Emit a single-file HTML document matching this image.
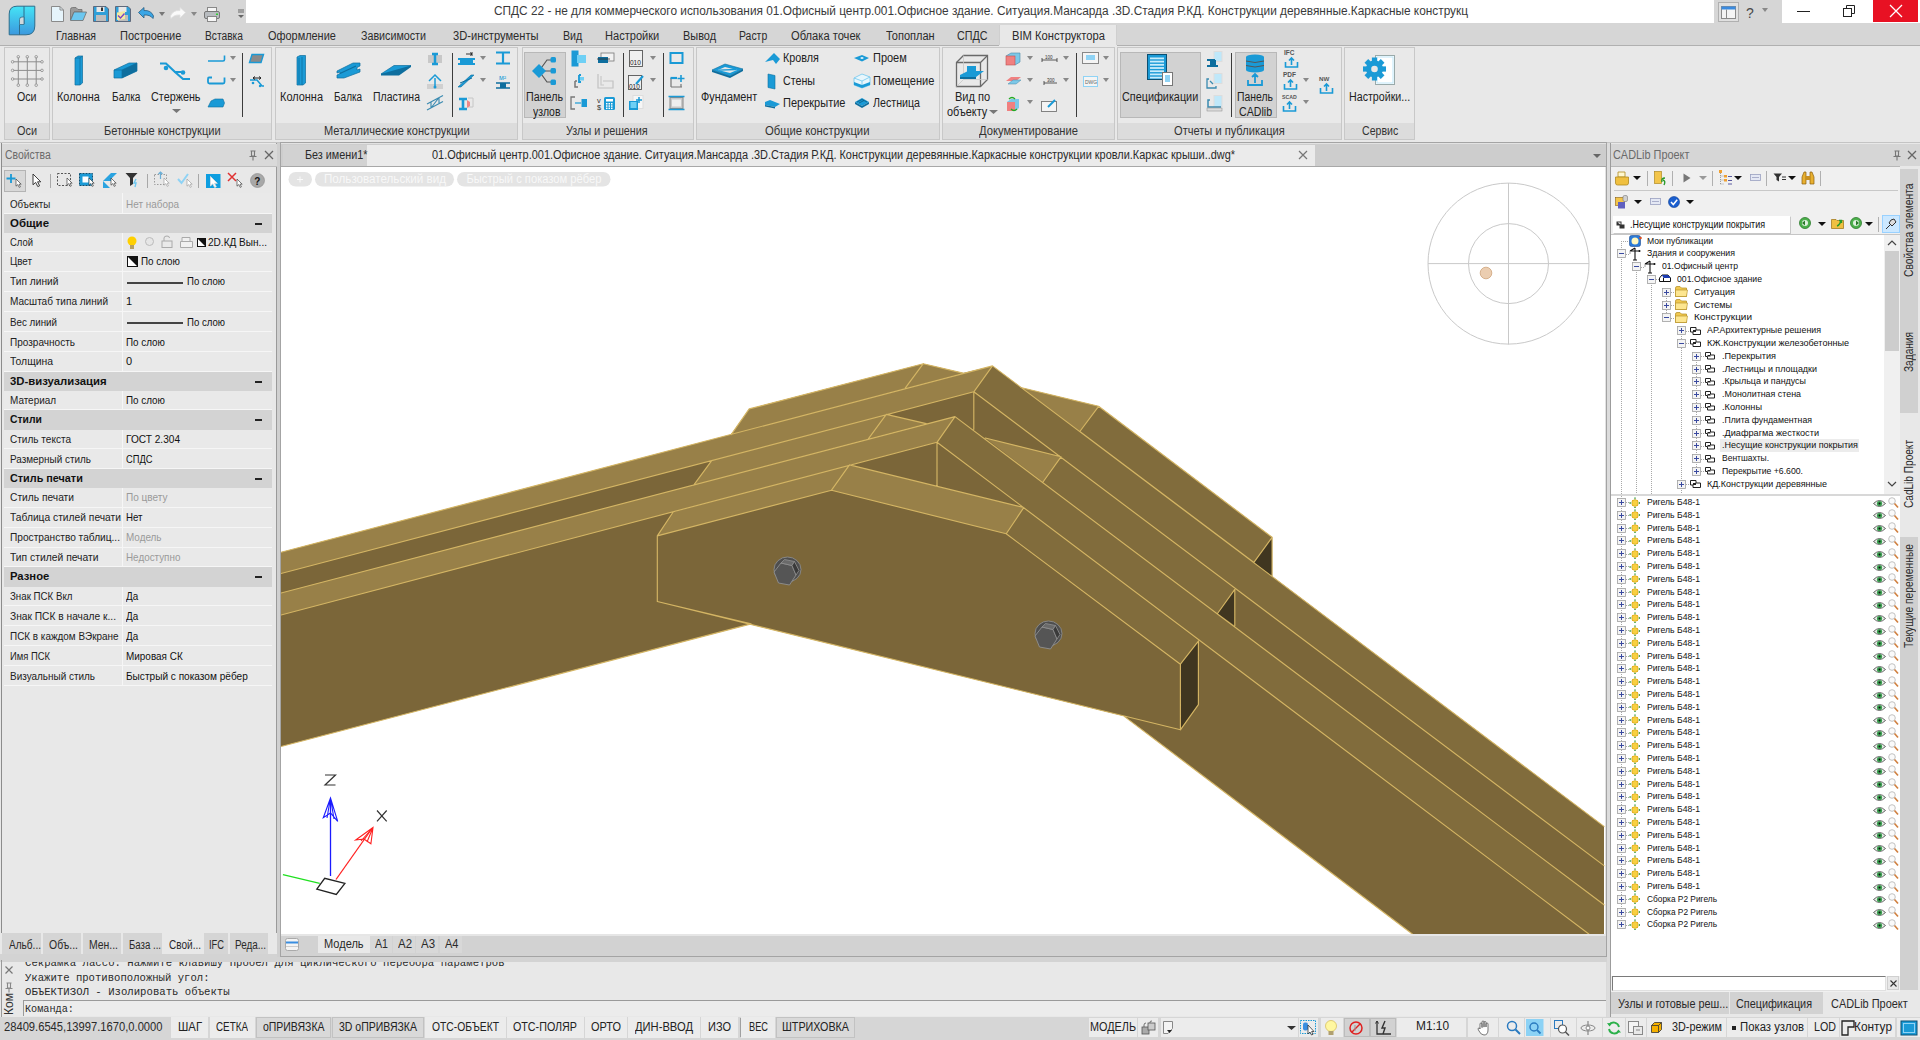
<!DOCTYPE html>
<html><head><meta charset="utf-8">
<style>
*{margin:0;padding:0;box-sizing:border-box}
html,body{width:1920px;height:1040px;overflow:hidden}
body{position:relative;background:#d9d9d9;font-family:"Liberation Sans",sans-serif;font-size:11px;color:#1e1e1e}
.a{position:absolute}
.t{position:absolute;white-space:nowrap;line-height:1;transform-origin:0 0}
svg{position:absolute;overflow:visible}
</style></head><body>
<div class="a" style="left:0px;top:0px;width:1920px;height:23px;background:#ffffff;"></div>
<div class="a" style="left:246px;top:22.5px;width:1468px;height:1.2px;background:#8c8c8c;"></div>
<div class="a" style="left:1782px;top:22.5px;width:138px;height:1.2px;background:#8c8c8c;"></div>
<div class="a" style="left:0px;top:0px;width:246px;height:23px;background:#d6d6d6;"></div>
<div class="a" style="left:1714px;top:0px;width:68px;height:23px;background:#d6d6d6;"></div>
<svg style="left:51px;top:6px;" width="13" height="16" viewBox="0 0 13 16"><path d="M0.5 0.5H9L12.5 4V15.5H0.5z" fill="#e6f4fb" stroke="#8a8a8a"/><path d="M9 0.5V4H12.5" fill="none" stroke="#8a8a8a"/></svg>
<svg style="left:70px;top:7px;" width="17" height="14" viewBox="0 0 17 14"><path d="M0.5 2.5Q0.5 0.5 2.5 0.5H6L8 2.5H12V5H4L0.5 13z" fill="#9a9a9a" stroke="#6e6e6e" stroke-width="0.8"/><path d="M4 5H16.5L13 13.5H0.5z" fill="#6cc7f0" stroke="#6e6e6e" stroke-width="0.8"/></svg>
<svg style="left:93px;top:6px;" width="16" height="16" viewBox="0 0 16 16"><path d="M0.5 0.5H13L15.5 3V15.5H0.5z" fill="#2e9fd8" stroke="#556" stroke-width="0.8"/><rect x="3.5" y="1" width="8" height="5" fill="#e8e8e8"/><rect x="8" y="1.5" width="2" height="3.5" fill="#333"/><rect x="3" y="9" width="10" height="6" fill="#bdbdbd"/></svg>
<svg style="left:115px;top:6px;" width="16" height="16" viewBox="0 0 16 16"><path d="M0.5 0.5H13L15.5 3V15.5H0.5z" fill="#2e9fd8" stroke="#556" stroke-width="0.8"/><rect x="3.5" y="1" width="8" height="5" fill="#e8e8e8"/><rect x="3" y="9" width="10" height="6" fill="#bdbdbd"/><path d="M2 6.5L10 5V13L2 14z" fill="#f3eaa0"/><path d="M3 9.5L5.5 12L9.5 7.5" fill="none" stroke="#7b3fc4" stroke-width="1.3"/></svg>
<svg style="left:138px;top:7px;" width="16" height="12" viewBox="0 0 16 12"><path d="M0.5 5.5L6 0.5V3.5Q13 3 15.5 9L15 11.5Q12 7.5 6 8V11z" fill="#3aa6e6" stroke="#2a5d80" stroke-width="0.8"/></svg>
<svg style="left:159.0px;top:12px;" width="6" height="5" viewBox="0 0 6 5"><path d="M0 0H6L3.0 4z" fill="#777"/></svg>
<svg style="left:170px;top:7px;" width="16" height="12" viewBox="0 0 16 12"><path d="M15.5 5.5L10 0.5V3.5Q3 3 0.5 9L1 11.5Q4 7.5 10 8V11z" fill="#fafafa" stroke="#e0e0e0" stroke-width="0.8"/></svg>
<svg style="left:191.0px;top:12px;" width="6" height="5" viewBox="0 0 6 5"><path d="M0 0H6L3.0 4z" fill="#888"/></svg>
<svg style="left:204px;top:7px;" width="16" height="15" viewBox="0 0 16 15"><rect x="3.5" y="0.5" width="9" height="5" fill="#f6f6f6" stroke="#888"/><rect x="0.5" y="4.5" width="15" height="7" rx="1.5" fill="#b8bcc0" stroke="#777"/><rect x="3.5" y="9.5" width="9" height="5" fill="#f6f6f6" stroke="#888"/><rect x="12" y="6.5" width="2" height="1.5" fill="#3c3"/></svg>
<svg style="left:238px;top:10px;" width="6" height="9" viewBox="0 0 6 9"><path d="M0 0H6M0 2H6" stroke="#666" stroke-width="1"/><path d="M0 5H6L3 8z" fill="#666"/></svg>
<div class="t" style="left:494.00px;top:5.32px;font-size:12.5px;color:#3a3a3a;transform:scaleX(0.9481);">СПДС 22 - не для коммерческого использования 01.Офисный центр.001.Офисное здание. Ситуация.Мансарда .3D.Стадия Р.КД. Конструкции деревянные.Каркасные конструкц</div>
<svg style="left:1718px;top:2px;" width="21" height="20" viewBox="0 0 21 20"><rect x="0.5" y="0.5" width="20" height="19" fill="#e0e0e0" stroke="#b0b0b0"/><rect x="3.5" y="4.5" width="14" height="12" fill="#f4f4f4" stroke="#8a8a8a"/><rect x="3.5" y="4.5" width="14" height="3" fill="#3b8be0"/><path d="M8.5 7.5V16.5" stroke="#8a8a8a"/></svg>
<div class="t" style="left:1746.00px;top:5.65px;font-size:14px;color:#4a4a4a;">?</div>
<svg style="left:1762.0px;top:8px;" width="6" height="5" viewBox="0 0 6 5"><path d="M0 0H6L3.0 4z" fill="#888"/></svg>
<div class="a" style="left:1797px;top:11px;width:13px;height:1.3px;background:#222;"></div>
<svg style="left:1843px;top:5px;" width="12" height="12" viewBox="0 0 12 12"><rect x="0.5" y="3.5" width="8" height="8" fill="none" stroke="#222"/><path d="M3.5 3.5V0.5H11.5V8.5H8.5" fill="none" stroke="#222"/></svg>
<div class="a" style="left:1873px;top:0px;width:45px;height:22px;background:#e81123;"></div>
<svg style="left:1889px;top:4px;" width="14" height="14" viewBox="0 0 14 14"><path d="M1 1L13 13M13 1L1 13" stroke="#fff" stroke-width="1.3"/></svg>
<div class="a" style="left:0px;top:23px;width:1920px;height:22px;background:#d6d6d6;"></div>
<div class="a" style="left:0px;top:45px;width:1920px;height:1px;background:#b0b0b0;"></div>
<div class="a" style="left:999px;top:25px;width:118px;height:21px;background:#e8e8e8;"></div>
<div class="a" style="left:999px;top:25px;width:1px;height:20px;background:#cfcfcf;"></div>
<div class="a" style="left:1116px;top:25px;width:1px;height:20px;background:#cfcfcf;"></div>
<div class="t" style="left:56.30px;top:29.84px;font-size:12px;color:#2b2b2b;transform:scaleX(0.8755);">Главная</div>
<div class="t" style="left:120.00px;top:29.84px;font-size:12px;color:#2b2b2b;transform:scaleX(0.9173);">Построение</div>
<div class="t" style="left:205.00px;top:29.84px;font-size:12px;color:#2b2b2b;transform:scaleX(0.8518);">Вставка</div>
<div class="t" style="left:268.00px;top:29.84px;font-size:12px;color:#2b2b2b;transform:scaleX(0.9103);">Оформление</div>
<div class="t" style="left:361.30px;top:29.84px;font-size:12px;color:#2b2b2b;transform:scaleX(0.8925);">Зависимости</div>
<div class="t" style="left:452.50px;top:29.84px;font-size:12px;color:#2b2b2b;transform:scaleX(0.9268);">3D-инструменты</div>
<div class="t" style="left:562.50px;top:29.84px;font-size:12px;color:#2b2b2b;transform:scaleX(0.8886);">Вид</div>
<div class="t" style="left:605.00px;top:29.84px;font-size:12px;color:#2b2b2b;transform:scaleX(0.9228);">Настройки</div>
<div class="t" style="left:683.30px;top:29.84px;font-size:12px;color:#2b2b2b;transform:scaleX(0.9096);">Вывод</div>
<div class="t" style="left:739.30px;top:29.84px;font-size:12px;color:#2b2b2b;transform:scaleX(0.8689);">Растр</div>
<div class="t" style="left:791.30px;top:29.84px;font-size:12px;color:#2b2b2b;transform:scaleX(0.9290);">Облака точек</div>
<div class="t" style="left:885.80px;top:29.84px;font-size:12px;color:#2b2b2b;transform:scaleX(0.9181);">Топоплан</div>
<div class="t" style="left:957.30px;top:29.84px;font-size:12px;color:#2b2b2b;transform:scaleX(0.8946);">СПДС</div>
<div class="t" style="left:1012.00px;top:29.84px;font-size:12px;color:#2b2b2b;transform:scaleX(0.9322);">BIM Конструктора</div>
<svg style="left:8px;top:5px;" width="29" height="31" viewBox="0 0 29 31"><defs><linearGradient id="lg" x1="0" y1="0" x2="0" y2="1"><stop offset="0" stop-color="#45e4f6"/><stop offset="1" stop-color="#3b98de"/></linearGradient></defs><path d="M9 1.2H26.8V21Q26.8 29.8 18 29.8H1.2V9Q1.2 1.2 9 1.2z" fill="url(#lg)" stroke="#2d6d8c" stroke-width="1"/><path d="M11.5 29.8V19.5M16 19V1.2" fill="none" stroke="#2d6d8c" stroke-width="1"/><path d="M11.5 19.5V14.5Q11.5 12 14 12H16V19.5z" fill="#cfd8dc" stroke="#2d6d8c" stroke-width="0.8"/></svg>
<div class="a" style="left:0px;top:46px;width:1920px;height:96px;background:#e8e8e8;"></div>
<div class="a" style="left:0px;top:142px;width:1920px;height:1px;background:#c4c4c4;"></div>
<div class="a" style="left:4px;top:47px;width:46px;height:93px;border:1px solid #c8c8c8;background:#e9e9e9"></div>
<div class="a" style="left:5px;top:123px;width:44px;height:16px;background:#dcdcdc;"></div>
<div class="t" style="left:17.00px;top:124.64px;font-size:12px;color:#333;transform:scaleX(0.9072);">Оси</div>
<div class="a" style="left:52px;top:47px;width:220px;height:93px;border:1px solid #c8c8c8;background:#e9e9e9"></div>
<div class="a" style="left:53px;top:123px;width:218px;height:16px;background:#dcdcdc;"></div>
<div class="t" style="left:103.80px;top:124.64px;font-size:12px;color:#333;transform:scaleX(0.9238);">Бетонные конструкции</div>
<div class="a" style="left:275px;top:47px;width:243px;height:93px;border:1px solid #c8c8c8;background:#e9e9e9"></div>
<div class="a" style="left:276px;top:123px;width:241px;height:16px;background:#dcdcdc;"></div>
<div class="t" style="left:323.80px;top:124.64px;font-size:12px;color:#333;transform:scaleX(0.9204);">Металлические конструкции</div>
<div class="a" style="left:522px;top:47px;width:172px;height:93px;border:1px solid #c8c8c8;background:#e9e9e9"></div>
<div class="a" style="left:523px;top:123px;width:170px;height:16px;background:#dcdcdc;"></div>
<div class="t" style="left:566.30px;top:124.64px;font-size:12px;color:#333;transform:scaleX(0.8998);">Узлы и решения</div>
<div class="a" style="left:696px;top:47px;width:244px;height:93px;border:1px solid #c8c8c8;background:#e9e9e9"></div>
<div class="a" style="left:697px;top:123px;width:242px;height:16px;background:#dcdcdc;"></div>
<div class="t" style="left:765.00px;top:124.64px;font-size:12px;color:#333;transform:scaleX(0.9410);">Общие конструкции</div>
<div class="a" style="left:942px;top:47px;width:173px;height:93px;border:1px solid #c8c8c8;background:#e9e9e9"></div>
<div class="a" style="left:943px;top:123px;width:171px;height:16px;background:#dcdcdc;"></div>
<div class="t" style="left:978.70px;top:124.64px;font-size:12px;color:#333;transform:scaleX(0.9322);">Документирование</div>
<div class="a" style="left:1117px;top:47px;width:225px;height:93px;border:1px solid #c8c8c8;background:#e9e9e9"></div>
<div class="a" style="left:1118px;top:123px;width:223px;height:16px;background:#dcdcdc;"></div>
<div class="t" style="left:1174.00px;top:124.64px;font-size:12px;color:#333;transform:scaleX(0.9241);">Отчеты и публикация</div>
<div class="a" style="left:1344px;top:47px;width:71px;height:93px;border:1px solid #c8c8c8;background:#e9e9e9"></div>
<div class="a" style="left:1345px;top:123px;width:69px;height:16px;background:#dcdcdc;"></div>
<div class="t" style="left:1361.80px;top:124.64px;font-size:12px;color:#333;transform:scaleX(0.8809);">Сервис</div>
<svg style="left:11px;top:55px;" width="33" height="32" viewBox="0 0 33 32"><path d="M7.3 2.5V29" stroke="#8c8c8c" stroke-width="1"/><circle cx="7.3" cy="1.8" r="1.3" fill="none" stroke="#8c8c8c" stroke-width="0.8"/><circle cx="7.3" cy="30.2" r="1.3" fill="none" stroke="#8c8c8c" stroke-width="0.8"/><path d="M16.3 2.5V29" stroke="#8c8c8c" stroke-width="1"/><circle cx="16.3" cy="1.8" r="1.3" fill="none" stroke="#8c8c8c" stroke-width="0.8"/><circle cx="16.3" cy="30.2" r="1.3" fill="none" stroke="#8c8c8c" stroke-width="0.8"/><path d="M25.2 2.5V29" stroke="#8c8c8c" stroke-width="1"/><circle cx="25.2" cy="1.8" r="1.3" fill="none" stroke="#8c8c8c" stroke-width="0.8"/><circle cx="25.2" cy="30.2" r="1.3" fill="none" stroke="#8c8c8c" stroke-width="0.8"/><path d="M2.5 6.8H30" stroke="#8c8c8c" stroke-width="1"/><circle cx="1.6" cy="6.8" r="1.3" fill="none" stroke="#8c8c8c" stroke-width="0.8"/><circle cx="31" cy="6.8" r="1.3" fill="none" stroke="#8c8c8c" stroke-width="0.8"/><path d="M2.5 15.4H30" stroke="#8c8c8c" stroke-width="1"/><circle cx="1.6" cy="15.4" r="1.3" fill="none" stroke="#8c8c8c" stroke-width="0.8"/><circle cx="31" cy="15.4" r="1.3" fill="none" stroke="#8c8c8c" stroke-width="0.8"/><path d="M2.5 24H30" stroke="#8c8c8c" stroke-width="1"/><circle cx="1.6" cy="24" r="1.3" fill="none" stroke="#8c8c8c" stroke-width="0.8"/><circle cx="31" cy="24" r="1.3" fill="none" stroke="#8c8c8c" stroke-width="0.8"/></svg>
<div class="t" style="left:17.00px;top:90.64px;font-size:12px;color:#222;transform:scaleX(0.8845);">Оси</div>
<svg style="left:73px;top:55px;" width="11" height="31" viewBox="0 0 11 31"><path d="M2 3L5 1H9.5V28L7 30H2z" fill="#1a9ad6" stroke="#0e6e9e" stroke-width="0.7"/><path d="M7 3V30M2 3H7L9.5 1" fill="none" stroke="#0e6e9e" stroke-width="0.7"/></svg>
<div class="t" style="left:57.30px;top:90.64px;font-size:12px;color:#222;transform:scaleX(0.9058);">Колонна</div>
<svg style="left:113px;top:61px;" width="25" height="18" viewBox="0 0 25 18"><path d="M1 9L16 2H24V10L9 17H1z" fill="#1a9ad6" stroke="#0e6e9e" stroke-width="0.7"/><path d="M9 17V9H1M9 9L24 2" fill="none" stroke="#0e6e9e" stroke-width="0.7"/><path d="M9 9L24 2V10L9 17z" fill="#0e6e9e"/></svg>
<div class="t" style="left:111.50px;top:90.64px;font-size:12px;color:#222;transform:scaleX(0.8444);">Балка</div>
<svg style="left:159px;top:61px;" width="33" height="19" viewBox="0 0 33 19"><path d="M1 2.5H7L16 11H22" fill="none" stroke="#1a9ad6" stroke-width="2.2"/><path d="M16 11L24 18H31" fill="none" stroke="#1a9ad6" stroke-width="2.2"/><circle cx="7" cy="7" r="2.3" fill="#1a9ad6"/><circle cx="24" cy="11.5" r="2.3" fill="#1a9ad6"/></svg>
<div class="t" style="left:150.50px;top:90.64px;font-size:12px;color:#222;transform:scaleX(0.9005);">Стержень</div>
<svg style="left:172.0px;top:109px;" width="9" height="5" viewBox="0 0 9 5"><path d="M0 0H9L4.5 4z" fill="#777"/></svg>
<svg style="left:207px;top:54px;" width="19" height="9" viewBox="0 0 19 9"><path d="M1 7H16Q17.5 7 17.5 5.5V1.5" fill="none" stroke="#1a9ad6" stroke-width="1.6"/></svg>
<svg style="left:230.0px;top:56px;" width="6" height="5" viewBox="0 0 6 5"><path d="M0 0H6L3.0 4z" fill="#888"/></svg>
<svg style="left:207px;top:76px;" width="19" height="9" viewBox="0 0 19 9"><path d="M5 1.5H2Q1 1.5 1 3V6Q1 7.5 2.5 7.5H16Q17.5 7.5 17.5 6V1.5" fill="none" stroke="#1a9ad6" stroke-width="1.8"/></svg>
<svg style="left:230.0px;top:78px;" width="6" height="5" viewBox="0 0 6 5"><path d="M0 0H6L3.0 4z" fill="#888"/></svg>
<svg style="left:207px;top:98px;" width="19" height="11" viewBox="0 0 19 11"><path d="M1 9L4 3L8 1H16L17.5 5L16 9z" fill="#1a9ad6" stroke="#0e6e9e" stroke-width="0.6"/></svg>
<div class="a" style="left:241.5px;top:53px;width:1.3px;height:64px;background:#3c3c3c;"></div>
<svg style="left:249px;top:54px;" width="15" height="9" viewBox="0 0 15 9"><path d="M3 0.5H14.5L12 8.5H0.5z" fill="#8a8a8a" stroke="#1a9ad6" stroke-width="1.4"/></svg>
<svg style="left:249px;top:75px;" width="16" height="14" viewBox="0 0 16 14"><path d="M1 5H8L13 11H15" fill="none" stroke="#1a9ad6" stroke-width="1.6"/><path d="M4 3H12M4 3L6 1.5M4 3L6 4.5M12 3L10 1.5M12 3L10 4.5" fill="none" stroke="#222" stroke-width="1"/><circle cx="4" cy="8" r="1.3" fill="#1a9ad6"/><circle cx="11" cy="11" r="1.2" fill="#1a9ad6"/></svg>
<svg style="left:296px;top:55px;" width="11" height="31" viewBox="0 0 11 31"><path d="M1 2L4 0.5H9.5V28L7 30H1z" fill="#1a9ad6" stroke="#0e6e9e" stroke-width="0.7"/><path d="M3 3V29M6 2V30" stroke="#0e6e9e" stroke-width="0.8"/></svg>
<div class="t" style="left:279.50px;top:90.64px;font-size:12px;color:#222;transform:scaleX(0.9122);">Колонна</div>
<svg style="left:336px;top:61px;" width="25" height="18" viewBox="0 0 25 18"><path d="M1 10L17 2H24V5L21 6.5V9L24 8V11L8 17H1V14L4 12.5V11L1 12z" fill="#1a9ad6" stroke="#0e6e9e" stroke-width="0.7"/><path d="M4 12.5L20 5" stroke="#0e6e9e" stroke-width="1.2"/></svg>
<div class="t" style="left:333.80px;top:90.64px;font-size:12px;color:#222;transform:scaleX(0.8356);">Балка</div>
<svg style="left:380px;top:64px;" width="32" height="12" viewBox="0 0 32 12"><path d="M1 10L14 1.5H31L19 10z" fill="#1a9ad6" stroke="#0e6e9e" stroke-width="0.7"/><path d="M1 10V11.5H19L31 3V1.5" fill="#0e6e9e"/></svg>
<div class="t" style="left:373.00px;top:90.64px;font-size:12px;color:#222;transform:scaleX(0.8734);">Пластина</div>
<svg style="left:427px;top:53px;" width="16" height="12" viewBox="0 0 16 12"><rect x="1" y="2" width="14" height="8" fill="#c8c8c8"/><path d="M5 1H11M5 11H11M8 1V11" stroke="#1a9ad6" stroke-width="2.5"/></svg>
<svg style="left:426px;top:73px;" width="18" height="17" viewBox="0 0 18 17"><rect x="1" y="11" width="16" height="5" fill="#d0d0d0"/><path d="M3 8L9 2L15 8" fill="none" stroke="#1a9ad6" stroke-width="1.5"/><path d="M9 5V15" stroke="#1a9ad6" stroke-width="1.5"/><circle cx="9" cy="14" r="1.5" fill="#1a9ad6"/></svg>
<svg style="left:426px;top:94px;" width="19" height="17" viewBox="0 0 19 17"><path d="M1 10L17 1.5M1 16L17 7.5M5 8V14M13 3.5V10M5 14L13 3.5" fill="none" stroke="#3a8ab0" stroke-width="1.1"/></svg>
<div class="a" style="left:452px;top:53px;width:1.3px;height:64px;background:#3c3c3c;"></div>
<svg style="left:457px;top:52px;" width="20" height="13" viewBox="0 0 20 13"><path d="M1 7H18M1 12H18" stroke="#1a9ad6" stroke-width="1.8"/><rect x="3" y="7" width="13" height="5" fill="#1a9ad6"/><path d="M9 2H15M13 0.5L15 2L13 3.5M15 0V4" stroke="#222" stroke-width="0.9" fill="none"/></svg>
<svg style="left:480.0px;top:56px;" width="6" height="5" viewBox="0 0 6 5"><path d="M0 0H6L3.0 4z" fill="#888"/></svg>
<svg style="left:457px;top:74px;" width="18" height="14" viewBox="0 0 18 14"><path d="M1 13L14 1H17L4 13z" fill="#1a9ad6" stroke="#0e6e9e" stroke-width="0.6"/><path d="M3 9L15 4" stroke="#0e6e9e" stroke-width="1"/></svg>
<svg style="left:480.0px;top:78px;" width="6" height="5" viewBox="0 0 6 5"><path d="M0 0H6L3.0 4z" fill="#888"/></svg>
<svg style="left:457px;top:96px;" width="18" height="15" viewBox="0 0 18 15"><path d="M2 3H10M2 13H10M6 3V13" stroke="#1a9ad6" stroke-width="2.6"/><path d="M11 2H16V11H11" fill="none" stroke="#c6c6c6" stroke-width="1"/><path d="M10 4L13 6V10L10 12" fill="#e88" stroke="none"/></svg>
<svg style="left:495px;top:51px;" width="16" height="14" viewBox="0 0 16 14"><path d="M1 1.5H15M1 12.5H15M8 1.5V12.5" stroke="#1a9ad6" stroke-width="2.2"/></svg>
<svg style="left:495px;top:73px;" width="16" height="16" viewBox="0 0 16 16"><path d="M1 10H15M1 15H15" stroke="#0e6e9e" stroke-width="1.6"/><rect x="5" y="10" width="6" height="5" fill="#0e6e9e"/><text x="4" y="7" font-size="7" fill="#1a9ad6" font-family="Liberation Sans">м²</text></svg>
<div class="a" style="left:524px;top:52px;width:42px;height:66px;background:#d2d2d2;border:1px solid #b8b8b8"></div>
<svg style="left:532px;top:55px;" width="25" height="32" viewBox="0 0 25 32"><path d="M7 16L15 5H19M7 16L19 16M7 16L15 27H19" fill="none" stroke="#555" stroke-width="1.2"/><path d="M7 9L14 16L7 23L0 16z" fill="#1a9ad6"/><rect x="18.5" y="2" width="5.5" height="5.5" rx="1.5" fill="#1a9ad6"/><rect x="18.5" y="13" width="5.5" height="5.5" rx="1.5" fill="#1a9ad6"/><rect x="18.5" y="24.5" width="5.5" height="5.5" rx="1.5" fill="#1a9ad6"/></svg>
<div class="t" style="left:525.50px;top:90.64px;font-size:12px;color:#222;transform:scaleX(0.8922);">Панель</div>
<div class="t" style="left:532.50px;top:105.84px;font-size:12px;color:#222;transform:scaleX(0.8713);">узлов</div>
<svg style="left:571px;top:50px;" width="16" height="18" viewBox="0 0 16 18"><rect x="0.5" y="0.5" width="7" height="16" fill="#1a9ad6"/><rect x="6" y="5" width="9" height="8" fill="#6fd0f5"/></svg>
<svg style="left:572px;top:73px;" width="12" height="16" viewBox="0 0 12 16"><path d="M3 8V14H6M3 8H5" fill="none" stroke="#777" stroke-width="1.5"/><path d="M7 2V9H9M7 2H9" fill="none" stroke="#1a9ad6" stroke-width="1.8"/><rect x="8" y="4" width="4" height="3.5" fill="#6fd0f5"/></svg>
<svg style="left:570px;top:96px;" width="18" height="14" viewBox="0 0 18 14"><path d="M5 1H1V13H5" fill="none" stroke="#777" stroke-width="1.3"/><path d="M5 7H11" stroke="#1a9ad6" stroke-width="1.2"/><rect x="11.5" y="3" width="5.5" height="8" fill="#1a9ad6"/></svg>
<svg style="left:597px;top:52px;" width="18" height="13" viewBox="0 0 18 13"><rect x="4" y="1" width="13" height="8" fill="#f2f2f2" stroke="#777" stroke-width="0.8"/><rect x="1" y="5" width="10" height="6" fill="#0e6e9e"/><path d="M0 7H13" stroke="#333" stroke-width="0.8"/></svg>
<svg style="left:597px;top:73px;" width="18" height="17" viewBox="0 0 18 17"><path d="M1 1V15H16V8H6" fill="none" stroke="#c2c2c2" stroke-width="1.2"/><path d="M4 3V12H7" fill="none" stroke="#c8c8c8" stroke-width="1.2"/></svg>
<svg style="left:597px;top:96px;" width="19" height="14" viewBox="0 0 19 14"><text x="0" y="7" font-size="7.5" fill="#333" font-family="Liberation Sans">v</text><text x="0" y="13.5" font-size="7.5" fill="#333" font-family="Liberation Sans">$</text><rect x="7" y="1" width="11" height="13" rx="1.5" fill="#1a9ad6"/><rect x="9" y="3" width="7" height="2.5" fill="#fff"/><rect x="9.0" y="7.0" width="1.5" height="1.5" fill="#fff"/><rect x="9.0" y="9.3" width="1.5" height="1.5" fill="#fff"/><rect x="9.0" y="11.6" width="1.5" height="1.5" fill="#fff"/><rect x="11.5" y="7.0" width="1.5" height="1.5" fill="#fff"/><rect x="11.5" y="9.3" width="1.5" height="1.5" fill="#fff"/><rect x="11.5" y="11.6" width="1.5" height="1.5" fill="#fff"/><rect x="14.0" y="7.0" width="1.5" height="1.5" fill="#fff"/><rect x="14.0" y="9.3" width="1.5" height="1.5" fill="#fff"/><rect x="14.0" y="11.6" width="1.5" height="1.5" fill="#fff"/></svg>
<div class="a" style="left:623px;top:53px;width:1.3px;height:64px;background:#3c3c3c;"></div>
<svg style="left:629px;top:50px;" width="14" height="17" viewBox="0 0 14 17"><rect x="0.5" y="0.5" width="13" height="16" fill="#f0f0f0" stroke="#555" stroke-width="0.9"/><text x="1" y="15" font-size="6.5" fill="#222" font-family="Liberation Sans">010</text></svg>
<svg style="left:650.0px;top:56px;" width="6" height="5" viewBox="0 0 6 5"><path d="M0 0H6L3.0 4z" fill="#888"/></svg>
<svg style="left:628px;top:73px;" width="17" height="17" viewBox="0 0 17 17"><rect x="0.5" y="2.5" width="13" height="14" fill="#f0f0f0" stroke="#555" stroke-width="0.9"/><text x="1" y="15.5" font-size="6.5" fill="#222" font-family="Liberation Sans">010</text><path d="M8 11L15 3" stroke="#1a9ad6" stroke-width="2"/></svg>
<svg style="left:650.0px;top:78px;" width="6" height="5" viewBox="0 0 6 5"><path d="M0 0H6L3.0 4z" fill="#888"/></svg>
<svg style="left:628px;top:95px;" width="16" height="16" viewBox="0 0 16 16"><rect x="5" y="0.5" width="10" height="13" fill="#f6f6f6" stroke="#ddd"/><rect x="1" y="6" width="9" height="9" fill="#1a9ad6"/><rect x="2.5" y="7" width="6" height="6" fill="#6fd0f5"/><path d="M11 2V8M8 5H14" stroke="#1a9ad6" stroke-width="1.5"/></svg>
<div class="a" style="left:663px;top:53px;width:1.3px;height:64px;background:#3c3c3c;"></div>
<svg style="left:669px;top:51px;" width="16" height="14" viewBox="0 0 16 14"><rect x="1.5" y="2" width="12" height="10" fill="none" stroke="#1a9ad6" stroke-width="2"/><path d="M1 2H14M1 12H14" stroke="#1a9ad6" stroke-width="2"/></svg>
<svg style="left:669px;top:74px;" width="18" height="16" viewBox="0 0 18 16"><path d="M2 4V13M2 13H13" fill="none" stroke="#777" stroke-width="1.2"/><path d="M1.5 4H8" stroke="#1a9ad6" stroke-width="2.2"/><path d="M12 1V8M8.5 4.5H15.5" stroke="#1a9ad6" stroke-width="1.6"/><path d="M12 10V13" stroke="#777" stroke-width="1.2"/></svg>
<svg style="left:668px;top:95px;" width="17" height="16" viewBox="0 0 17 16"><rect x="2" y="2.5" width="13" height="11" fill="#c8c8c8" stroke="#8a8a8a"/><rect x="4" y="4.5" width="9" height="7" fill="#eee"/><path d="M0.5 1.5H16.5M0.5 14.5H16.5" stroke="#1a9ad6" stroke-width="1.5"/></svg>
<svg style="left:711px;top:63px;" width="33" height="15" viewBox="0 0 33 15"><path d="M1 7L14 1L32 6L19 13z" fill="#1a9ad6" stroke="#0e6e9e" stroke-width="0.6"/><path d="M1 7V9L19 15L32 8V6L19 13z" fill="#0e6e9e"/><path d="M7 7L14 4L26 7L19 10z" fill="#e8e8e8"/><path d="M8 7.2L25 6.5" stroke="#1a9ad6" stroke-width="1.3"/></svg>
<div class="t" style="left:700.50px;top:90.64px;font-size:12px;color:#222;transform:scaleX(0.9010);">Фундамент</div>
<svg style="left:764px;top:52px;" width="17" height="12" viewBox="0 0 17 12"><path d="M1 10L8 3L10 1L16 7L12 12L9 8z" fill="#1a9ad6"/></svg>
<div class="t" style="left:782.50px;top:52.34px;font-size:12px;color:#222;transform:scaleX(0.8964);">Кровля</div>
<svg style="left:767px;top:73px;" width="10" height="17" viewBox="0 0 10 17"><path d="M1 1L8 2.5V16L1 14.5z" fill="#1a9ad6" stroke="#0e6e9e" stroke-width="0.6"/></svg>
<div class="t" style="left:782.50px;top:74.84px;font-size:12px;color:#222;transform:scaleX(0.8900);">Стены</div>
<svg style="left:764px;top:99px;" width="17" height="10" viewBox="0 0 17 10"><path d="M1 3L6 1L16 5L11 8L1 6z" fill="#1a9ad6"/><path d="M1 6L11 8V9.5L1 7.5z" fill="#0e6e9e"/></svg>
<div class="t" style="left:782.50px;top:97.34px;font-size:12px;color:#222;transform:scaleX(0.9181);">Перекрытие</div>
<svg style="left:853px;top:54px;" width="17" height="9" viewBox="0 0 17 9"><path d="M1 4L9 1L16 4L9 7.5z" fill="#1a9ad6"/><path d="M7 4L9 3L11 4L9 5z" fill="#fff"/></svg>
<div class="t" style="left:872.50px;top:52.34px;font-size:12px;color:#222;transform:scaleX(0.9158);">Проем</div>
<svg style="left:853px;top:73px;" width="18" height="16" viewBox="0 0 18 16"><path d="M1 5L9 1L17 4V12L9 15L1 12z" fill="#e8f6fc" stroke="#6fc6ee" stroke-width="0.8"/><path d="M1 5L9 8L17 4M9 8V15" fill="none" stroke="#6fc6ee" stroke-width="0.8"/><path d="M1 9L9 12L17 9V12L9 15L1 12z" fill="#1a9ad6"/></svg>
<div class="t" style="left:872.50px;top:74.84px;font-size:12px;color:#222;transform:scaleX(0.9199);">Помещение</div>
<svg style="left:854px;top:97px;" width="16" height="11" viewBox="0 0 16 11"><path d="M1 5L8 1L15 5L8 9z" fill="#1a9ad6"/><path d="M3 5L8 2.5L13 5M5 6L10 3.5" stroke="#0a5a80" stroke-width="0.8" fill="none"/><path d="M1 5V7L8 11L15 7V5L8 9z" fill="#0e6e9e"/></svg>
<div class="t" style="left:872.50px;top:97.34px;font-size:12px;color:#222;transform:scaleX(0.8881);">Лестница</div>
<svg style="left:955px;top:54px;" width="34" height="33" viewBox="0 0 34 33"><path d="M1.5 8.5L8.5 1.5H32.5V25.5L25.5 32.5H1.5z" fill="none" stroke="#6a6a6a" stroke-width="1.3"/><path d="M1.5 8.5H25.5V32.5M25.5 8.5L32.5 1.5" fill="none" stroke="#6a6a6a" stroke-width="1.3"/><path d="M8.5 1.5V25.5H32.5M8.5 25.5L1.5 32.5" fill="none" stroke="#c8c8c8" stroke-width="0.8"/><path d="M5 21L13 17H29L21 23H5z" fill="#1a9ad6"/><path d="M12 17V12H21V18H12" fill="#1a9ad6"/><path d="M5 23H21V25H5z" fill="#0e6e9e"/></svg>
<div class="t" style="left:954.70px;top:90.64px;font-size:12px;color:#222;transform:scaleX(0.9210);">Вид по</div>
<div class="t" style="left:947.00px;top:105.84px;font-size:12px;color:#222;transform:scaleX(0.9088);">объекту</div>
<svg style="left:988.5px;top:110px;" width="9" height="5" viewBox="0 0 9 5"><path d="M0 0H9L4.5 4z" fill="#777"/></svg>
<svg style="left:1005px;top:52px;" width="16" height="14" viewBox="0 0 16 14"><path d="M1 4L6 1H15V10L10 13z" fill="#7cc8e8" stroke="#4a8aa8" stroke-width="0.6"/><rect x="1" y="4" width="9" height="9" fill="#f08080" stroke="#c05050" stroke-width="0.6"/></svg>
<svg style="left:1027.0px;top:56px;" width="6" height="5" viewBox="0 0 6 5"><path d="M0 0H6L3.0 4z" fill="#888"/></svg>
<svg style="left:1005px;top:76px;" width="17" height="9" viewBox="0 0 17 9"><path d="M1 5L6 1H16L11 5z" fill="#f08080"/><path d="M3 8L8 4H16L11 8z" fill="#7cc8e8" stroke="#4a8aa8" stroke-width="0.5"/></svg>
<svg style="left:1027.0px;top:78px;" width="6" height="5" viewBox="0 0 6 5"><path d="M0 0H6L3.0 4z" fill="#888"/></svg>
<svg style="left:1006px;top:97px;" width="14" height="15" viewBox="0 0 14 15"><path d="M1 5L5 2H13V11L9 14z" fill="#7cc8e8"/><rect x="1" y="5" width="8" height="9" fill="#f08080"/><path d="M3 2Q6 -1 9 2M11 12Q8 15 5 12" stroke="#2a2" stroke-width="1.3" fill="none"/></svg>
<svg style="left:1027.0px;top:100px;" width="6" height="5" viewBox="0 0 6 5"><path d="M0 0H6L3.0 4z" fill="#888"/></svg>
<svg style="left:1041px;top:55px;" width="17" height="8" viewBox="0 0 17 8"><path d="M1 5H16M1 3V7M16 3V7" stroke="#333" stroke-width="0.8"/><text x="4" y="4" font-size="4.5" fill="#333" font-family="Liberation Sans">100</text></svg>
<svg style="left:1063.0px;top:56px;" width="6" height="5" viewBox="0 0 6 5"><path d="M0 0H6L3.0 4z" fill="#888"/></svg>
<svg style="left:1042px;top:77px;" width="16" height="8" viewBox="0 0 16 8"><path d="M2 6H15M2 4V8" stroke="#333" stroke-width="0.8"/><text x="5" y="4.5" font-size="4.5" fill="#333" font-family="Liberation Sans">300</text></svg>
<svg style="left:1063.0px;top:78px;" width="6" height="5" viewBox="0 0 6 5"><path d="M0 0H6L3.0 4z" fill="#888"/></svg>
<svg style="left:1041px;top:98px;" width="17" height="14" viewBox="0 0 17 14"><rect x="0.5" y="3.5" width="15" height="10" fill="#f4f4f4" stroke="#777" stroke-width="0.9"/><path d="M7 9L14 2" stroke="#1a9ad6" stroke-width="2"/></svg>
<div class="a" style="left:1076px;top:53px;width:1.3px;height:64px;background:#3c3c3c;"></div>
<svg style="left:1082px;top:52px;" width="17" height="12" viewBox="0 0 17 12"><rect x="0.5" y="0.5" width="16" height="11" fill="#f4f4f4" stroke="#888"/><rect x="4" y="3" width="9" height="5" fill="#8fd3f5"/></svg>
<svg style="left:1103.0px;top:56px;" width="6" height="5" viewBox="0 0 6 5"><path d="M0 0H6L3.0 4z" fill="#888"/></svg>
<svg style="left:1083px;top:76px;" width="15" height="11" viewBox="0 0 15 11"><rect x="0.5" y="0.5" width="14" height="10" fill="#f4f4f4" stroke="#8fd3f5"/><text x="2" y="7.5" font-size="5" fill="#666" font-family="Liberation Sans">DWG</text></svg>
<svg style="left:1103.0px;top:78px;" width="6" height="5" viewBox="0 0 6 5"><path d="M0 0H6L3.0 4z" fill="#888"/></svg>
<div class="a" style="left:1120px;top:52px;width:81px;height:66px;background:#d2d2d2;border:1px solid #b8b8b8"></div>
<svg style="left:1147px;top:54px;" width="27" height="33" viewBox="0 0 27 33"><rect x="0.5" y="0.5" width="19" height="25" fill="#1a9ad6" stroke="#0b4f72" stroke-width="1"/><rect x="3" y="3.5" width="14" height="1.8" fill="#c8ecfb"/><rect x="3" y="6.7" width="14" height="1.8" fill="#c8ecfb"/><rect x="3" y="9.9" width="14" height="1.8" fill="#c8ecfb"/><rect x="3" y="13.100000000000001" width="14" height="1.8" fill="#c8ecfb"/><rect x="3" y="16.3" width="14" height="1.8" fill="#c8ecfb"/><rect x="3" y="19.5" width="14" height="1.8" fill="#c8ecfb"/><rect x="3" y="22.700000000000003" width="14" height="1.8" fill="#c8ecfb"/><rect x="15.5" y="18.5" width="10" height="13" fill="#fff" stroke="#777"/><rect x="18" y="21" width="5" height="7" fill="#8fd3f5"/></svg>
<div class="t" style="left:1122.00px;top:90.64px;font-size:12px;color:#222;transform:scaleX(0.9021);">Спецификации</div>
<svg style="left:1206px;top:51px;" width="17" height="17" viewBox="0 0 17 17"><rect x="8" y="0.5" width="8" height="10" fill="#bfe8fa" stroke="#ddd"/><path d="M1 9H9M1 15H12" stroke="#0e6e9e" stroke-width="1.8"/><rect x="4" y="9" width="6" height="6" fill="#0e6e9e"/></svg>
<svg style="left:1206px;top:73px;" width="17" height="17" viewBox="0 0 17 17"><rect x="8" y="0.5" width="8" height="10" fill="#bfe8fa" stroke="#ddd"/><path d="M3 6H1V15H10V13" fill="none" stroke="#3a8ab0" stroke-width="1.3"/><path d="M4 8L7 11" stroke="#3a8ab0" stroke-width="1.2"/></svg>
<svg style="left:1206px;top:95px;" width="17" height="17" viewBox="0 0 17 17"><rect x="8" y="0.5" width="8" height="11" fill="#bfe8fa" stroke="#ddd"/><path d="M4 5H2V12H15" fill="none" stroke="#3a8ab0" stroke-width="1.5"/><rect x="1" y="13" width="15" height="3" fill="#ddd" stroke="#888" stroke-width="0.5"/></svg>
<div class="a" style="left:1230.5px;top:53px;width:1.3px;height:64px;background:#3c3c3c;"></div>
<div class="a" style="left:1235px;top:52px;width:42px;height:66px;background:#d2d2d2;border:1px solid #b8b8b8"></div>
<svg style="left:1245px;top:54px;" width="20" height="33" viewBox="0 0 20 33"><ellipse cx="10" cy="3" rx="9" ry="2.5" fill="#1a9ad6"/><rect x="1" y="3" width="18" height="13" fill="#1a9ad6"/><ellipse cx="10" cy="16" rx="9" ry="2.5" fill="#1a9ad6"/><path d="M1 7Q10 10 19 7M1 11.5Q10 14.5 19 11.5" stroke="#555" stroke-width="1" fill="none"/><path d="M3 26V31H17V26" fill="none" stroke="#1a9ad6" stroke-width="1.8"/><path d="M10 29V20M7 23L10 20L13 23" fill="none" stroke="#1a9ad6" stroke-width="1.8"/><path d="M7.5 23L10 19.5L12.5 23z" fill="#1a9ad6"/></svg>
<div class="t" style="left:1237.30px;top:90.64px;font-size:12px;color:#222;transform:scaleX(0.8657);">Панель</div>
<div class="t" style="left:1238.60px;top:105.84px;font-size:12px;color:#222;transform:scaleX(0.8864);">CADlib</div>
<svg style="left:1283px;top:48px;" width="18" height="21" viewBox="0 0 18 21"><text x="1" y="7" font-size="6.5" font-weight="bold" fill="#555" font-family="Liberation Sans">IFC</text><path d="M2.5 14V19H14.5V14" fill="none" stroke="#1a9ad6" stroke-width="1.6"/><path d="M8.5 17V10M6 12.5L8.5 10L11 12.5" fill="none" stroke="#1a9ad6" stroke-width="1.6"/></svg>
<svg style="left:1282px;top:70px;" width="18" height="21" viewBox="0 0 18 21"><text x="1" y="7" font-size="6.5" font-weight="bold" fill="#555" font-family="Liberation Sans">PDF</text><path d="M2.5 14V19H14.5V14" fill="none" stroke="#1a9ad6" stroke-width="1.6"/><path d="M8.5 17V10M6 12.5L8.5 10L11 12.5" fill="none" stroke="#1a9ad6" stroke-width="1.6"/></svg>
<svg style="left:1281px;top:92px;" width="18" height="21" viewBox="0 0 18 21"><text x="1" y="7" font-size="5.2" font-weight="bold" fill="#555" font-family="Liberation Sans">SCAD</text><path d="M2.5 14V19H14.5V14" fill="none" stroke="#1a9ad6" stroke-width="1.6"/><path d="M8.5 17V10M6 12.5L8.5 10L11 12.5" fill="none" stroke="#1a9ad6" stroke-width="1.6"/></svg>
<svg style="left:1318px;top:74px;" width="18" height="21" viewBox="0 0 18 21"><text x="1" y="7" font-size="6.2" font-weight="bold" fill="#555" font-family="Liberation Sans">NW</text><path d="M2.5 14V19H14.5V14" fill="none" stroke="#1a9ad6" stroke-width="1.6"/><path d="M8.5 17V10M6 12.5L8.5 10L11 12.5" fill="none" stroke="#1a9ad6" stroke-width="1.6"/></svg>
<svg style="left:1303.0px;top:78px;" width="6" height="5" viewBox="0 0 6 5"><path d="M0 0H6L3.0 4z" fill="#888"/></svg>
<svg style="left:1303.0px;top:100px;" width="6" height="5" viewBox="0 0 6 5"><path d="M0 0H6L3.0 4z" fill="#888"/></svg>
<svg style="left:1363px;top:54px;" width="34" height="33" viewBox="0 0 34 33"><rect x="12.5" y="1.5" width="19" height="29" fill="#fff" stroke="#9aa" stroke-width="1"/><rect x="14" y="3" width="16" height="26" fill="none" stroke="#bfe8fa" stroke-width="1"/><g transform="translate(11.5 15)"><rect x="-2.6" y="-11.5" width="5.2" height="6" fill="#1a9ad6" transform="rotate(0)"/><rect x="-2.6" y="-11.5" width="5.2" height="6" fill="#1a9ad6" transform="rotate(45)"/><rect x="-2.6" y="-11.5" width="5.2" height="6" fill="#1a9ad6" transform="rotate(90)"/><rect x="-2.6" y="-11.5" width="5.2" height="6" fill="#1a9ad6" transform="rotate(135)"/><rect x="-2.6" y="-11.5" width="5.2" height="6" fill="#1a9ad6" transform="rotate(180)"/><rect x="-2.6" y="-11.5" width="5.2" height="6" fill="#1a9ad6" transform="rotate(225)"/><rect x="-2.6" y="-11.5" width="5.2" height="6" fill="#1a9ad6" transform="rotate(270)"/><rect x="-2.6" y="-11.5" width="5.2" height="6" fill="#1a9ad6" transform="rotate(315)"/><circle r="8.5" fill="#1a9ad6"/><circle r="3.3" fill="#e8e8e8"/></g></svg>
<div class="t" style="left:1349.30px;top:90.64px;font-size:12px;color:#222;transform:scaleX(0.8890);">Настройки...</div>
<div class="a" style="left:0px;top:143px;width:277px;height:814px;background:#e8e8e8;"></div>
<div class="a" style="left:1px;top:143px;width:1px;height:790px;background:#8c8c8c;"></div>
<div class="a" style="left:276px;top:143px;width:1px;height:790px;background:#9a9a9a;"></div>
<div class="a" style="left:2px;top:144px;width:275px;height:22px;background:#d9d9d9;"></div>
<div class="a" style="left:2px;top:166px;width:275px;height:1px;background:#bdbdbd;"></div>
<div class="t" style="left:4.60px;top:148.74px;font-size:12px;color:#6a6a6a;transform:scaleX(0.8671);">Свойства</div>
<svg style="left:249px;top:150px;" width="8" height="11" viewBox="0 0 8 11"><path d="M1.5 1H6.5M2.5 1V6H5.5V1M0.5 6.5H7.5M4 6.5V10.5" fill="none" stroke="#777" stroke-width="1.1"/></svg>
<svg style="left:264px;top:150px;" width="10" height="10" viewBox="0 0 10 10"><path d="M1 1L9 9M9 1L1 9" stroke="#666" stroke-width="1.3"/></svg>
<div class="a" style="left:3.5px;top:170px;width:22px;height:21.5px;background:#d8d8d8;border:1px solid #b4b4b4"></div>
<svg style="left:6px;top:173px;" width="20" height="18" viewBox="0 0 20 18"><path d="M5 1V10M0.5 5.5H9.5" stroke="#1a9ad6" stroke-width="1.8"/><path transform="translate(10 6) scale(0.8)" d="M0 0V9L2.2 7L4 10.5L5.5 9.8L3.8 6.5H6.5z" fill="#fff" stroke="#333" stroke-width="0.8"/></svg>
<svg style="left:32px;top:173px;" width="10" height="14" viewBox="0 0 10 14"><path transform="translate(1 1) scale(1.2)" d="M0 0V9L2.2 7L4 10.5L5.5 9.8L3.8 6.5H6.5z" fill="#fff" stroke="#333" stroke-width="0.8"/></svg>
<div class="a" style="left:50px;top:174px;width:1px;height:14px;background:#a8a8a8;"></div>
<svg style="left:57px;top:172px;" width="18" height="17" viewBox="0 0 18 17"><rect x="0.5" y="1.5" width="13" height="12" fill="none" stroke="#555" stroke-dasharray="2 1.5"/><path transform="translate(10 6) scale(0.8)" d="M0 0V9L2.2 7L4 10.5L5.5 9.8L3.8 6.5H6.5z" fill="#fff" stroke="#333" stroke-width="0.8"/></svg>
<svg style="left:79px;top:172px;" width="18" height="17" viewBox="0 0 18 17"><rect x="0.5" y="1.5" width="13" height="12" fill="#1a9ad6" stroke="#0b4f72" stroke-dasharray="2 1"/><rect x="3.5" y="4.5" width="6" height="6" fill="#fff"/><path transform="translate(10 6) scale(0.8)" d="M0 0V9L2.2 7L4 10.5L5.5 9.8L3.8 6.5H6.5z" fill="#fff" stroke="#333" stroke-width="0.8"/></svg>
<svg style="left:102px;top:172px;" width="18" height="17" viewBox="0 0 18 17"><path d="M1 9L9 1V9z" fill="#2aa3e0"/><path d="M9 1H15L9 7z" fill="#2aa3e0"/><path d="M1 9V16H8z" fill="#2aa3e0"/><path transform="translate(9 6) scale(0.8)" d="M0 0V9L2.2 7L4 10.5L5.5 9.8L3.8 6.5H6.5z" fill="#fff" stroke="#333" stroke-width="0.8"/></svg>
<svg style="left:125px;top:172px;" width="15" height="17" viewBox="0 0 15 17"><path d="M0.5 1H12.5L8 6V12L5 14V6z" fill="#333"/><path d="M11 7L9 11H11L10 15" fill="none" stroke="#6cc7f0" stroke-width="1.4"/></svg>
<div class="a" style="left:147px;top:174px;width:1px;height:14px;background:#a8a8a8;"></div>
<svg style="left:154px;top:171px;" width="17" height="18" viewBox="0 0 17 18"><rect x="0.5" y="3.5" width="12" height="10" fill="none" stroke="#9a9a9a" stroke-dasharray="1.5 1.5"/><path d="M6.5 8V1M4.5 3L6.5 1L8.5 3" fill="none" stroke="#6aaed6" stroke-width="1.2"/><path transform="translate(10 7) scale(0.8)" d="M0 0V9L2.2 7L4 10.5L5.5 9.8L3.8 6.5H6.5z" fill="#fff" stroke="#999" stroke-width="0.8"/></svg>
<svg style="left:177px;top:173px;" width="17" height="16" viewBox="0 0 17 16"><path d="M1 6L4.5 10L11 1" fill="none" stroke="#8fd3f5" stroke-width="2"/><path transform="translate(10 6) scale(0.8)" d="M0 0V9L2.2 7L4 10.5L5.5 9.8L3.8 6.5H6.5z" fill="#fff" stroke="#999" stroke-width="0.8"/></svg>
<div class="a" style="left:198px;top:174px;width:1px;height:14px;background:#a8a8a8;"></div>
<svg style="left:206px;top:174px;" width="15" height="14" viewBox="0 0 15 14"><rect x="0" y="0" width="14.5" height="14" fill="#0e9ee0"/><path transform="translate(4.5 2.5) scale(1.05)" d="M0 0V9L2.2 7L4 10.5L5.5 9.8L3.8 6.5H6.5z" fill="#fff" stroke="#ddd" stroke-width="0.8"/></svg>
<svg style="left:227px;top:172px;" width="17" height="17" viewBox="0 0 17 17"><path d="M1 1L9 9M9 1L1 9" stroke="#e03030" stroke-width="1.5"/><path transform="translate(10 7) scale(0.8)" d="M0 0V9L2.2 7L4 10.5L5.5 9.8L3.8 6.5H6.5z" fill="#fff" stroke="#333" stroke-width="0.8"/></svg>
<svg style="left:250px;top:173px;" width="15" height="15" viewBox="0 0 15 15"><circle cx="7.5" cy="7.5" r="7" fill="#a8a8a8" stroke="#8a8a8a" stroke-width="0.6"/><text x="4.3" y="11.5" font-size="10" font-weight="bold" fill="#111" font-family="Liberation Sans">?</text></svg>
<div class="a" style="left:4px;top:193px;width:268px;height:21px;background:#e9e9e9;"></div>
<div class="a" style="left:4px;top:213px;width:268px;height:1px;background:#f6f6f6;"></div>
<div class="a" style="left:122px;top:193px;width:1px;height:21px;background:#f6f6f6;"></div>
<div class="t" style="left:10.00px;top:198.89px;font-size:11px;color:#222;transform:scaleX(0.8882);">Объекты</div>
<div class="t" style="left:126.00px;top:198.89px;font-size:11px;color:#9a9a9a;transform:scaleX(0.9038);">Нет набора</div>
<div class="a" style="left:4px;top:214px;width:268px;height:19px;background:#d3d3d3;"></div>
<div class="t" style="left:9.50px;top:217.79px;font-size:11px;color:#111;font-weight:bold;transform:scaleX(1.0396);">Общие</div>
<div class="a" style="left:255px;top:223px;width:7px;height:1.6px;background:#222;"></div>
<div class="a" style="left:4px;top:233px;width:268px;height:19px;background:#e9e9e9;"></div>
<div class="a" style="left:4px;top:251px;width:268px;height:1px;background:#f6f6f6;"></div>
<div class="a" style="left:122px;top:233px;width:1px;height:19px;background:#f6f6f6;"></div>
<div class="t" style="left:10.00px;top:237.09px;font-size:11px;color:#222;transform:scaleX(0.8598);">Слой</div>
<svg style="left:127px;top:236px;" width="10" height="14" viewBox="0 0 10 14"><circle cx="5" cy="5" r="4.5" fill="#ffd000"/><rect x="3" y="9" width="4" height="4" fill="#b8a060"/></svg>
<svg style="left:145px;top:237px;" width="9" height="9" viewBox="0 0 9 9"><circle cx="4.5" cy="4.5" r="4" fill="#e6e6e6" stroke="#bbb"/></svg>
<svg style="left:161px;top:235px;" width="12" height="13" viewBox="0 0 12 13"><rect x="1" y="6" width="10" height="6.5" fill="none" stroke="#aaa"/><path d="M3 6V3Q3 1 6 1Q8.5 1 8.5 3" fill="none" stroke="#aaa"/></svg>
<svg style="left:180px;top:236px;" width="13" height="12" viewBox="0 0 13 12"><path d="M2 5V1.5H10V5M0.5 5.5H12.5V11.5H0.5z" fill="#f0f0f0" stroke="#aaa"/></svg>
<svg style="left:197px;top:238px;" width="9" height="9" viewBox="0 0 9 9"><rect x="0.5" y="0.5" width="8" height="8" fill="#fff" stroke="#111"/><path d="M0.5 0.5H8.5V8.5z" fill="#111"/></svg>
<div class="t" style="left:208.00px;top:237.09px;font-size:11px;color:#111;transform:scaleX(0.9143);">2D.КД Вын...</div>
<div class="a" style="left:4px;top:252px;width:268px;height:20px;background:#e9e9e9;"></div>
<div class="a" style="left:4px;top:271px;width:268px;height:1px;background:#f6f6f6;"></div>
<div class="a" style="left:122px;top:252px;width:1px;height:20px;background:#f6f6f6;"></div>
<div class="t" style="left:10.00px;top:255.99px;font-size:11px;color:#222;transform:scaleX(0.8923);">Цвет</div>
<svg style="left:127px;top:256px;" width="11" height="11" viewBox="0 0 11 11"><rect x="0.5" y="0.5" width="10" height="10" fill="#fff" stroke="#111"/><path d="M0.5 0.5H10.5V10.5z" fill="#111"/></svg>
<div class="t" style="left:141.00px;top:255.99px;font-size:11px;color:#111;transform:scaleX(0.8966);">По слою</div>
<div class="a" style="left:4px;top:272px;width:268px;height:20px;background:#e9e9e9;"></div>
<div class="a" style="left:4px;top:291px;width:268px;height:1px;background:#f6f6f6;"></div>
<div class="a" style="left:122px;top:272px;width:1px;height:20px;background:#f6f6f6;"></div>
<div class="t" style="left:10.00px;top:276.19px;font-size:11px;color:#222;transform:scaleX(0.9268);">Тип линий</div>
<div class="a" style="left:127px;top:282px;width:56px;height:1.6px;background:#444;"></div>
<div class="t" style="left:187.00px;top:276.19px;font-size:11px;color:#111;transform:scaleX(0.8736);">По слою</div>
<div class="a" style="left:4px;top:292px;width:268px;height:20px;background:#e9e9e9;"></div>
<div class="a" style="left:4px;top:311px;width:268px;height:1px;background:#f6f6f6;"></div>
<div class="a" style="left:122px;top:292px;width:1px;height:20px;background:#f6f6f6;"></div>
<div class="t" style="left:10.00px;top:296.39px;font-size:11px;color:#222;transform:scaleX(0.9128);">Масштаб типа линий</div>
<div class="t" style="left:126.00px;top:296.39px;font-size:11px;color:#111;">1</div>
<div class="a" style="left:4px;top:312px;width:268px;height:20px;background:#e9e9e9;"></div>
<div class="a" style="left:4px;top:331px;width:268px;height:1px;background:#f6f6f6;"></div>
<div class="a" style="left:122px;top:312px;width:1px;height:20px;background:#f6f6f6;"></div>
<div class="t" style="left:10.00px;top:316.59px;font-size:11px;color:#222;transform:scaleX(0.8878);">Вес линий</div>
<div class="a" style="left:127px;top:322px;width:56px;height:1.6px;background:#444;"></div>
<div class="t" style="left:187.00px;top:316.59px;font-size:11px;color:#111;transform:scaleX(0.8736);">По слою</div>
<div class="a" style="left:4px;top:332px;width:268px;height:20px;background:#e9e9e9;"></div>
<div class="a" style="left:4px;top:351px;width:268px;height:1px;background:#f6f6f6;"></div>
<div class="a" style="left:122px;top:332px;width:1px;height:20px;background:#f6f6f6;"></div>
<div class="t" style="left:10.00px;top:336.79px;font-size:11px;color:#222;transform:scaleX(0.9123);">Прозрачность</div>
<div class="t" style="left:126.00px;top:336.79px;font-size:11px;color:#111;transform:scaleX(0.8966);">По слою</div>
<div class="a" style="left:4px;top:352px;width:268px;height:20px;background:#e9e9e9;"></div>
<div class="a" style="left:4px;top:371px;width:268px;height:1px;background:#f6f6f6;"></div>
<div class="a" style="left:122px;top:352px;width:1px;height:20px;background:#f6f6f6;"></div>
<div class="t" style="left:10.00px;top:356.39px;font-size:11px;color:#222;transform:scaleX(0.9441);">Толщина</div>
<div class="t" style="left:126.00px;top:356.39px;font-size:11px;color:#111;">0</div>
<div class="a" style="left:4px;top:372px;width:268px;height:19px;background:#d3d3d3;"></div>
<div class="t" style="left:9.50px;top:376.09px;font-size:11px;color:#111;font-weight:bold;transform:scaleX(1.0302);">3D-визуализация</div>
<div class="a" style="left:255px;top:381px;width:7px;height:1.6px;background:#222;"></div>
<div class="a" style="left:4px;top:391px;width:268px;height:19px;background:#e9e9e9;"></div>
<div class="a" style="left:4px;top:409px;width:268px;height:1px;background:#f6f6f6;"></div>
<div class="a" style="left:122px;top:391px;width:1px;height:19px;background:#f6f6f6;"></div>
<div class="t" style="left:10.00px;top:395.49px;font-size:11px;color:#222;transform:scaleX(0.9020);">Материал</div>
<div class="t" style="left:126.00px;top:395.49px;font-size:11px;color:#111;transform:scaleX(0.8966);">По слою</div>
<div class="a" style="left:4px;top:410px;width:268px;height:20px;background:#d3d3d3;"></div>
<div class="t" style="left:9.50px;top:414.09px;font-size:11px;color:#111;font-weight:bold;transform:scaleX(0.9396);">Стили</div>
<div class="a" style="left:255px;top:419px;width:7px;height:1.6px;background:#222;"></div>
<div class="a" style="left:4px;top:430px;width:268px;height:19px;background:#e9e9e9;"></div>
<div class="a" style="left:4px;top:448px;width:268px;height:1px;background:#f6f6f6;"></div>
<div class="a" style="left:122px;top:430px;width:1px;height:19px;background:#f6f6f6;"></div>
<div class="t" style="left:10.00px;top:433.59px;font-size:11px;color:#222;transform:scaleX(0.9126);">Стиль текста</div>
<div class="t" style="left:126.00px;top:433.59px;font-size:11px;color:#111;transform:scaleX(0.9187);">ГОСТ 2.304</div>
<div class="a" style="left:4px;top:449px;width:268px;height:20px;background:#e9e9e9;"></div>
<div class="a" style="left:4px;top:468px;width:268px;height:1px;background:#f6f6f6;"></div>
<div class="a" style="left:122px;top:449px;width:1px;height:20px;background:#f6f6f6;"></div>
<div class="t" style="left:10.00px;top:453.59px;font-size:11px;color:#222;transform:scaleX(0.9017);">Размерный стиль</div>
<div class="t" style="left:126.00px;top:453.59px;font-size:11px;color:#111;transform:scaleX(0.8480);">СПДС</div>
<div class="a" style="left:4px;top:469px;width:268px;height:19px;background:#d3d3d3;"></div>
<div class="t" style="left:9.50px;top:472.59px;font-size:11px;color:#111;font-weight:bold;transform:scaleX(0.9832);">Стиль печати</div>
<div class="a" style="left:255px;top:478px;width:7px;height:1.6px;background:#222;"></div>
<div class="a" style="left:4px;top:488px;width:268px;height:20px;background:#e9e9e9;"></div>
<div class="a" style="left:4px;top:507px;width:268px;height:1px;background:#f6f6f6;"></div>
<div class="a" style="left:122px;top:488px;width:1px;height:20px;background:#f6f6f6;"></div>
<div class="t" style="left:10.00px;top:492.19px;font-size:11px;color:#222;transform:scaleX(0.9296);">Стиль печати</div>
<div class="t" style="left:126.00px;top:492.19px;font-size:11px;color:#9a9a9a;transform:scaleX(0.9118);">По цвету</div>
<div class="a" style="left:4px;top:508px;width:268px;height:20px;background:#e9e9e9;"></div>
<div class="a" style="left:4px;top:527px;width:268px;height:1px;background:#f6f6f6;"></div>
<div class="a" style="left:122px;top:508px;width:1px;height:20px;background:#f6f6f6;"></div>
<div class="t" style="left:10.00px;top:512.29px;font-size:11px;color:#222;transform:scaleX(0.9319);">Таблица стилей печати</div>
<div class="t" style="left:126.00px;top:512.29px;font-size:11px;color:#111;transform:scaleX(0.8807);">Нет</div>
<div class="a" style="left:4px;top:528px;width:268px;height:20px;background:#e9e9e9;"></div>
<div class="a" style="left:4px;top:547px;width:268px;height:1px;background:#f6f6f6;"></div>
<div class="a" style="left:122px;top:528px;width:1px;height:20px;background:#f6f6f6;"></div>
<div class="t" style="left:10.00px;top:532.09px;font-size:11px;color:#222;transform:scaleX(0.9221);">Пространство таблиц...</div>
<div class="t" style="left:126.00px;top:532.09px;font-size:11px;color:#9a9a9a;transform:scaleX(0.8991);">Модель</div>
<div class="a" style="left:4px;top:548px;width:268px;height:19px;background:#e9e9e9;"></div>
<div class="a" style="left:4px;top:566px;width:268px;height:1px;background:#f6f6f6;"></div>
<div class="a" style="left:122px;top:548px;width:1px;height:19px;background:#f6f6f6;"></div>
<div class="t" style="left:10.00px;top:552.19px;font-size:11px;color:#222;transform:scaleX(0.9384);">Тип стилей печати</div>
<div class="t" style="left:126.00px;top:552.19px;font-size:11px;color:#9a9a9a;transform:scaleX(0.8966);">Недоступно</div>
<div class="a" style="left:4px;top:567px;width:268px;height:20px;background:#d3d3d3;"></div>
<div class="t" style="left:9.50px;top:571.09px;font-size:11px;color:#111;font-weight:bold;transform:scaleX(1.0233);">Разное</div>
<div class="a" style="left:255px;top:576px;width:7px;height:1.6px;background:#222;"></div>
<div class="a" style="left:4px;top:587px;width:268px;height:19px;background:#e9e9e9;"></div>
<div class="a" style="left:4px;top:605px;width:268px;height:1px;background:#f6f6f6;"></div>
<div class="a" style="left:122px;top:587px;width:1px;height:19px;background:#f6f6f6;"></div>
<div class="t" style="left:10.00px;top:590.59px;font-size:11px;color:#222;transform:scaleX(0.8838);">Знак ПСК Вкл</div>
<div class="t" style="left:126.00px;top:590.59px;font-size:11px;color:#111;transform:scaleX(0.8985);">Да</div>
<div class="a" style="left:4px;top:606px;width:268px;height:20px;background:#e9e9e9;"></div>
<div class="a" style="left:4px;top:625px;width:268px;height:1px;background:#f6f6f6;"></div>
<div class="a" style="left:122px;top:606px;width:1px;height:20px;background:#f6f6f6;"></div>
<div class="t" style="left:10.00px;top:610.59px;font-size:11px;color:#222;transform:scaleX(0.9274);">Знак ПСК в начале к...</div>
<div class="t" style="left:126.00px;top:610.59px;font-size:11px;color:#111;transform:scaleX(0.8985);">Да</div>
<div class="a" style="left:4px;top:626px;width:268px;height:20px;background:#e9e9e9;"></div>
<div class="a" style="left:4px;top:645px;width:268px;height:1px;background:#f6f6f6;"></div>
<div class="a" style="left:122px;top:626px;width:1px;height:20px;background:#f6f6f6;"></div>
<div class="t" style="left:10.00px;top:630.79px;font-size:11px;color:#222;transform:scaleX(0.9012);">ПСК в каждом ВЭкране</div>
<div class="t" style="left:126.00px;top:630.79px;font-size:11px;color:#111;transform:scaleX(0.8985);">Да</div>
<div class="a" style="left:4px;top:646px;width:268px;height:20px;background:#e9e9e9;"></div>
<div class="a" style="left:4px;top:665px;width:268px;height:1px;background:#f6f6f6;"></div>
<div class="a" style="left:122px;top:646px;width:1px;height:20px;background:#f6f6f6;"></div>
<div class="t" style="left:10.00px;top:650.59px;font-size:11px;color:#222;transform:scaleX(0.8556);">Имя ПСК</div>
<div class="t" style="left:126.00px;top:650.59px;font-size:11px;color:#111;transform:scaleX(0.9036);">Мировая СК</div>
<div class="a" style="left:4px;top:666px;width:268px;height:20px;background:#e9e9e9;"></div>
<div class="a" style="left:4px;top:685px;width:268px;height:1px;background:#f6f6f6;"></div>
<div class="a" style="left:122px;top:666px;width:1px;height:20px;background:#f6f6f6;"></div>
<div class="t" style="left:10.00px;top:670.69px;font-size:11px;color:#222;transform:scaleX(0.9037);">Визуальный стиль</div>
<div class="t" style="left:126.00px;top:670.69px;font-size:11px;color:#111;transform:scaleX(0.9167);">Быстрый с показом рёбер</div>
<div class="a" style="left:2px;top:933px;width:39px;height:21px;background:#d5d5d5;"></div>
<div class="t" style="left:9.00px;top:938.64px;font-size:12px;color:#2a2a2a;transform:scaleX(0.8390);">Альб...</div>
<div class="a" style="left:43px;top:933px;width:38px;height:21px;background:#d5d5d5;"></div>
<div class="t" style="left:49.00px;top:938.64px;font-size:12px;color:#2a2a2a;transform:scaleX(0.8705);">Объ...</div>
<div class="a" style="left:83px;top:933px;width:38px;height:21px;background:#d5d5d5;"></div>
<div class="t" style="left:89.00px;top:938.64px;font-size:12px;color:#2a2a2a;transform:scaleX(0.8673);">Мен...</div>
<div class="a" style="left:123px;top:933px;width:38.5px;height:21px;background:#d5d5d5;"></div>
<div class="t" style="left:129.00px;top:938.64px;font-size:12px;color:#2a2a2a;transform:scaleX(0.8013);">База ...</div>
<div class="t" style="left:169.00px;top:938.64px;font-size:12px;color:#2a2a2a;transform:scaleX(0.8356);">Свой...</div>
<div class="a" style="left:203.5px;top:933px;width:24.0px;height:21px;background:#d5d5d5;"></div>
<div class="t" style="left:209.00px;top:938.64px;font-size:12px;color:#2a2a2a;transform:scaleX(0.7754);">IFC</div>
<div class="a" style="left:229.5px;top:933px;width:38.5px;height:21px;background:#d5d5d5;"></div>
<div class="t" style="left:235.00px;top:938.64px;font-size:12px;color:#2a2a2a;transform:scaleX(0.8249);">Реда...</div>
<div class="a" style="left:0px;top:954px;width:1610px;height:7.5px;background:#d3d3d3;"></div>
<div class="a" style="left:277px;top:143px;width:3px;height:814px;background:#d0d0d0;"></div>
<div class="a" style="left:280px;top:142px;width:1327px;height:815px;border:1px solid #a4a4a4;background:#e2e2e2"></div>
<div class="a" style="left:281px;top:144px;width:1325px;height:23px;background:#cdcdcd;"></div>
<div class="a" style="left:283px;top:145px;width:84px;height:21px;background:#d2d2d2;"></div>
<div class="a" style="left:367px;top:145px;width:948px;height:21px;background:#ebebeb;"></div>
<div class="a" style="left:281px;top:166px;width:1325px;height:1px;background:#a8a8a8;"></div>
<div class="t" style="left:304.50px;top:149.34px;font-size:12px;color:#2a2a2a;transform:scaleX(0.9003);">Без имени1*</div>
<div class="t" style="left:432.00px;top:149.34px;font-size:12px;color:#2a2a2a;transform:scaleX(0.9113);">01.Офисный центр.001.Офисное здание. Ситуация.Мансарда .3D.Стадия Р.КД. Конструкции деревянные.Каркасные конструкции кровли.Каркас крыши..dwg*</div>
<svg style="left:1298px;top:150px;" width="10" height="10" viewBox="0 0 10 10"><path d="M1 1L9 9M9 1L1 9" stroke="#777" stroke-width="1.2"/></svg>
<svg style="left:1593.0px;top:154px;" width="8" height="5" viewBox="0 0 8 5"><path d="M0 0H8L4.0 4z" fill="#666"/></svg>
<div class="a" style="left:281px;top:934px;width:1325px;height:1.5px;background:#e6e6e6;"></div>
<div class="a" style="left:281px;top:935.5px;width:1325px;height:20px;background:#d2d2d2;"></div>
<div class="a" style="left:317.5px;top:935.5px;width:52.5px;height:17px;background:#e8e8e8;"></div>
<div class="a" style="left:370px;top:935.5px;width:21.5px;height:17px;background:#d8d8d8;"></div>
<div class="a" style="left:393px;top:935.5px;width:21.5px;height:17px;background:#d8d8d8;"></div>
<div class="a" style="left:416px;top:935.5px;width:21.5px;height:17px;background:#d8d8d8;"></div>
<div class="a" style="left:439.5px;top:935.5px;width:22.0px;height:17px;background:#d8d8d8;"></div>
<svg style="left:285px;top:938px;" width="14" height="13" viewBox="0 0 14 13"><rect x="0.5" y="0.5" width="13" height="12" rx="2" fill="#f4f4f4" stroke="#aaa"/><rect x="1" y="3.5" width="12" height="2" fill="#3a8ee0"/><path d="M1 8.5H13" stroke="#ccc"/></svg>
<div class="t" style="left:324.40px;top:937.74px;font-size:12px;color:#2a2a2a;transform:scaleX(0.9193);">Модель</div>
<div class="t" style="left:375.00px;top:937.74px;font-size:12px;color:#2a2a2a;transform:scaleX(0.8851);">A1</div>
<div class="t" style="left:398.00px;top:937.74px;font-size:12px;color:#2a2a2a;transform:scaleX(0.9532);">A2</div>
<div class="t" style="left:421.00px;top:937.74px;font-size:12px;color:#2a2a2a;transform:scaleX(0.9532);">A3</div>
<div class="t" style="left:444.50px;top:937.74px;font-size:12px;color:#2a2a2a;transform:scaleX(0.9191);">A4</div>
<div class="a" style="left:0px;top:961.5px;width:1606px;height:55px;background:#e8e8e8;"></div>
<div class="a" style="left:1px;top:960px;width:1px;height:57px;background:#9a9a9a;"></div>
<svg style="left:5px;top:966px;" width="8" height="8" viewBox="0 0 8 8"><path d="M0.5 0.5L7.5 7.5M7.5 0.5L0.5 7.5" stroke="#777" stroke-width="1.2"/></svg>
<svg style="left:5px;top:982px;" width="8" height="11" viewBox="0 0 8 11"><path d="M1.5 1H6.5M2.5 1V6H5.5V1M0.5 6.5H7.5M4 6.5V10.5" fill="none" stroke="#888" stroke-width="1.1"/></svg>
<div class="t" style="left:3px;top:1015px;font-size:12px;color:#333;transform:rotate(-90deg);transform-origin:0 0">Ком</div>
<div class="a" style="left:23px;top:961.7px;width:1583px;height:38px;overflow:hidden">
<div class="t" style="left:2.00px;top:-4.08px;font-size:10.67px;color:#2a2a2a;font-family:'Liberation Mono';">Секрамка лассо. Нажмите клавишу Пробел для циклического перебора параметров</div>
<div class="t" style="left:2.00px;top:10.92px;font-size:10.67px;color:#2a2a2a;font-family:'Liberation Mono';transform:scaleX(0.9949);">Укажите противоположный угол:</div>
<div class="t" style="left:2.00px;top:25.12px;font-size:10.67px;color:#2a2a2a;font-family:'Liberation Mono';">ОБЪЕКТИЗОЛ - Изолировать объекты</div>
</div>
<div class="a" style="left:23px;top:999.5px;width:1583px;height:1.2px;background:#9a9a9a;"></div>
<div class="a" style="left:23px;top:1000px;width:1px;height:16px;background:#9a9a9a;"></div>
<div class="a" style="left:24px;top:1001px;width:1582px;height:15px;background:#ececec;"></div>
<div class="t" style="left:24.50px;top:1003.52px;font-size:10.67px;color:#2a2a2a;font-family:'Liberation Mono';transform:scaleX(0.9576);">Команда:</div>
<div class="a" style="left:0px;top:1017px;width:1920px;height:23px;background:#d6d6d6;"></div>
<div class="t" style="left:3.50px;top:1021.14px;font-size:12px;color:#2a2a2a;transform:scaleX(0.9314);">28409.6545,13997.1670,0.0000</div>
<div class="a" style="left:170.8px;top:1017px;width:37.19999999999999px;height:21px;background:#ececec;"></div>
<div class="t" style="left:178.00px;top:1021.04px;font-size:12px;color:#222;transform:scaleX(0.9412);">ШАГ</div>
<div class="a" style="left:209.5px;top:1017px;width:45.5px;height:21px;background:#ececec;"></div>
<div class="t" style="left:216.00px;top:1021.04px;font-size:12px;color:#222;transform:scaleX(0.8205);">СЕТКА</div>
<div class="a" style="left:255.6px;top:1017px;width:75.4px;height:21px;background:#d9d9d9;border:1px solid #c2c2c2"></div>
<div class="t" style="left:262.50px;top:1021.04px;font-size:12px;color:#222;transform:scaleX(0.8729);">оПРИВЯЗКА</div>
<div class="a" style="left:332px;top:1017px;width:92px;height:21px;background:#d9d9d9;border:1px solid #c2c2c2"></div>
<div class="t" style="left:339.00px;top:1021.04px;font-size:12px;color:#222;transform:scaleX(0.8752);">3D оПРИВЯЗКА</div>
<div class="a" style="left:425px;top:1017px;width:81px;height:21px;background:#ececec;"></div>
<div class="t" style="left:432.00px;top:1021.04px;font-size:12px;color:#222;transform:scaleX(0.8593);">ОТС-ОБЪЕКТ</div>
<div class="a" style="left:507px;top:1017px;width:77px;height:21px;background:#ececec;"></div>
<div class="t" style="left:513.00px;top:1021.04px;font-size:12px;color:#222;transform:scaleX(0.8926);">ОТС-ПОЛЯР</div>
<div class="a" style="left:585px;top:1017px;width:42px;height:21px;background:#ececec;"></div>
<div class="t" style="left:591.00px;top:1021.04px;font-size:12px;color:#222;transform:scaleX(0.9108);">ОРТО</div>
<div class="a" style="left:628px;top:1017px;width:72px;height:21px;background:#ececec;"></div>
<div class="t" style="left:635.00px;top:1021.04px;font-size:12px;color:#222;transform:scaleX(0.9320);">ДИН-ВВОД</div>
<div class="a" style="left:701px;top:1017px;width:37px;height:21px;background:#ececec;"></div>
<div class="t" style="left:708.00px;top:1021.04px;font-size:12px;color:#222;transform:scaleX(0.9171);">ИЗО</div>
<div class="a" style="left:741px;top:1017px;width:34px;height:21px;background:#ececec;"></div>
<div class="t" style="left:749.00px;top:1021.04px;font-size:12px;color:#222;transform:scaleX(0.7696);">ВЕС</div>
<div class="a" style="left:776px;top:1017px;width:79px;height:21px;background:#d9d9d9;border:1px solid #c2c2c2"></div>
<div class="t" style="left:782.00px;top:1021.04px;font-size:12px;color:#222;transform:scaleX(0.8945);">ШТРИХОВКА</div>
<div class="a" style="left:739.5px;top:1018px;width:1px;height:19px;background:#a0a0a0;"></div>
<div class="a" style="left:1088.8px;top:1018px;width:48.5px;height:19px;background:#ececec;"></div>
<div class="t" style="left:1090.00px;top:1021.34px;font-size:12px;color:#222;transform:scaleX(0.9028);">МОДЕЛЬ</div>
<div class="a" style="left:1138px;top:1018px;width:20px;height:19px;background:#ececec;"></div>
<svg style="left:1141px;top:1021px;" width="16" height="14" viewBox="0 0 16 14"><rect x="1" y="6" width="7" height="7" fill="#aaa" stroke="#555" stroke-width="0.8"/><rect x="7" y="2" width="7" height="7" fill="#ccc" stroke="#555" stroke-width="0.8"/><path d="M3 6V4Q3 2 5 2M9 2V1Q9 0 11 0" fill="none" stroke="#555" stroke-width="0.8"/></svg>
<div class="a" style="left:1161px;top:1018px;width:137px;height:19px;background:#ececec;"></div>
<svg style="left:1163px;top:1021px;" width="10" height="13" viewBox="0 0 10 13"><path d="M0.5 0.5H9.5V7.5L5 12.5H0.5z" fill="#f4f4f4" stroke="#888"/><path d="M4 9H9L6.5 12z" fill="#222"/></svg>
<svg style="left:1286.5px;top:1026px;" width="9" height="5" viewBox="0 0 9 5"><path d="M0 0H9L4.5 4z" fill="#333"/></svg>
<div class="a" style="left:1299px;top:1018px;width:19px;height:19px;background:#ececec;"></div>
<svg style="left:1300px;top:1020px;" width="17" height="15" viewBox="0 0 17 15"><rect x="0.5" y="0.5" width="15" height="13" fill="none" stroke="#1a9ad6" stroke-dasharray="1.5 1"/><rect x="3" y="2.5" width="5" height="8" rx="2" fill="#3a8ee0"/><path d="M8 5V14L10 12L11.5 15L13 14.3L11.6 11.5H14z" fill="#fff" stroke="#333" stroke-width="0.8"/></svg>
<div class="a" style="left:1321px;top:1018px;width:22px;height:19px;background:#ececec;"></div>
<svg style="left:1325px;top:1020px;" width="12" height="16" viewBox="0 0 12 16"><circle cx="6" cy="6" r="5.5" fill="#fff7a0" stroke="#d8c060" stroke-width="0.8"/><rect x="3.5" y="11" width="5" height="4" fill="#b0a070"/></svg>
<div class="a" style="left:1344px;top:1018px;width:26px;height:19px;background:#d2d2d2;border:1px solid #bcbcbc"></div>
<svg style="left:1349px;top:1021px;" width="14" height="14" viewBox="0 0 14 14"><circle cx="7" cy="7" r="6" fill="none" stroke="#e02020" stroke-width="1.5"/><path d="M3 11L11 3" stroke="#e02020" stroke-width="1.5"/><path d="M6 4V10" stroke="#999" stroke-width="1"/></svg>
<div class="a" style="left:1370px;top:1018px;width:26px;height:19px;background:#d2d2d2;border:1px solid #bcbcbc"></div>
<svg style="left:1375px;top:1020px;" width="17" height="16" viewBox="0 0 17 16"><path d="M2 1V14H16" fill="none" stroke="#333" stroke-width="1.3"/><path d="M2 1L0.5 3.5M2 1L3.5 3.5" stroke="#333"/><path d="M10 1L7 8H10L8 14" fill="none" stroke="#333" stroke-width="1.4"/></svg>
<div class="a" style="left:1397px;top:1018px;width:69px;height:19px;background:#ececec;"></div>
<div class="t" style="left:1416.00px;top:1019.54px;font-size:12px;color:#222;transform:scaleX(0.9892);">M1:10</div>
<div class="a" style="left:1468px;top:1018px;width:30px;height:19px;background:#ececec;"></div>
<svg style="left:1477px;top:1020px;" width="16" height="16" viewBox="0 0 16 16"><path d="M3 9V4Q3 3 4 3Q5 3 5 4V8M5 7V2Q5 1 6 1Q7 1 7 2V7M7 7V2.5Q7 1.5 8 1.5Q9 1.5 9 2.5V7M9 7V4Q9 3 10 3Q11 3 11 4V10Q11 15 7 15Q4 15 2 11L1 9Q1 8 2 8Q3 8 3 9" fill="#fff" stroke="#555" stroke-width="0.8"/></svg>
<div class="a" style="left:1499px;top:1018px;width:25px;height:19px;background:#ececec;"></div>
<svg style="left:1506px;top:1020px;" width="16" height="16" viewBox="0 0 16 16"><circle cx="6" cy="6" r="4.5" fill="none" stroke="#2a7ac0" stroke-width="1.5"/><path d="M9.5 9.5L14 14" stroke="#2a7ac0" stroke-width="2"/></svg>
<div class="a" style="left:1525px;top:1018px;width:25px;height:19px;background:#ececec;"></div>
<svg style="left:1526px;top:1019px;" width="18" height="17" viewBox="0 0 18 17"><rect x="0" y="0" width="17.5" height="17" fill="#8cd2f5"/><circle cx="8" cy="8" r="4" fill="none" stroke="#2a7ac0" stroke-width="1.4"/><path d="M11 11L14.5 14.5" stroke="#2a7ac0" stroke-width="1.8"/></svg>
<div class="a" style="left:1551px;top:1018px;width:25px;height:19px;background:#ececec;"></div>
<svg style="left:1554px;top:1020px;" width="16" height="16" viewBox="0 0 16 16"><rect x="0.5" y="0.5" width="8" height="8" fill="none" stroke="#2a7ac0"/><circle cx="8.5" cy="9" r="4" fill="#fff" stroke="#555" stroke-width="1.2"/><path d="M11.5 12L15 15.5" stroke="#555" stroke-width="1.6"/></svg>
<div class="a" style="left:1577px;top:1018px;width:25px;height:19px;background:#ececec;"></div>
<svg style="left:1580px;top:1020px;" width="16" height="16" viewBox="0 0 16 16"><ellipse cx="8" cy="8" rx="7" ry="3" fill="none" stroke="#888" stroke-width="1"/><path d="M8 1V15" stroke="#888" stroke-width="1.2"/><circle cx="8" cy="8" r="2" fill="#fff" stroke="#888"/></svg>
<div class="a" style="left:1603px;top:1018px;width:22px;height:19px;background:#ececec;"></div>
<svg style="left:1606px;top:1020px;" width="16" height="16" viewBox="0 0 16 16"><path d="M13 7A5.5 5.5 0 0 0 3 5M3 9A5.5 5.5 0 0 0 13 11" fill="none" stroke="#2bb04a" stroke-width="1.8"/><path d="M1 3L3.5 6.5L6 3.5z M15 12.5L12.5 9.5L10 12.5z" fill="#2bb04a"/></svg>
<div class="a" style="left:1626px;top:1018px;width:20px;height:19px;background:#ececec;"></div>
<svg style="left:1628px;top:1020px;" width="16" height="16" viewBox="0 0 16 16"><rect x="0.5" y="1.5" width="10" height="11" fill="#f4f4f4" stroke="#888"/><rect x="5.5" y="6.5" width="9" height="8" fill="#e8e8e8" stroke="#888"/><path d="M8 10H12" stroke="#888"/></svg>
<div class="a" style="left:1647px;top:1018px;width:79px;height:19px;background:#ececec;"></div>
<svg style="left:1651px;top:1022px;" width="11" height="11" viewBox="0 0 11 11"><path d="M0.5 3.5L3.5 0.5H10.5V7.5L7.5 10.5H0.5z" fill="#f5b000" stroke="#333" stroke-width="0.8"/><path d="M0.5 3.5H7.5V10.5M7.5 3.5L10.5 0.5" fill="none" stroke="#333" stroke-width="0.8"/></svg>
<div class="t" style="left:1672.00px;top:1021.34px;font-size:12px;color:#222;transform:scaleX(0.9004);">3D-режим</div>
<div class="a" style="left:1727px;top:1018px;width:80px;height:19px;background:#ececec;"></div>
<div class="a" style="left:1732px;top:1026px;width:4px;height:4px;background:#222;"></div>
<div class="t" style="left:1740.00px;top:1021.34px;font-size:12px;color:#222;transform:scaleX(0.9446);">Показ узлов</div>
<div class="a" style="left:1808px;top:1018px;width:31px;height:19px;background:#ececec;"></div>
<div class="t" style="left:1814.00px;top:1021.34px;font-size:12px;color:#222;transform:scaleX(0.8911);">LOD</div>
<div class="a" style="left:1840px;top:1018px;width:55px;height:19px;background:#ececec;"></div>
<svg style="left:1841px;top:1020px;" width="14" height="16" viewBox="0 0 14 16"><path d="M1 15V1H13V7H7V15z" fill="none" stroke="#222" stroke-width="1.3"/></svg>
<div class="t" style="left:1854.00px;top:1021.34px;font-size:12px;color:#222;transform:scaleX(0.9878);">Контур</div>
<div class="a" style="left:1897px;top:1018px;width:23px;height:19px;background:#ececec;"></div>
<svg style="left:1900px;top:1020px;" width="18" height="16" viewBox="0 0 18 16"><rect x="1" y="1" width="16" height="14" fill="#1a9ad6" stroke="#0b4f72"/><rect x="3.5" y="3.5" width="11" height="9" fill="#1a9ad6" stroke="#8fd3f5"/></svg>
<div class="a" style="left:281px;top:167px;width:1324px;height:767px;overflow:hidden;background:#fff"><svg width="1920" height="1040" style="left:-281px;top:-167px" viewBox="0 0 1920 1040"><g><polygon fill="#7b6639" points="281.0,552.3 731.2,434.6 749.2,408.9 923.3,363.7 963.0,373.1 992.5,365.9 1020.7,387.5 1098.6,406.3 1272.1,537.3 1272.1,576.3 1604.0,826.4 1604.0,934.0 1412.3,934.0 1123.9,716.1 751.1,623.9 281.0,746.5"/><polygon fill="#816c3c" points="992.5,365.9 1604.0,826.4 1604.0,865.6 973.8,391.8"/><polygon fill="#816c3c" points="955.0,416.6 1604.0,904.8 1604.0,934.0 1588.8,934.0 937.0,442.3"/><polygon fill="#816c3c" points="1061.0,456.8 1234.8,589.3 1217.5,613.5 1043.0,482.0"/><polygon fill="#988048" points="985.3,438.0 1061.0,456.8 1043.0,482.0"/><polygon fill="#403620" points="1217.5,613.5 1234.8,589.3 1234.8,625.6"/><polygon fill="#988048" points="749.2,408.9 923.3,363.7 963.0,373.1 731.2,434.6"/><polygon fill="#988048" points="1020.7,387.5 1098.6,406.3 1079.8,431.5"/><polygon fill="#816c3c" points="1098.6,406.3 1272.1,537.3 1253.9,562.4 1079.8,431.5"/><polygon fill="#403620" points="1253.9,562.4 1272.1,537.3 1272.1,576.3"/><polygon fill="#988048" points="281.0,552.3 992.5,365.9 973.8,391.8 281.0,573.5"/><polygon fill="#988048" points="711.7,460.6 886.3,414.4 926.2,423.6 693.7,485.1"/><polygon fill="#988048" points="281.0,593.0 955.0,416.6 937.0,442.3 281.0,615.0"/><polygon fill="#7b6639" points="657.3,535.9 831.5,490.2 1006.2,533.8 1180.4,664.2 1180.4,729.8 657.3,601.5"/><polygon fill="#988048" points="657.3,535.9 673.0,512.2 849.5,464.9 1023.8,507.5 1006.2,533.8 831.5,490.2"/><polygon fill="#816c3c" points="1006.2,533.8 1023.8,507.5 1198.4,641.1 1180.4,664.2"/><polygon fill="#7b6639" points="849.5,464.9 937.0,442.3 937.0,486.3"/><polygon fill="#7b6639" points="937.0,442.3 1023.8,507.5 937.0,486.3"/><polygon fill="#403620" points="1180.4,664.2 1198.4,641.1 1198.4,704.6 1180.4,729.8"/></g><path d="M281.0 552.3L992.5 365.9 M281.0 573.5L973.8 391.8 M281.0 593.0L955.0 416.6 M281.0 615.0L937.0 442.3 M281.0 746.5L751.1 623.9 M751.1 623.9L657.3 601.5 M731.2 434.6L749.2 408.9 M749.2 408.9L923.3 363.7 M923.3 363.7L905.2 388.2 M923.3 363.7L963.0 373.1 M1020.7 387.5L1098.6 406.3 M1098.6 406.3L1079.8 431.5 M1098.6 406.3L1272.1 537.3 M1079.8 431.5L1253.9 562.4 M1253.9 562.4L1272.1 537.3 M1272.1 537.3L1272.1 576.3 M992.5 365.9L973.8 391.8 M973.8 391.8L973.8 429.3 M992.5 365.9L1604.0 826.4 M973.8 391.8L1604.0 865.6 M955.0 416.6L1604.0 904.8 M937.0 442.3L1588.8 934.0 M955.0 416.6L937.0 442.3 M937.0 442.3L937.0 486.3 M711.7 460.6L693.7 485.1 M886.3 414.4L868.3 438.9 M886.3 414.4L926.2 423.6 M985.3 438.0L1061.0 456.8 M1061.0 456.8L1043.0 482.0 M1217.5 613.5L1234.8 589.3 M1234.8 589.3L1234.8 625.6 M657.3 535.9L673.0 512.2 M657.3 535.9L831.5 490.2 M831.5 490.2L849.5 464.9 M831.5 490.2L1006.2 533.8 M1006.2 533.8L1023.8 507.5 M849.5 464.9L1023.8 507.5 M1006.2 533.8L1180.4 664.2 M1180.4 664.2L1198.4 641.1 M1180.4 664.2L1180.4 729.8 M1180.4 729.8L1198.4 704.6 M1198.4 641.1L1198.4 704.6 M1180.4 729.8L657.3 601.5 M657.3 535.9L657.3 601.5 M1412.3 934.0L1123.9 716.1" stroke="#d4b564" stroke-width="1.15" fill="none" stroke-linecap="round"/><ellipse cx="787.5" cy="569.5" rx="13.5" ry="12.5" fill="#4e4e4e" stroke="#8c8c8c" stroke-width="0.9"/><polygon fill="#555" stroke="#909090" stroke-width="0.9" points="774.0,572.0 781.0,563.0 792.0,565.5 796.0,575.0 789.5,585.0 778.5,583.0"/><polygon fill="#6a6a6a" stroke="#909090" stroke-width="0.8" points="781.0,563.0 784.5,559.5 794.5,561.5 792.0,565.5"/><polygon fill="#3a3a3a" stroke="#909090" stroke-width="0.8" points="792.0,565.5 794.5,561.5 799.0,570.5 796.0,575.0"/><ellipse cx="1048.5" cy="633.5" rx="13.5" ry="12.5" fill="#4e4e4e" stroke="#8c8c8c" stroke-width="0.9"/><polygon fill="#555" stroke="#909090" stroke-width="0.9" points="1035.0,636.0 1042.0,627.0 1053.0,629.5 1057.0,639.0 1050.5,649.0 1039.5,647.0"/><polygon fill="#6a6a6a" stroke="#909090" stroke-width="0.8" points="1042.0,627.0 1045.5,623.5 1055.5,625.5 1053.0,629.5"/><polygon fill="#3a3a3a" stroke="#909090" stroke-width="0.8" points="1053.0,629.5 1055.5,625.5 1060.0,634.5 1057.0,639.0"/><g fill="none" stroke="#c9c9c9" stroke-width="1"><circle cx="1508.5" cy="263.6" r="80.5"/><circle cx="1508.5" cy="263.6" r="40"/><path d="M1508.5 183V344.5M1428 263.6H1589"/></g><circle cx="1486" cy="273" r="5.8" fill="#ebcdb0" stroke="#d6b08c" stroke-width="1"/><path d="M330.5 876V800" stroke="#1a1aff" stroke-width="1.3"/><path d="M330.5 798L323.3 817.7L330.5 813L337.7 821.3z M330.5 798L327 818M330.5 798L334 819" fill="none" stroke="#1a1aff" stroke-width="1.1"/><path d="M336 879.5L372 828.5" stroke="#ff2020" stroke-width="1.3"/><path d="M373 827.5L355.7 840L364 839L370.9 843.7z M373 827.5L361 841M373 827.5L367 842" fill="none" stroke="#ff2020" stroke-width="1.1"/><path d="M282.9 874.7L319.7 883.3" stroke="#20e020" stroke-width="1.3"/><path d="M316.8 889.1L324.7 878.3L344.9 883.3L336.3 894.4z" fill="none" stroke="#222" stroke-width="1.3"/><path d="M325 775H335.5L325 785H335.5" fill="none" stroke="#333" stroke-width="1.2"/><path d="M377 810.5L386.7 821.3M386.7 810.5L377 821.3" fill="none" stroke="#333" stroke-width="1.2"/><rect x="288.5" y="172" width="23.5" height="14.5" rx="7.25" fill="#e4e4e4"/><rect x="315" y="172" width="139" height="14.5" rx="7.25" fill="#e4e4e4"/><rect x="457" y="172" width="153.5" height="14.5" rx="7.25" fill="#e4e4e4"/><path d="M297 179.5H303M300 176.5V182.5" stroke="#fafafa" stroke-width="1"/><text x="324" y="183.2" font-size="12" fill="#f8f8f8" font-family="Liberation Sans" textLength="122" lengthAdjust="spacingAndGlyphs">Пользовательский вид</text><text x="466.5" y="183.2" font-size="12" fill="#f8f8f8" font-family="Liberation Sans" textLength="135" lengthAdjust="spacingAndGlyphs">Быстрый с показом рёбер</text></svg><!--VPEXTRA--></div>
<div class="a" style="left:1607px;top:143px;width:3px;height:874px;background:#dcdcdc;"></div>
<div class="a" style="left:1610px;top:143px;width:310px;height:874px;background:#e8e8e8;"></div>
<div class="a" style="left:1610px;top:143px;width:1px;height:874px;background:#9c9c9c;"></div>
<div class="a" style="left:1611px;top:144px;width:309px;height:22px;background:#d6d6d6;"></div>
<div class="t" style="left:1613.00px;top:148.64px;font-size:12px;color:#6a6a6a;transform:scaleX(0.9083);">CADLib Проект</div>
<svg style="left:1893px;top:150px;" width="8" height="11" viewBox="0 0 8 11"><path d="M1.5 1H6.5M2.5 1V6H5.5V1M0.5 6.5H7.5M4 6.5V10.5" fill="none" stroke="#777" stroke-width="1.1"/></svg>
<svg style="left:1907px;top:150px;" width="10" height="10" viewBox="0 0 10 10"><path d="M1 1L9 9M9 1L1 9" stroke="#666" stroke-width="1.3"/></svg>
<div class="a" style="left:1611px;top:166px;width:289px;height:826px;background:#f0f0f0;"></div>
<div class="a" style="left:1611px;top:166px;width:289px;height:1px;background:#b8b8b8;"></div>
<div class="a" style="left:1900px;top:166px;width:20px;height:851px;background:#e8e8e8;"></div>
<div class="a" style="left:1900px;top:169px;width:18px;height:244px;background:#d0d0d0;"></div>
<div class="a" style="left:1900px;top:537px;width:18px;height:453px;background:#d0d0d0;"></div>
<div class="a" style="left:1902px;top:276.5px;width:93.5px;height:14px;transform:rotate(-90deg);transform-origin:0 0;overflow:visible">
<div class="t" style="left:0.00px;top:1.34px;font-size:12px;color:#2a2a2a;transform:scaleX(0.8566);">Свойства элемента</div>
</div>
<div class="a" style="left:1902px;top:372px;width:40px;height:14px;transform:rotate(-90deg);transform-origin:0 0;overflow:visible">
<div class="t" style="left:0.00px;top:1.34px;font-size:12px;color:#2a2a2a;transform:scaleX(0.8432);">Задания</div>
</div>
<div class="a" style="left:1902px;top:508px;width:68px;height:14px;transform:rotate(-90deg);transform-origin:0 0;overflow:visible">
<div class="t" style="left:0.00px;top:1.34px;font-size:12px;color:#2a2a2a;transform:scaleX(0.8406);">CadLib Проект</div>
</div>
<div class="a" style="left:1902px;top:648px;width:104px;height:14px;transform:rotate(-90deg);transform-origin:0 0;overflow:visible">
<div class="t" style="left:0.00px;top:1.34px;font-size:12px;color:#2a2a2a;transform:scaleX(0.8574);">Текущие переменные</div>
</div>
<svg style="left:1615px;top:171px;" width="14" height="15" viewBox="0 0 14 15"><path d="M3 1H10V6H3z" fill="#fff8d0" stroke="#b08a20" stroke-width="0.8"/><path d="M0.5 6H13.5V12Q13.5 14 11.5 14H2.5Q0.5 14 0.5 12z" fill="#f0c040" stroke="#b08a20" stroke-width="0.8"/></svg>
<svg style="left:1633.0px;top:176px;" width="8" height="5" viewBox="0 0 8 5"><path d="M0 0H8L4.0 4z" fill="#111"/></svg>
<div class="a" style="left:1647px;top:171px;width:1px;height:15px;background:#b0b0b0;"></div>
<svg style="left:1654px;top:171px;" width="13" height="16" viewBox="0 0 13 16"><rect x="0.5" y="0.5" width="7" height="12" fill="#f3c54a" stroke="#b08a20" stroke-width="0.7"/><path d="M9 9Q12 10 10 14M11 7Q7 7 8 11" fill="none" stroke="#2a9a2a" stroke-width="1.4"/></svg>
<div class="a" style="left:1672px;top:171px;width:1px;height:15px;background:#b0b0b0;"></div>
<svg style="left:1683px;top:173px;" width="8" height="10" viewBox="0 0 8 10"><path d="M0.5 0.5L7.5 5L0.5 9.5z" fill="#777"/></svg>
<svg style="left:1699.0px;top:176px;" width="8" height="5" viewBox="0 0 8 5"><path d="M0 0H8L4.0 4z" fill="#999"/></svg>
<div class="a" style="left:1712px;top:171px;width:1px;height:15px;background:#b0b0b0;"></div>
<svg style="left:1719px;top:170px;" width="14" height="16" viewBox="0 0 14 16"><rect x="0" y="0" width="3" height="3" fill="#f0a030"/><path d="M1.5 3V14M1.5 6H5M1.5 10H5M1.5 14H5" stroke="#888" stroke-width="0.8" stroke-dasharray="1 1"/><rect x="5" y="5" width="3" height="2.5" fill="#f0a030"/><rect x="5" y="9" width="3" height="2.5" fill="#f0a030"/><path d="M9 6.5H13M9 10.5H13M9 14H13" stroke="#5a5aa0" stroke-width="1"/></svg>
<svg style="left:1734.0px;top:176px;" width="8" height="5" viewBox="0 0 8 5"><path d="M0 0H8L4.0 4z" fill="#111"/></svg>
<svg style="left:1750px;top:174px;" width="11" height="8" viewBox="0 0 11 8"><rect x="0.5" y="0.5" width="10" height="6" fill="#e4e8f4" stroke="#9aa0c0" stroke-width="0.8"/><path d="M2 3.5H9" stroke="#9aa0c0" stroke-width="0.8"/></svg>
<div class="a" style="left:1766px;top:171px;width:1px;height:15px;background:#b0b0b0;"></div>
<svg style="left:1773px;top:173px;" width="14" height="9" viewBox="0 0 14 9"><path d="M0.5 0.5H9L6 4V8.5L3.5 7V4z" fill="#333"/><path d="M9 4H13M9 6.5H13" stroke="#333" stroke-width="1.2"/></svg>
<svg style="left:1788.0px;top:176px;" width="8" height="5" viewBox="0 0 8 5"><path d="M0 0H8L4.0 4z" fill="#111"/></svg>
<svg style="left:1801px;top:171px;" width="14" height="14" viewBox="0 0 14 14"><path d="M1 6L3 1H5V13H1z M9 1H11L13 6V13H9z" fill="#e8b030" stroke="#8a6010" stroke-width="0.7"/><rect x="5" y="5" width="4" height="4" fill="#c89020"/></svg>
<div class="a" style="left:1820px;top:171px;width:1px;height:15px;background:#b0b0b0;"></div>
<div class="a" style="left:1614px;top:189.5px;width:284px;height:1px;background:#c8c8c8;"></div>
<svg style="left:1615px;top:195px;" width="13" height="14" viewBox="0 0 13 14"><rect x="0.5" y="2.5" width="9" height="8" fill="#f3c54a" stroke="#8a6010" stroke-width="0.6"/><rect x="3" y="7" width="7" height="6.5" fill="#6060c0"/><rect x="8" y="0.5" width="4.5" height="6" rx="1.5" fill="#d0d0d0" stroke="#777" stroke-width="0.6"/></svg>
<svg style="left:1634.0px;top:200px;" width="8" height="5" viewBox="0 0 8 5"><path d="M0 0H8L4.0 4z" fill="#111"/></svg>
<svg style="left:1650px;top:198px;" width="11" height="8" viewBox="0 0 11 8"><rect x="0.5" y="0.5" width="10" height="6" fill="#e4e8f4" stroke="#9aa0c0" stroke-width="0.8"/><path d="M2 3.5H9" stroke="#9aa0c0" stroke-width="0.8"/></svg>
<svg style="left:1668px;top:196px;" width="12" height="12" viewBox="0 0 12 12"><circle cx="6" cy="6" r="5.5" fill="#1a5fd0" stroke="#0a3a90" stroke-width="0.6"/><path d="M3 6L5.3 8.5L9.2 3.8" fill="none" stroke="#fff" stroke-width="1.5"/></svg>
<svg style="left:1686.0px;top:200px;" width="8" height="5" viewBox="0 0 8 5"><path d="M0 0H8L4.0 4z" fill="#111"/></svg>
<div class="a" style="left:1613px;top:215.8px;width:178px;height:18px;background:#fff;border:1px solid #c8c8c8;border-top-color:#fff;border-left-color:#fff"></div>
<svg style="left:1616px;top:221px;" width="9" height="8" viewBox="0 0 9 8"><path d="M0.5 0.5H5.5V3.5H8.5V7.5H3.5V4.5H0.5z" fill="#333"/><path d="M1.5 1.5H4.5V3.5" fill="#fff"/></svg>
<div class="t" style="left:1630.00px;top:219.41px;font-size:10.5px;color:#111;transform:scaleX(0.8511);">.Несущие конструкции покрытия</div>
<svg style="left:1799px;top:217px;" width="12" height="12" viewBox="0 0 12 12"><circle cx="6" cy="6" r="5.5" fill="#4cb04c" stroke="#2a7a2a" stroke-width="0.8"/><circle cx="6" cy="6" r="3" fill="#dff0df"/><path d="M3 6L6 3.5V8.5z" fill="#2a7a2a"/></svg>
<svg style="left:1818.0px;top:222px;" width="8" height="5" viewBox="0 0 8 5"><path d="M0 0H8L4.0 4z" fill="#111"/></svg>
<svg style="left:1831px;top:217px;" width="13" height="12" viewBox="0 0 13 12"><path d="M0.5 2.5H5L6 3.5H12.5V11.5H0.5z" fill="#f0c040" stroke="#9a7010" stroke-width="0.7"/><path d="M6 9Q9 8 10 3M8 3.5H10.5V6" fill="none" stroke="#2a9a2a" stroke-width="1.4"/></svg>
<svg style="left:1850px;top:217px;" width="12" height="12" viewBox="0 0 12 12"><circle cx="6" cy="6" r="5.5" fill="#4cb04c" stroke="#2a7a2a" stroke-width="0.8"/><circle cx="6" cy="6" r="3" fill="#dff0df"/><path d="M9 6L6 3.5V8.5z" fill="#2a7a2a"/></svg>
<svg style="left:1865.0px;top:222px;" width="8" height="5" viewBox="0 0 8 5"><path d="M0 0H8L4.0 4z" fill="#111"/></svg>
<div class="a" style="left:1878px;top:217px;width:1px;height:15px;background:#b0b0b0;"></div>
<div class="a" style="left:1882px;top:215px;width:18px;height:18px;background:#cce8ff;border:1px solid #99d1ff"></div>
<svg style="left:1884px;top:217px;" width="14" height="14" viewBox="0 0 14 14"><path d="M2 12L6 8M5 6L8 9L12 5L10 2L7 3z" fill="#ddd" stroke="#333" stroke-width="1"/></svg>
<div class="a" style="left:1611px;top:234px;width:273px;height:260px;background:#ffffff;"></div>
<div class="a" style="left:1611px;top:234px;width:289px;height:1px;background:#c6c6c6;"></div>
<div class="a" style="left:1884px;top:235px;width:16px;height:259px;background:#f0f0f0;"></div>
<div class="a" style="left:1885px;top:251px;width:14px;height:100px;background:#cdcdcd;"></div>
<svg style="left:1887px;top:240px;" width="10" height="6" viewBox="0 0 10 6"><path d="M1 5L5 1L9 5" fill="none" stroke="#444" stroke-width="1.2"/></svg>
<svg style="left:1887px;top:481px;" width="10" height="6" viewBox="0 0 10 6"><path d="M1 1L5 5L9 1" fill="none" stroke="#444" stroke-width="1.2"/></svg>
<div class="a" style="left:1621px;top:241px;width:1px;height:253px;background:repeating-linear-gradient(to bottom,#a8a8a8 0 1px,transparent 1px 2px)"></div>
<div class="a" style="left:1636px;top:266px;width:1px;height:228px;background:repeating-linear-gradient(to bottom,#a8a8a8 0 1px,transparent 1px 2px)"></div>
<div class="a" style="left:1651px;top:279px;width:1px;height:215px;background:repeating-linear-gradient(to bottom,#a8a8a8 0 1px,transparent 1px 2px)"></div>
<div class="a" style="left:1666px;top:292px;width:1px;height:28px;background:repeating-linear-gradient(to bottom,#a8a8a8 0 1px,transparent 1px 2px)"></div>
<div class="a" style="left:1681px;top:330px;width:1px;height:164px;background:repeating-linear-gradient(to bottom,#a8a8a8 0 1px,transparent 1px 2px)"></div>
<div class="a" style="left:1696px;top:356px;width:1px;height:116px;background:repeating-linear-gradient(to bottom,#a8a8a8 0 1px,transparent 1px 2px)"></div>
<div class="a" style="left:1621px;top:241px;width:8px;height:1px;background:repeating-linear-gradient(to right,#a8a8a8 0 1px,transparent 1px 2px)"></div>
<svg style="left:1629px;top:235.0px;" width="13" height="12" viewBox="0 0 13 12"><rect x="0.5" y="0.5" width="11" height="11" rx="2" fill="#2a7ad8" stroke="#1a4a90" stroke-width="0.6"/><circle cx="6" cy="6" r="3.5" fill="#fff8c0"/><circle cx="11.5" cy="3" r="1.3" fill="#e05020"/></svg>
<div class="t" style="left:1647.00px;top:236.53px;font-size:9.3px;color:#111;transform:scaleX(0.9261);">Мои публикации</div>
<svg style="left:1617px;top:249.3px;" width="9" height="9" viewBox="0 0 9 9"><rect x="0.5" y="0.5" width="8" height="8" fill="#f4f4f4" stroke="#a0a0a0" stroke-width="0.8"/><path d="M2 4.5H7" stroke="#3a4aa0" stroke-width="1"/></svg>
<div class="a" style="left:1626px;top:254px;width:3px;height:1px;background:repeating-linear-gradient(to right,#a8a8a8 0 1px,transparent 1px 2px)"></div>
<svg style="left:1629px;top:246.8px;" width="12" height="14" viewBox="0 0 12 14"><path d="M6 1V13M1 4H11M6 1L1 4M4 13H8" fill="none" stroke="#111" stroke-width="1.1"/><path d="M1 4V7" stroke="#888" stroke-width="0.8"/><circle cx="10.5" cy="4" r="1" fill="#111"/></svg>
<div class="t" style="left:1647.00px;top:249.33px;font-size:9.3px;color:#111;transform:scaleX(0.9401);">Здания и сооружения</div>
<svg style="left:1632px;top:262.1px;" width="9" height="9" viewBox="0 0 9 9"><rect x="0.5" y="0.5" width="8" height="8" fill="#f4f4f4" stroke="#a0a0a0" stroke-width="0.8"/><path d="M2 4.5H7" stroke="#3a4aa0" stroke-width="1"/></svg>
<div class="a" style="left:1641px;top:267px;width:3px;height:1px;background:repeating-linear-gradient(to right,#a8a8a8 0 1px,transparent 1px 2px)"></div>
<svg style="left:1644px;top:259.6px;" width="12" height="14" viewBox="0 0 12 14"><path d="M6 1V13M1 4H11M6 1L1 4M4 13H8" fill="none" stroke="#111" stroke-width="1.1"/><path d="M1 4V7" stroke="#888" stroke-width="0.8"/><circle cx="10.5" cy="4" r="1" fill="#111"/></svg>
<div class="t" style="left:1662.00px;top:262.13px;font-size:9.3px;color:#111;transform:scaleX(0.9245);">01.Офисный центр</div>
<svg style="left:1647px;top:274.9px;" width="9" height="9" viewBox="0 0 9 9"><rect x="0.5" y="0.5" width="8" height="8" fill="#f4f4f4" stroke="#a0a0a0" stroke-width="0.8"/><path d="M2 4.5H7" stroke="#3a4aa0" stroke-width="1"/></svg>
<div class="a" style="left:1656px;top:279px;width:3px;height:1px;background:repeating-linear-gradient(to right,#a8a8a8 0 1px,transparent 1px 2px)"></div>
<svg style="left:1659px;top:274.4px;" width="12" height="8" viewBox="0 0 12 8"><path d="M0.5 7.5V4L3 1H9L11.5 4V7.5z" fill="#fff" stroke="#111" stroke-width="1"/><path d="M3 1H9L11.5 4H4.5z" fill="#1a3ab0"/><path d="M4.5 4V7.5" stroke="#111"/></svg>
<div class="t" style="left:1677.00px;top:274.93px;font-size:9.3px;color:#111;transform:scaleX(0.9337);">001.Офисное здание</div>
<svg style="left:1662px;top:287.7px;" width="9" height="9" viewBox="0 0 9 9"><rect x="0.5" y="0.5" width="8" height="8" fill="#f4f4f4" stroke="#a0a0a0" stroke-width="0.8"/><path d="M2 4.5H7" stroke="#3a4aa0" stroke-width="1"/><path d="M4.5 2V7" stroke="#3a4aa0" stroke-width="1"/></svg>
<div class="a" style="left:1671px;top:292px;width:3px;height:1px;background:repeating-linear-gradient(to right,#a8a8a8 0 1px,transparent 1px 2px)"></div>
<svg style="left:1675px;top:286.2px;" width="13" height="11" viewBox="0 0 13 11"><path d="M0.5 2Q0.5 0.5 2 0.5H5L6.5 2H11.5V10.5H0.5z" fill="#f0c850" stroke="#b08a20" stroke-width="0.7"/><path d="M0.5 4H12.5L11.5 10.5H0.5z" fill="#fde690" stroke="#b08a20" stroke-width="0.6"/></svg>
<div class="t" style="left:1694.00px;top:287.73px;font-size:9.3px;color:#111;transform:scaleX(0.9868);">Ситуация</div>
<svg style="left:1662px;top:300.5px;" width="9" height="9" viewBox="0 0 9 9"><rect x="0.5" y="0.5" width="8" height="8" fill="#f4f4f4" stroke="#a0a0a0" stroke-width="0.8"/><path d="M2 4.5H7" stroke="#3a4aa0" stroke-width="1"/><path d="M4.5 2V7" stroke="#3a4aa0" stroke-width="1"/></svg>
<div class="a" style="left:1671px;top:305px;width:3px;height:1px;background:repeating-linear-gradient(to right,#a8a8a8 0 1px,transparent 1px 2px)"></div>
<svg style="left:1675px;top:299.0px;" width="13" height="11" viewBox="0 0 13 11"><path d="M0.5 2Q0.5 0.5 2 0.5H5L6.5 2H11.5V10.5H0.5z" fill="#f0c850" stroke="#b08a20" stroke-width="0.7"/><path d="M0.5 4H12.5L11.5 10.5H0.5z" fill="#fde690" stroke="#b08a20" stroke-width="0.6"/></svg>
<div class="t" style="left:1694.00px;top:300.53px;font-size:9.3px;color:#111;transform:scaleX(0.9751);">Системы</div>
<svg style="left:1662px;top:313.3px;" width="9" height="9" viewBox="0 0 9 9"><rect x="0.5" y="0.5" width="8" height="8" fill="#f4f4f4" stroke="#a0a0a0" stroke-width="0.8"/><path d="M2 4.5H7" stroke="#3a4aa0" stroke-width="1"/></svg>
<div class="a" style="left:1671px;top:318px;width:3px;height:1px;background:repeating-linear-gradient(to right,#a8a8a8 0 1px,transparent 1px 2px)"></div>
<svg style="left:1675px;top:311.8px;" width="13" height="11" viewBox="0 0 13 11"><path d="M0.5 2Q0.5 0.5 2 0.5H5L6.5 2H11.5V10.5H0.5z" fill="#f0c850" stroke="#b08a20" stroke-width="0.7"/><path d="M0.5 4H12.5L11.5 10.5H0.5z" fill="#fde690" stroke="#b08a20" stroke-width="0.6"/></svg>
<div class="t" style="left:1694.00px;top:313.33px;font-size:9.3px;color:#111;transform:scaleX(1.0716);">Конструкции</div>
<svg style="left:1677px;top:326.1px;" width="9" height="9" viewBox="0 0 9 9"><rect x="0.5" y="0.5" width="8" height="8" fill="#f4f4f4" stroke="#a0a0a0" stroke-width="0.8"/><path d="M2 4.5H7" stroke="#3a4aa0" stroke-width="1"/><path d="M4.5 2V7" stroke="#3a4aa0" stroke-width="1"/></svg>
<div class="a" style="left:1686px;top:331px;width:3px;height:1px;background:repeating-linear-gradient(to right,#a8a8a8 0 1px,transparent 1px 2px)"></div>
<svg style="left:1690px;top:326.6px;" width="11" height="8" viewBox="0 0 11 8"><path d="M0.5 0.5H6V3H10.5V7.5H3V5H0.5z" fill="#fff" stroke="#222" stroke-width="1"/><path d="M3 3H6V5H3z" fill="#222"/></svg>
<div class="t" style="left:1707.00px;top:326.13px;font-size:9.3px;color:#111;transform:scaleX(0.9515);">АР.Архитектурные решения</div>
<svg style="left:1677px;top:338.9px;" width="9" height="9" viewBox="0 0 9 9"><rect x="0.5" y="0.5" width="8" height="8" fill="#f4f4f4" stroke="#a0a0a0" stroke-width="0.8"/><path d="M2 4.5H7" stroke="#3a4aa0" stroke-width="1"/></svg>
<div class="a" style="left:1686px;top:343px;width:3px;height:1px;background:repeating-linear-gradient(to right,#a8a8a8 0 1px,transparent 1px 2px)"></div>
<svg style="left:1690px;top:339.4px;" width="11" height="8" viewBox="0 0 11 8"><path d="M0.5 0.5H6V3H10.5V7.5H3V5H0.5z" fill="#fff" stroke="#222" stroke-width="1"/><path d="M3 3H6V5H3z" fill="#222"/></svg>
<div class="t" style="left:1707.00px;top:338.93px;font-size:9.3px;color:#111;transform:scaleX(0.9751);">КЖ.Конструкции железобетонные</div>
<svg style="left:1692px;top:351.7px;" width="9" height="9" viewBox="0 0 9 9"><rect x="0.5" y="0.5" width="8" height="8" fill="#f4f4f4" stroke="#a0a0a0" stroke-width="0.8"/><path d="M2 4.5H7" stroke="#3a4aa0" stroke-width="1"/><path d="M4.5 2V7" stroke="#3a4aa0" stroke-width="1"/></svg>
<div class="a" style="left:1701px;top:356px;width:3px;height:1px;background:repeating-linear-gradient(to right,#a8a8a8 0 1px,transparent 1px 2px)"></div>
<svg style="left:1705px;top:352.2px;" width="10" height="8" viewBox="0 0 10 8"><path d="M0.5 0.5H5.5V3H9.5V7H2.5V4.5H0.5z" fill="#fff" stroke="#222" stroke-width="1"/><path d="M2.5 3H5.5V4.5H2.5z" fill="#222"/></svg>
<div class="t" style="left:1722.00px;top:351.73px;font-size:9.3px;color:#111;transform:scaleX(0.9785);">.Перекрытия</div>
<svg style="left:1692px;top:364.5px;" width="9" height="9" viewBox="0 0 9 9"><rect x="0.5" y="0.5" width="8" height="8" fill="#f4f4f4" stroke="#a0a0a0" stroke-width="0.8"/><path d="M2 4.5H7" stroke="#3a4aa0" stroke-width="1"/><path d="M4.5 2V7" stroke="#3a4aa0" stroke-width="1"/></svg>
<div class="a" style="left:1701px;top:369px;width:3px;height:1px;background:repeating-linear-gradient(to right,#a8a8a8 0 1px,transparent 1px 2px)"></div>
<svg style="left:1705px;top:365.0px;" width="10" height="8" viewBox="0 0 10 8"><path d="M0.5 0.5H5.5V3H9.5V7H2.5V4.5H0.5z" fill="#fff" stroke="#222" stroke-width="1"/><path d="M2.5 3H5.5V4.5H2.5z" fill="#222"/></svg>
<div class="t" style="left:1722.00px;top:364.53px;font-size:9.3px;color:#111;transform:scaleX(0.9625);">.Лестницы и площадки</div>
<svg style="left:1692px;top:377.3px;" width="9" height="9" viewBox="0 0 9 9"><rect x="0.5" y="0.5" width="8" height="8" fill="#f4f4f4" stroke="#a0a0a0" stroke-width="0.8"/><path d="M2 4.5H7" stroke="#3a4aa0" stroke-width="1"/><path d="M4.5 2V7" stroke="#3a4aa0" stroke-width="1"/></svg>
<div class="a" style="left:1701px;top:382px;width:3px;height:1px;background:repeating-linear-gradient(to right,#a8a8a8 0 1px,transparent 1px 2px)"></div>
<svg style="left:1705px;top:377.8px;" width="10" height="8" viewBox="0 0 10 8"><path d="M0.5 0.5H5.5V3H9.5V7H2.5V4.5H0.5z" fill="#fff" stroke="#222" stroke-width="1"/><path d="M2.5 3H5.5V4.5H2.5z" fill="#222"/></svg>
<div class="t" style="left:1722.00px;top:377.33px;font-size:9.3px;color:#111;transform:scaleX(0.9586);">.Крыльца и пандусы</div>
<svg style="left:1692px;top:390.1px;" width="9" height="9" viewBox="0 0 9 9"><rect x="0.5" y="0.5" width="8" height="8" fill="#f4f4f4" stroke="#a0a0a0" stroke-width="0.8"/><path d="M2 4.5H7" stroke="#3a4aa0" stroke-width="1"/><path d="M4.5 2V7" stroke="#3a4aa0" stroke-width="1"/></svg>
<div class="a" style="left:1701px;top:395px;width:3px;height:1px;background:repeating-linear-gradient(to right,#a8a8a8 0 1px,transparent 1px 2px)"></div>
<svg style="left:1705px;top:390.6px;" width="10" height="8" viewBox="0 0 10 8"><path d="M0.5 0.5H5.5V3H9.5V7H2.5V4.5H0.5z" fill="#fff" stroke="#222" stroke-width="1"/><path d="M2.5 3H5.5V4.5H2.5z" fill="#222"/></svg>
<div class="t" style="left:1722.00px;top:390.13px;font-size:9.3px;color:#111;transform:scaleX(0.9543);">.Монолитная стена</div>
<svg style="left:1692px;top:402.9px;" width="9" height="9" viewBox="0 0 9 9"><rect x="0.5" y="0.5" width="8" height="8" fill="#f4f4f4" stroke="#a0a0a0" stroke-width="0.8"/><path d="M2 4.5H7" stroke="#3a4aa0" stroke-width="1"/><path d="M4.5 2V7" stroke="#3a4aa0" stroke-width="1"/></svg>
<div class="a" style="left:1701px;top:407px;width:3px;height:1px;background:repeating-linear-gradient(to right,#a8a8a8 0 1px,transparent 1px 2px)"></div>
<svg style="left:1705px;top:403.4px;" width="10" height="8" viewBox="0 0 10 8"><path d="M0.5 0.5H5.5V3H9.5V7H2.5V4.5H0.5z" fill="#fff" stroke="#222" stroke-width="1"/><path d="M2.5 3H5.5V4.5H2.5z" fill="#222"/></svg>
<div class="t" style="left:1722.00px;top:402.93px;font-size:9.3px;color:#111;transform:scaleX(0.9846);">.Колонны</div>
<svg style="left:1692px;top:415.70000000000005px;" width="9" height="9" viewBox="0 0 9 9"><rect x="0.5" y="0.5" width="8" height="8" fill="#f4f4f4" stroke="#a0a0a0" stroke-width="0.8"/><path d="M2 4.5H7" stroke="#3a4aa0" stroke-width="1"/><path d="M4.5 2V7" stroke="#3a4aa0" stroke-width="1"/></svg>
<div class="a" style="left:1701px;top:420px;width:3px;height:1px;background:repeating-linear-gradient(to right,#a8a8a8 0 1px,transparent 1px 2px)"></div>
<svg style="left:1705px;top:416.20000000000005px;" width="10" height="8" viewBox="0 0 10 8"><path d="M0.5 0.5H5.5V3H9.5V7H2.5V4.5H0.5z" fill="#fff" stroke="#222" stroke-width="1"/><path d="M2.5 3H5.5V4.5H2.5z" fill="#222"/></svg>
<div class="t" style="left:1722.00px;top:415.73px;font-size:9.3px;color:#111;transform:scaleX(0.9373);">.Плита фундаментная</div>
<svg style="left:1692px;top:428.5px;" width="9" height="9" viewBox="0 0 9 9"><rect x="0.5" y="0.5" width="8" height="8" fill="#f4f4f4" stroke="#a0a0a0" stroke-width="0.8"/><path d="M2 4.5H7" stroke="#3a4aa0" stroke-width="1"/><path d="M4.5 2V7" stroke="#3a4aa0" stroke-width="1"/></svg>
<div class="a" style="left:1701px;top:433px;width:3px;height:1px;background:repeating-linear-gradient(to right,#a8a8a8 0 1px,transparent 1px 2px)"></div>
<svg style="left:1705px;top:429.0px;" width="10" height="8" viewBox="0 0 10 8"><path d="M0.5 0.5H5.5V3H9.5V7H2.5V4.5H0.5z" fill="#fff" stroke="#222" stroke-width="1"/><path d="M2.5 3H5.5V4.5H2.5z" fill="#222"/></svg>
<div class="t" style="left:1722.00px;top:428.53px;font-size:9.3px;color:#111;transform:scaleX(0.9846);">.Диафрагма жесткости</div>
<svg style="left:1692px;top:441.3px;" width="9" height="9" viewBox="0 0 9 9"><rect x="0.5" y="0.5" width="8" height="8" fill="#f4f4f4" stroke="#a0a0a0" stroke-width="0.8"/><path d="M2 4.5H7" stroke="#3a4aa0" stroke-width="1"/><path d="M4.5 2V7" stroke="#3a4aa0" stroke-width="1"/></svg>
<div class="a" style="left:1701px;top:446px;width:3px;height:1px;background:repeating-linear-gradient(to right,#a8a8a8 0 1px,transparent 1px 2px)"></div>
<svg style="left:1705px;top:441.8px;" width="10" height="8" viewBox="0 0 10 8"><path d="M0.5 0.5H5.5V3H9.5V7H2.5V4.5H0.5z" fill="#fff" stroke="#222" stroke-width="1"/><path d="M2.5 3H5.5V4.5H2.5z" fill="#222"/></svg>
<div class="a" style="left:1720px;top:439.3px;width:139px;height:13px;background:#ececec;"></div>
<div class="t" style="left:1722.00px;top:441.33px;font-size:9.3px;color:#111;transform:scaleX(0.9684);">.Несущие конструкции покрытия</div>
<svg style="left:1692px;top:454.1px;" width="9" height="9" viewBox="0 0 9 9"><rect x="0.5" y="0.5" width="8" height="8" fill="#f4f4f4" stroke="#a0a0a0" stroke-width="0.8"/><path d="M2 4.5H7" stroke="#3a4aa0" stroke-width="1"/><path d="M4.5 2V7" stroke="#3a4aa0" stroke-width="1"/></svg>
<div class="a" style="left:1701px;top:459px;width:3px;height:1px;background:repeating-linear-gradient(to right,#a8a8a8 0 1px,transparent 1px 2px)"></div>
<svg style="left:1705px;top:454.6px;" width="10" height="8" viewBox="0 0 10 8"><path d="M0.5 0.5H5.5V3H9.5V7H2.5V4.5H0.5z" fill="#fff" stroke="#222" stroke-width="1"/><path d="M2.5 3H5.5V4.5H2.5z" fill="#222"/></svg>
<div class="t" style="left:1722.00px;top:454.13px;font-size:9.3px;color:#111;transform:scaleX(0.9132);">Вентшахты.</div>
<svg style="left:1692px;top:466.9px;" width="9" height="9" viewBox="0 0 9 9"><rect x="0.5" y="0.5" width="8" height="8" fill="#f4f4f4" stroke="#a0a0a0" stroke-width="0.8"/><path d="M2 4.5H7" stroke="#3a4aa0" stroke-width="1"/><path d="M4.5 2V7" stroke="#3a4aa0" stroke-width="1"/></svg>
<div class="a" style="left:1701px;top:471px;width:3px;height:1px;background:repeating-linear-gradient(to right,#a8a8a8 0 1px,transparent 1px 2px)"></div>
<svg style="left:1705px;top:467.4px;" width="10" height="8" viewBox="0 0 10 8"><path d="M0.5 0.5H5.5V3H9.5V7H2.5V4.5H0.5z" fill="#fff" stroke="#222" stroke-width="1"/><path d="M2.5 3H5.5V4.5H2.5z" fill="#222"/></svg>
<div class="t" style="left:1722.00px;top:466.93px;font-size:9.3px;color:#111;transform:scaleX(0.9352);">Перекрытие +6.600.</div>
<svg style="left:1677px;top:479.70000000000005px;" width="9" height="9" viewBox="0 0 9 9"><rect x="0.5" y="0.5" width="8" height="8" fill="#f4f4f4" stroke="#a0a0a0" stroke-width="0.8"/><path d="M2 4.5H7" stroke="#3a4aa0" stroke-width="1"/><path d="M4.5 2V7" stroke="#3a4aa0" stroke-width="1"/></svg>
<div class="a" style="left:1686px;top:484px;width:3px;height:1px;background:repeating-linear-gradient(to right,#a8a8a8 0 1px,transparent 1px 2px)"></div>
<svg style="left:1690px;top:480.20000000000005px;" width="11" height="8" viewBox="0 0 11 8"><path d="M0.5 0.5H6V3H10.5V7.5H3V5H0.5z" fill="#fff" stroke="#222" stroke-width="1"/><path d="M3 3H6V5H3z" fill="#222"/></svg>
<div class="t" style="left:1707.00px;top:479.73px;font-size:9.3px;color:#111;transform:scaleX(0.9682);">КД.Конструкции деревянные</div>
<div class="a" style="left:1611px;top:494px;width:289px;height:2px;background:#d8d8d8;"></div>
<div class="a" style="left:1611px;top:496px;width:289px;height:480px;background:#ffffff;"></div>
<div class="a" style="left:1621px;top:496px;width:1px;height:429px;background:repeating-linear-gradient(to bottom,#a8a8a8 0 1px,transparent 1px 2px)"></div>
<svg style="left:1617px;top:498.0px;" width="9" height="9" viewBox="0 0 9 9"><rect x="0.5" y="0.5" width="8" height="8" fill="#f4f4f4" stroke="#a0a0a0" stroke-width="0.8"/><path d="M2 4.5H7" stroke="#3a4aa0" stroke-width="1"/><path d="M4.5 2V7" stroke="#3a4aa0" stroke-width="1"/></svg>
<div class="a" style="left:1626px;top:502px;width:3px;height:1px;background:repeating-linear-gradient(to right,#a8a8a8 0 1px,transparent 1px 2px)"></div>
<svg style="left:1629px;top:496.5px;" width="12" height="12" viewBox="0 0 12 12"><path d="M6 0.5V11.5M0.5 6H11.5" stroke="#1a8a1a" stroke-width="1.3" stroke-dasharray="1.3 1"/><path d="M3 3H9V9H3z" fill="#f3c020"/><path d="M3 4Q6 1 9 4V8Q6 11 3 8z" fill="#f8d040" stroke="#c89010" stroke-width="0.5"/></svg>
<div class="t" style="left:1647.00px;top:498.03px;font-size:9.3px;color:#111;transform:scaleX(0.9296);">Ригель Б48-1</div>
<svg style="left:1873px;top:498.5px;" width="13" height="9" viewBox="0 0 13 9"><path d="M0.5 4.5Q6.5 -1.5 12.5 4.5Q6.5 10.5 0.5 4.5z" fill="#e8eee8" stroke="#555" stroke-width="0.9"/><circle cx="6.5" cy="4.5" r="2.6" fill="#3aa050"/><circle cx="6.5" cy="4.5" r="1" fill="#111"/></svg>
<svg style="left:1888px;top:496.5px;" width="11" height="12" viewBox="0 0 11 12"><circle cx="4" cy="4" r="3.3" fill="#fafafa" stroke="#bbb" stroke-width="0.9"/><path d="M6.5 6.5L10 10.5" stroke="#d08040" stroke-width="1.6"/></svg>
<svg style="left:1617px;top:510.79999999999995px;" width="9" height="9" viewBox="0 0 9 9"><rect x="0.5" y="0.5" width="8" height="8" fill="#f4f4f4" stroke="#a0a0a0" stroke-width="0.8"/><path d="M2 4.5H7" stroke="#3a4aa0" stroke-width="1"/><path d="M4.5 2V7" stroke="#3a4aa0" stroke-width="1"/></svg>
<div class="a" style="left:1626px;top:515px;width:3px;height:1px;background:repeating-linear-gradient(to right,#a8a8a8 0 1px,transparent 1px 2px)"></div>
<svg style="left:1629px;top:509.29999999999995px;" width="12" height="12" viewBox="0 0 12 12"><path d="M6 0.5V11.5M0.5 6H11.5" stroke="#1a8a1a" stroke-width="1.3" stroke-dasharray="1.3 1"/><path d="M3 3H9V9H3z" fill="#f3c020"/><path d="M3 4Q6 1 9 4V8Q6 11 3 8z" fill="#f8d040" stroke="#c89010" stroke-width="0.5"/></svg>
<div class="t" style="left:1647.00px;top:510.83px;font-size:9.3px;color:#111;transform:scaleX(0.9296);">Ригель Б48-1</div>
<svg style="left:1873px;top:511.29999999999995px;" width="13" height="9" viewBox="0 0 13 9"><path d="M0.5 4.5Q6.5 -1.5 12.5 4.5Q6.5 10.5 0.5 4.5z" fill="#e8eee8" stroke="#555" stroke-width="0.9"/><circle cx="6.5" cy="4.5" r="2.6" fill="#3aa050"/><circle cx="6.5" cy="4.5" r="1" fill="#111"/></svg>
<svg style="left:1888px;top:509.29999999999995px;" width="11" height="12" viewBox="0 0 11 12"><circle cx="4" cy="4" r="3.3" fill="#fafafa" stroke="#bbb" stroke-width="0.9"/><path d="M6.5 6.5L10 10.5" stroke="#d08040" stroke-width="1.6"/></svg>
<svg style="left:1617px;top:523.6px;" width="9" height="9" viewBox="0 0 9 9"><rect x="0.5" y="0.5" width="8" height="8" fill="#f4f4f4" stroke="#a0a0a0" stroke-width="0.8"/><path d="M2 4.5H7" stroke="#3a4aa0" stroke-width="1"/><path d="M4.5 2V7" stroke="#3a4aa0" stroke-width="1"/></svg>
<div class="a" style="left:1626px;top:528px;width:3px;height:1px;background:repeating-linear-gradient(to right,#a8a8a8 0 1px,transparent 1px 2px)"></div>
<svg style="left:1629px;top:522.1px;" width="12" height="12" viewBox="0 0 12 12"><path d="M6 0.5V11.5M0.5 6H11.5" stroke="#1a8a1a" stroke-width="1.3" stroke-dasharray="1.3 1"/><path d="M3 3H9V9H3z" fill="#f3c020"/><path d="M3 4Q6 1 9 4V8Q6 11 3 8z" fill="#f8d040" stroke="#c89010" stroke-width="0.5"/></svg>
<div class="t" style="left:1647.00px;top:523.63px;font-size:9.3px;color:#111;transform:scaleX(0.9296);">Ригель Б48-1</div>
<svg style="left:1873px;top:524.1px;" width="13" height="9" viewBox="0 0 13 9"><path d="M0.5 4.5Q6.5 -1.5 12.5 4.5Q6.5 10.5 0.5 4.5z" fill="#e8eee8" stroke="#555" stroke-width="0.9"/><circle cx="6.5" cy="4.5" r="2.6" fill="#3aa050"/><circle cx="6.5" cy="4.5" r="1" fill="#111"/></svg>
<svg style="left:1888px;top:522.1px;" width="11" height="12" viewBox="0 0 11 12"><circle cx="4" cy="4" r="3.3" fill="#fafafa" stroke="#bbb" stroke-width="0.9"/><path d="M6.5 6.5L10 10.5" stroke="#d08040" stroke-width="1.6"/></svg>
<svg style="left:1617px;top:536.4px;" width="9" height="9" viewBox="0 0 9 9"><rect x="0.5" y="0.5" width="8" height="8" fill="#f4f4f4" stroke="#a0a0a0" stroke-width="0.8"/><path d="M2 4.5H7" stroke="#3a4aa0" stroke-width="1"/><path d="M4.5 2V7" stroke="#3a4aa0" stroke-width="1"/></svg>
<div class="a" style="left:1626px;top:541px;width:3px;height:1px;background:repeating-linear-gradient(to right,#a8a8a8 0 1px,transparent 1px 2px)"></div>
<svg style="left:1629px;top:534.9px;" width="12" height="12" viewBox="0 0 12 12"><path d="M6 0.5V11.5M0.5 6H11.5" stroke="#1a8a1a" stroke-width="1.3" stroke-dasharray="1.3 1"/><path d="M3 3H9V9H3z" fill="#f3c020"/><path d="M3 4Q6 1 9 4V8Q6 11 3 8z" fill="#f8d040" stroke="#c89010" stroke-width="0.5"/></svg>
<div class="t" style="left:1647.00px;top:536.43px;font-size:9.3px;color:#111;transform:scaleX(0.9296);">Ригель Б48-1</div>
<svg style="left:1873px;top:536.9px;" width="13" height="9" viewBox="0 0 13 9"><path d="M0.5 4.5Q6.5 -1.5 12.5 4.5Q6.5 10.5 0.5 4.5z" fill="#e8eee8" stroke="#555" stroke-width="0.9"/><circle cx="6.5" cy="4.5" r="2.6" fill="#3aa050"/><circle cx="6.5" cy="4.5" r="1" fill="#111"/></svg>
<svg style="left:1888px;top:534.9px;" width="11" height="12" viewBox="0 0 11 12"><circle cx="4" cy="4" r="3.3" fill="#fafafa" stroke="#bbb" stroke-width="0.9"/><path d="M6.5 6.5L10 10.5" stroke="#d08040" stroke-width="1.6"/></svg>
<svg style="left:1617px;top:549.2px;" width="9" height="9" viewBox="0 0 9 9"><rect x="0.5" y="0.5" width="8" height="8" fill="#f4f4f4" stroke="#a0a0a0" stroke-width="0.8"/><path d="M2 4.5H7" stroke="#3a4aa0" stroke-width="1"/><path d="M4.5 2V7" stroke="#3a4aa0" stroke-width="1"/></svg>
<div class="a" style="left:1626px;top:554px;width:3px;height:1px;background:repeating-linear-gradient(to right,#a8a8a8 0 1px,transparent 1px 2px)"></div>
<svg style="left:1629px;top:547.7px;" width="12" height="12" viewBox="0 0 12 12"><path d="M6 0.5V11.5M0.5 6H11.5" stroke="#1a8a1a" stroke-width="1.3" stroke-dasharray="1.3 1"/><path d="M3 3H9V9H3z" fill="#f3c020"/><path d="M3 4Q6 1 9 4V8Q6 11 3 8z" fill="#f8d040" stroke="#c89010" stroke-width="0.5"/></svg>
<div class="t" style="left:1647.00px;top:549.23px;font-size:9.3px;color:#111;transform:scaleX(0.9296);">Ригель Б48-1</div>
<svg style="left:1873px;top:549.7px;" width="13" height="9" viewBox="0 0 13 9"><path d="M0.5 4.5Q6.5 -1.5 12.5 4.5Q6.5 10.5 0.5 4.5z" fill="#e8eee8" stroke="#555" stroke-width="0.9"/><circle cx="6.5" cy="4.5" r="2.6" fill="#3aa050"/><circle cx="6.5" cy="4.5" r="1" fill="#111"/></svg>
<svg style="left:1888px;top:547.7px;" width="11" height="12" viewBox="0 0 11 12"><circle cx="4" cy="4" r="3.3" fill="#fafafa" stroke="#bbb" stroke-width="0.9"/><path d="M6.5 6.5L10 10.5" stroke="#d08040" stroke-width="1.6"/></svg>
<svg style="left:1617px;top:562.0px;" width="9" height="9" viewBox="0 0 9 9"><rect x="0.5" y="0.5" width="8" height="8" fill="#f4f4f4" stroke="#a0a0a0" stroke-width="0.8"/><path d="M2 4.5H7" stroke="#3a4aa0" stroke-width="1"/><path d="M4.5 2V7" stroke="#3a4aa0" stroke-width="1"/></svg>
<div class="a" style="left:1626px;top:566px;width:3px;height:1px;background:repeating-linear-gradient(to right,#a8a8a8 0 1px,transparent 1px 2px)"></div>
<svg style="left:1629px;top:560.5px;" width="12" height="12" viewBox="0 0 12 12"><path d="M6 0.5V11.5M0.5 6H11.5" stroke="#1a8a1a" stroke-width="1.3" stroke-dasharray="1.3 1"/><path d="M3 3H9V9H3z" fill="#f3c020"/><path d="M3 4Q6 1 9 4V8Q6 11 3 8z" fill="#f8d040" stroke="#c89010" stroke-width="0.5"/></svg>
<div class="t" style="left:1647.00px;top:562.03px;font-size:9.3px;color:#111;transform:scaleX(0.9296);">Ригель Б48-1</div>
<svg style="left:1873px;top:562.5px;" width="13" height="9" viewBox="0 0 13 9"><path d="M0.5 4.5Q6.5 -1.5 12.5 4.5Q6.5 10.5 0.5 4.5z" fill="#e8eee8" stroke="#555" stroke-width="0.9"/><circle cx="6.5" cy="4.5" r="2.6" fill="#3aa050"/><circle cx="6.5" cy="4.5" r="1" fill="#111"/></svg>
<svg style="left:1888px;top:560.5px;" width="11" height="12" viewBox="0 0 11 12"><circle cx="4" cy="4" r="3.3" fill="#fafafa" stroke="#bbb" stroke-width="0.9"/><path d="M6.5 6.5L10 10.5" stroke="#d08040" stroke-width="1.6"/></svg>
<svg style="left:1617px;top:574.8px;" width="9" height="9" viewBox="0 0 9 9"><rect x="0.5" y="0.5" width="8" height="8" fill="#f4f4f4" stroke="#a0a0a0" stroke-width="0.8"/><path d="M2 4.5H7" stroke="#3a4aa0" stroke-width="1"/><path d="M4.5 2V7" stroke="#3a4aa0" stroke-width="1"/></svg>
<div class="a" style="left:1626px;top:579px;width:3px;height:1px;background:repeating-linear-gradient(to right,#a8a8a8 0 1px,transparent 1px 2px)"></div>
<svg style="left:1629px;top:573.3px;" width="12" height="12" viewBox="0 0 12 12"><path d="M6 0.5V11.5M0.5 6H11.5" stroke="#1a8a1a" stroke-width="1.3" stroke-dasharray="1.3 1"/><path d="M3 3H9V9H3z" fill="#f3c020"/><path d="M3 4Q6 1 9 4V8Q6 11 3 8z" fill="#f8d040" stroke="#c89010" stroke-width="0.5"/></svg>
<div class="t" style="left:1647.00px;top:574.83px;font-size:9.3px;color:#111;transform:scaleX(0.9296);">Ригель Б48-1</div>
<svg style="left:1873px;top:575.3px;" width="13" height="9" viewBox="0 0 13 9"><path d="M0.5 4.5Q6.5 -1.5 12.5 4.5Q6.5 10.5 0.5 4.5z" fill="#e8eee8" stroke="#555" stroke-width="0.9"/><circle cx="6.5" cy="4.5" r="2.6" fill="#3aa050"/><circle cx="6.5" cy="4.5" r="1" fill="#111"/></svg>
<svg style="left:1888px;top:573.3px;" width="11" height="12" viewBox="0 0 11 12"><circle cx="4" cy="4" r="3.3" fill="#fafafa" stroke="#bbb" stroke-width="0.9"/><path d="M6.5 6.5L10 10.5" stroke="#d08040" stroke-width="1.6"/></svg>
<svg style="left:1617px;top:587.6px;" width="9" height="9" viewBox="0 0 9 9"><rect x="0.5" y="0.5" width="8" height="8" fill="#f4f4f4" stroke="#a0a0a0" stroke-width="0.8"/><path d="M2 4.5H7" stroke="#3a4aa0" stroke-width="1"/><path d="M4.5 2V7" stroke="#3a4aa0" stroke-width="1"/></svg>
<div class="a" style="left:1626px;top:592px;width:3px;height:1px;background:repeating-linear-gradient(to right,#a8a8a8 0 1px,transparent 1px 2px)"></div>
<svg style="left:1629px;top:586.1px;" width="12" height="12" viewBox="0 0 12 12"><path d="M6 0.5V11.5M0.5 6H11.5" stroke="#1a8a1a" stroke-width="1.3" stroke-dasharray="1.3 1"/><path d="M3 3H9V9H3z" fill="#f3c020"/><path d="M3 4Q6 1 9 4V8Q6 11 3 8z" fill="#f8d040" stroke="#c89010" stroke-width="0.5"/></svg>
<div class="t" style="left:1647.00px;top:587.63px;font-size:9.3px;color:#111;transform:scaleX(0.9296);">Ригель Б48-1</div>
<svg style="left:1873px;top:588.1px;" width="13" height="9" viewBox="0 0 13 9"><path d="M0.5 4.5Q6.5 -1.5 12.5 4.5Q6.5 10.5 0.5 4.5z" fill="#e8eee8" stroke="#555" stroke-width="0.9"/><circle cx="6.5" cy="4.5" r="2.6" fill="#3aa050"/><circle cx="6.5" cy="4.5" r="1" fill="#111"/></svg>
<svg style="left:1888px;top:586.1px;" width="11" height="12" viewBox="0 0 11 12"><circle cx="4" cy="4" r="3.3" fill="#fafafa" stroke="#bbb" stroke-width="0.9"/><path d="M6.5 6.5L10 10.5" stroke="#d08040" stroke-width="1.6"/></svg>
<svg style="left:1617px;top:600.4px;" width="9" height="9" viewBox="0 0 9 9"><rect x="0.5" y="0.5" width="8" height="8" fill="#f4f4f4" stroke="#a0a0a0" stroke-width="0.8"/><path d="M2 4.5H7" stroke="#3a4aa0" stroke-width="1"/><path d="M4.5 2V7" stroke="#3a4aa0" stroke-width="1"/></svg>
<div class="a" style="left:1626px;top:605px;width:3px;height:1px;background:repeating-linear-gradient(to right,#a8a8a8 0 1px,transparent 1px 2px)"></div>
<svg style="left:1629px;top:598.9px;" width="12" height="12" viewBox="0 0 12 12"><path d="M6 0.5V11.5M0.5 6H11.5" stroke="#1a8a1a" stroke-width="1.3" stroke-dasharray="1.3 1"/><path d="M3 3H9V9H3z" fill="#f3c020"/><path d="M3 4Q6 1 9 4V8Q6 11 3 8z" fill="#f8d040" stroke="#c89010" stroke-width="0.5"/></svg>
<div class="t" style="left:1647.00px;top:600.43px;font-size:9.3px;color:#111;transform:scaleX(0.9296);">Ригель Б48-1</div>
<svg style="left:1873px;top:600.9px;" width="13" height="9" viewBox="0 0 13 9"><path d="M0.5 4.5Q6.5 -1.5 12.5 4.5Q6.5 10.5 0.5 4.5z" fill="#e8eee8" stroke="#555" stroke-width="0.9"/><circle cx="6.5" cy="4.5" r="2.6" fill="#3aa050"/><circle cx="6.5" cy="4.5" r="1" fill="#111"/></svg>
<svg style="left:1888px;top:598.9px;" width="11" height="12" viewBox="0 0 11 12"><circle cx="4" cy="4" r="3.3" fill="#fafafa" stroke="#bbb" stroke-width="0.9"/><path d="M6.5 6.5L10 10.5" stroke="#d08040" stroke-width="1.6"/></svg>
<svg style="left:1617px;top:613.2px;" width="9" height="9" viewBox="0 0 9 9"><rect x="0.5" y="0.5" width="8" height="8" fill="#f4f4f4" stroke="#a0a0a0" stroke-width="0.8"/><path d="M2 4.5H7" stroke="#3a4aa0" stroke-width="1"/><path d="M4.5 2V7" stroke="#3a4aa0" stroke-width="1"/></svg>
<div class="a" style="left:1626px;top:618px;width:3px;height:1px;background:repeating-linear-gradient(to right,#a8a8a8 0 1px,transparent 1px 2px)"></div>
<svg style="left:1629px;top:611.7px;" width="12" height="12" viewBox="0 0 12 12"><path d="M6 0.5V11.5M0.5 6H11.5" stroke="#1a8a1a" stroke-width="1.3" stroke-dasharray="1.3 1"/><path d="M3 3H9V9H3z" fill="#f3c020"/><path d="M3 4Q6 1 9 4V8Q6 11 3 8z" fill="#f8d040" stroke="#c89010" stroke-width="0.5"/></svg>
<div class="t" style="left:1647.00px;top:613.23px;font-size:9.3px;color:#111;transform:scaleX(0.9296);">Ригель Б48-1</div>
<svg style="left:1873px;top:613.7px;" width="13" height="9" viewBox="0 0 13 9"><path d="M0.5 4.5Q6.5 -1.5 12.5 4.5Q6.5 10.5 0.5 4.5z" fill="#e8eee8" stroke="#555" stroke-width="0.9"/><circle cx="6.5" cy="4.5" r="2.6" fill="#3aa050"/><circle cx="6.5" cy="4.5" r="1" fill="#111"/></svg>
<svg style="left:1888px;top:611.7px;" width="11" height="12" viewBox="0 0 11 12"><circle cx="4" cy="4" r="3.3" fill="#fafafa" stroke="#bbb" stroke-width="0.9"/><path d="M6.5 6.5L10 10.5" stroke="#d08040" stroke-width="1.6"/></svg>
<svg style="left:1617px;top:626.0px;" width="9" height="9" viewBox="0 0 9 9"><rect x="0.5" y="0.5" width="8" height="8" fill="#f4f4f4" stroke="#a0a0a0" stroke-width="0.8"/><path d="M2 4.5H7" stroke="#3a4aa0" stroke-width="1"/><path d="M4.5 2V7" stroke="#3a4aa0" stroke-width="1"/></svg>
<div class="a" style="left:1626px;top:630px;width:3px;height:1px;background:repeating-linear-gradient(to right,#a8a8a8 0 1px,transparent 1px 2px)"></div>
<svg style="left:1629px;top:624.5px;" width="12" height="12" viewBox="0 0 12 12"><path d="M6 0.5V11.5M0.5 6H11.5" stroke="#1a8a1a" stroke-width="1.3" stroke-dasharray="1.3 1"/><path d="M3 3H9V9H3z" fill="#f3c020"/><path d="M3 4Q6 1 9 4V8Q6 11 3 8z" fill="#f8d040" stroke="#c89010" stroke-width="0.5"/></svg>
<div class="t" style="left:1647.00px;top:626.03px;font-size:9.3px;color:#111;transform:scaleX(0.9296);">Ригель Б48-1</div>
<svg style="left:1873px;top:626.5px;" width="13" height="9" viewBox="0 0 13 9"><path d="M0.5 4.5Q6.5 -1.5 12.5 4.5Q6.5 10.5 0.5 4.5z" fill="#e8eee8" stroke="#555" stroke-width="0.9"/><circle cx="6.5" cy="4.5" r="2.6" fill="#3aa050"/><circle cx="6.5" cy="4.5" r="1" fill="#111"/></svg>
<svg style="left:1888px;top:624.5px;" width="11" height="12" viewBox="0 0 11 12"><circle cx="4" cy="4" r="3.3" fill="#fafafa" stroke="#bbb" stroke-width="0.9"/><path d="M6.5 6.5L10 10.5" stroke="#d08040" stroke-width="1.6"/></svg>
<svg style="left:1617px;top:638.8px;" width="9" height="9" viewBox="0 0 9 9"><rect x="0.5" y="0.5" width="8" height="8" fill="#f4f4f4" stroke="#a0a0a0" stroke-width="0.8"/><path d="M2 4.5H7" stroke="#3a4aa0" stroke-width="1"/><path d="M4.5 2V7" stroke="#3a4aa0" stroke-width="1"/></svg>
<div class="a" style="left:1626px;top:643px;width:3px;height:1px;background:repeating-linear-gradient(to right,#a8a8a8 0 1px,transparent 1px 2px)"></div>
<svg style="left:1629px;top:637.3px;" width="12" height="12" viewBox="0 0 12 12"><path d="M6 0.5V11.5M0.5 6H11.5" stroke="#1a8a1a" stroke-width="1.3" stroke-dasharray="1.3 1"/><path d="M3 3H9V9H3z" fill="#f3c020"/><path d="M3 4Q6 1 9 4V8Q6 11 3 8z" fill="#f8d040" stroke="#c89010" stroke-width="0.5"/></svg>
<div class="t" style="left:1647.00px;top:638.83px;font-size:9.3px;color:#111;transform:scaleX(0.9296);">Ригель Б48-1</div>
<svg style="left:1873px;top:639.3px;" width="13" height="9" viewBox="0 0 13 9"><path d="M0.5 4.5Q6.5 -1.5 12.5 4.5Q6.5 10.5 0.5 4.5z" fill="#e8eee8" stroke="#555" stroke-width="0.9"/><circle cx="6.5" cy="4.5" r="2.6" fill="#3aa050"/><circle cx="6.5" cy="4.5" r="1" fill="#111"/></svg>
<svg style="left:1888px;top:637.3px;" width="11" height="12" viewBox="0 0 11 12"><circle cx="4" cy="4" r="3.3" fill="#fafafa" stroke="#bbb" stroke-width="0.9"/><path d="M6.5 6.5L10 10.5" stroke="#d08040" stroke-width="1.6"/></svg>
<svg style="left:1617px;top:651.6px;" width="9" height="9" viewBox="0 0 9 9"><rect x="0.5" y="0.5" width="8" height="8" fill="#f4f4f4" stroke="#a0a0a0" stroke-width="0.8"/><path d="M2 4.5H7" stroke="#3a4aa0" stroke-width="1"/><path d="M4.5 2V7" stroke="#3a4aa0" stroke-width="1"/></svg>
<div class="a" style="left:1626px;top:656px;width:3px;height:1px;background:repeating-linear-gradient(to right,#a8a8a8 0 1px,transparent 1px 2px)"></div>
<svg style="left:1629px;top:650.1px;" width="12" height="12" viewBox="0 0 12 12"><path d="M6 0.5V11.5M0.5 6H11.5" stroke="#1a8a1a" stroke-width="1.3" stroke-dasharray="1.3 1"/><path d="M3 3H9V9H3z" fill="#f3c020"/><path d="M3 4Q6 1 9 4V8Q6 11 3 8z" fill="#f8d040" stroke="#c89010" stroke-width="0.5"/></svg>
<div class="t" style="left:1647.00px;top:651.63px;font-size:9.3px;color:#111;transform:scaleX(0.9296);">Ригель Б48-1</div>
<svg style="left:1873px;top:652.1px;" width="13" height="9" viewBox="0 0 13 9"><path d="M0.5 4.5Q6.5 -1.5 12.5 4.5Q6.5 10.5 0.5 4.5z" fill="#e8eee8" stroke="#555" stroke-width="0.9"/><circle cx="6.5" cy="4.5" r="2.6" fill="#3aa050"/><circle cx="6.5" cy="4.5" r="1" fill="#111"/></svg>
<svg style="left:1888px;top:650.1px;" width="11" height="12" viewBox="0 0 11 12"><circle cx="4" cy="4" r="3.3" fill="#fafafa" stroke="#bbb" stroke-width="0.9"/><path d="M6.5 6.5L10 10.5" stroke="#d08040" stroke-width="1.6"/></svg>
<svg style="left:1617px;top:664.4px;" width="9" height="9" viewBox="0 0 9 9"><rect x="0.5" y="0.5" width="8" height="8" fill="#f4f4f4" stroke="#a0a0a0" stroke-width="0.8"/><path d="M2 4.5H7" stroke="#3a4aa0" stroke-width="1"/><path d="M4.5 2V7" stroke="#3a4aa0" stroke-width="1"/></svg>
<div class="a" style="left:1626px;top:669px;width:3px;height:1px;background:repeating-linear-gradient(to right,#a8a8a8 0 1px,transparent 1px 2px)"></div>
<svg style="left:1629px;top:662.9px;" width="12" height="12" viewBox="0 0 12 12"><path d="M6 0.5V11.5M0.5 6H11.5" stroke="#1a8a1a" stroke-width="1.3" stroke-dasharray="1.3 1"/><path d="M3 3H9V9H3z" fill="#f3c020"/><path d="M3 4Q6 1 9 4V8Q6 11 3 8z" fill="#f8d040" stroke="#c89010" stroke-width="0.5"/></svg>
<div class="t" style="left:1647.00px;top:664.43px;font-size:9.3px;color:#111;transform:scaleX(0.9296);">Ригель Б48-1</div>
<svg style="left:1873px;top:664.9px;" width="13" height="9" viewBox="0 0 13 9"><path d="M0.5 4.5Q6.5 -1.5 12.5 4.5Q6.5 10.5 0.5 4.5z" fill="#e8eee8" stroke="#555" stroke-width="0.9"/><circle cx="6.5" cy="4.5" r="2.6" fill="#3aa050"/><circle cx="6.5" cy="4.5" r="1" fill="#111"/></svg>
<svg style="left:1888px;top:662.9px;" width="11" height="12" viewBox="0 0 11 12"><circle cx="4" cy="4" r="3.3" fill="#fafafa" stroke="#bbb" stroke-width="0.9"/><path d="M6.5 6.5L10 10.5" stroke="#d08040" stroke-width="1.6"/></svg>
<svg style="left:1617px;top:677.2px;" width="9" height="9" viewBox="0 0 9 9"><rect x="0.5" y="0.5" width="8" height="8" fill="#f4f4f4" stroke="#a0a0a0" stroke-width="0.8"/><path d="M2 4.5H7" stroke="#3a4aa0" stroke-width="1"/><path d="M4.5 2V7" stroke="#3a4aa0" stroke-width="1"/></svg>
<div class="a" style="left:1626px;top:682px;width:3px;height:1px;background:repeating-linear-gradient(to right,#a8a8a8 0 1px,transparent 1px 2px)"></div>
<svg style="left:1629px;top:675.7px;" width="12" height="12" viewBox="0 0 12 12"><path d="M6 0.5V11.5M0.5 6H11.5" stroke="#1a8a1a" stroke-width="1.3" stroke-dasharray="1.3 1"/><path d="M3 3H9V9H3z" fill="#f3c020"/><path d="M3 4Q6 1 9 4V8Q6 11 3 8z" fill="#f8d040" stroke="#c89010" stroke-width="0.5"/></svg>
<div class="t" style="left:1647.00px;top:677.23px;font-size:9.3px;color:#111;transform:scaleX(0.9296);">Ригель Б48-1</div>
<svg style="left:1873px;top:677.7px;" width="13" height="9" viewBox="0 0 13 9"><path d="M0.5 4.5Q6.5 -1.5 12.5 4.5Q6.5 10.5 0.5 4.5z" fill="#e8eee8" stroke="#555" stroke-width="0.9"/><circle cx="6.5" cy="4.5" r="2.6" fill="#3aa050"/><circle cx="6.5" cy="4.5" r="1" fill="#111"/></svg>
<svg style="left:1888px;top:675.7px;" width="11" height="12" viewBox="0 0 11 12"><circle cx="4" cy="4" r="3.3" fill="#fafafa" stroke="#bbb" stroke-width="0.9"/><path d="M6.5 6.5L10 10.5" stroke="#d08040" stroke-width="1.6"/></svg>
<svg style="left:1617px;top:690.0px;" width="9" height="9" viewBox="0 0 9 9"><rect x="0.5" y="0.5" width="8" height="8" fill="#f4f4f4" stroke="#a0a0a0" stroke-width="0.8"/><path d="M2 4.5H7" stroke="#3a4aa0" stroke-width="1"/><path d="M4.5 2V7" stroke="#3a4aa0" stroke-width="1"/></svg>
<div class="a" style="left:1626px;top:694px;width:3px;height:1px;background:repeating-linear-gradient(to right,#a8a8a8 0 1px,transparent 1px 2px)"></div>
<svg style="left:1629px;top:688.5px;" width="12" height="12" viewBox="0 0 12 12"><path d="M6 0.5V11.5M0.5 6H11.5" stroke="#1a8a1a" stroke-width="1.3" stroke-dasharray="1.3 1"/><path d="M3 3H9V9H3z" fill="#f3c020"/><path d="M3 4Q6 1 9 4V8Q6 11 3 8z" fill="#f8d040" stroke="#c89010" stroke-width="0.5"/></svg>
<div class="t" style="left:1647.00px;top:690.03px;font-size:9.3px;color:#111;transform:scaleX(0.9296);">Ригель Б48-1</div>
<svg style="left:1873px;top:690.5px;" width="13" height="9" viewBox="0 0 13 9"><path d="M0.5 4.5Q6.5 -1.5 12.5 4.5Q6.5 10.5 0.5 4.5z" fill="#e8eee8" stroke="#555" stroke-width="0.9"/><circle cx="6.5" cy="4.5" r="2.6" fill="#3aa050"/><circle cx="6.5" cy="4.5" r="1" fill="#111"/></svg>
<svg style="left:1888px;top:688.5px;" width="11" height="12" viewBox="0 0 11 12"><circle cx="4" cy="4" r="3.3" fill="#fafafa" stroke="#bbb" stroke-width="0.9"/><path d="M6.5 6.5L10 10.5" stroke="#d08040" stroke-width="1.6"/></svg>
<svg style="left:1617px;top:702.8px;" width="9" height="9" viewBox="0 0 9 9"><rect x="0.5" y="0.5" width="8" height="8" fill="#f4f4f4" stroke="#a0a0a0" stroke-width="0.8"/><path d="M2 4.5H7" stroke="#3a4aa0" stroke-width="1"/><path d="M4.5 2V7" stroke="#3a4aa0" stroke-width="1"/></svg>
<div class="a" style="left:1626px;top:707px;width:3px;height:1px;background:repeating-linear-gradient(to right,#a8a8a8 0 1px,transparent 1px 2px)"></div>
<svg style="left:1629px;top:701.3px;" width="12" height="12" viewBox="0 0 12 12"><path d="M6 0.5V11.5M0.5 6H11.5" stroke="#1a8a1a" stroke-width="1.3" stroke-dasharray="1.3 1"/><path d="M3 3H9V9H3z" fill="#f3c020"/><path d="M3 4Q6 1 9 4V8Q6 11 3 8z" fill="#f8d040" stroke="#c89010" stroke-width="0.5"/></svg>
<div class="t" style="left:1647.00px;top:702.83px;font-size:9.3px;color:#111;transform:scaleX(0.9296);">Ригель Б48-1</div>
<svg style="left:1873px;top:703.3px;" width="13" height="9" viewBox="0 0 13 9"><path d="M0.5 4.5Q6.5 -1.5 12.5 4.5Q6.5 10.5 0.5 4.5z" fill="#e8eee8" stroke="#555" stroke-width="0.9"/><circle cx="6.5" cy="4.5" r="2.6" fill="#3aa050"/><circle cx="6.5" cy="4.5" r="1" fill="#111"/></svg>
<svg style="left:1888px;top:701.3px;" width="11" height="12" viewBox="0 0 11 12"><circle cx="4" cy="4" r="3.3" fill="#fafafa" stroke="#bbb" stroke-width="0.9"/><path d="M6.5 6.5L10 10.5" stroke="#d08040" stroke-width="1.6"/></svg>
<svg style="left:1617px;top:715.6px;" width="9" height="9" viewBox="0 0 9 9"><rect x="0.5" y="0.5" width="8" height="8" fill="#f4f4f4" stroke="#a0a0a0" stroke-width="0.8"/><path d="M2 4.5H7" stroke="#3a4aa0" stroke-width="1"/><path d="M4.5 2V7" stroke="#3a4aa0" stroke-width="1"/></svg>
<div class="a" style="left:1626px;top:720px;width:3px;height:1px;background:repeating-linear-gradient(to right,#a8a8a8 0 1px,transparent 1px 2px)"></div>
<svg style="left:1629px;top:714.1px;" width="12" height="12" viewBox="0 0 12 12"><path d="M6 0.5V11.5M0.5 6H11.5" stroke="#1a8a1a" stroke-width="1.3" stroke-dasharray="1.3 1"/><path d="M3 3H9V9H3z" fill="#f3c020"/><path d="M3 4Q6 1 9 4V8Q6 11 3 8z" fill="#f8d040" stroke="#c89010" stroke-width="0.5"/></svg>
<div class="t" style="left:1647.00px;top:715.63px;font-size:9.3px;color:#111;transform:scaleX(0.9296);">Ригель Б48-1</div>
<svg style="left:1873px;top:716.1px;" width="13" height="9" viewBox="0 0 13 9"><path d="M0.5 4.5Q6.5 -1.5 12.5 4.5Q6.5 10.5 0.5 4.5z" fill="#e8eee8" stroke="#555" stroke-width="0.9"/><circle cx="6.5" cy="4.5" r="2.6" fill="#3aa050"/><circle cx="6.5" cy="4.5" r="1" fill="#111"/></svg>
<svg style="left:1888px;top:714.1px;" width="11" height="12" viewBox="0 0 11 12"><circle cx="4" cy="4" r="3.3" fill="#fafafa" stroke="#bbb" stroke-width="0.9"/><path d="M6.5 6.5L10 10.5" stroke="#d08040" stroke-width="1.6"/></svg>
<svg style="left:1617px;top:728.4px;" width="9" height="9" viewBox="0 0 9 9"><rect x="0.5" y="0.5" width="8" height="8" fill="#f4f4f4" stroke="#a0a0a0" stroke-width="0.8"/><path d="M2 4.5H7" stroke="#3a4aa0" stroke-width="1"/><path d="M4.5 2V7" stroke="#3a4aa0" stroke-width="1"/></svg>
<div class="a" style="left:1626px;top:733px;width:3px;height:1px;background:repeating-linear-gradient(to right,#a8a8a8 0 1px,transparent 1px 2px)"></div>
<svg style="left:1629px;top:726.9px;" width="12" height="12" viewBox="0 0 12 12"><path d="M6 0.5V11.5M0.5 6H11.5" stroke="#1a8a1a" stroke-width="1.3" stroke-dasharray="1.3 1"/><path d="M3 3H9V9H3z" fill="#f3c020"/><path d="M3 4Q6 1 9 4V8Q6 11 3 8z" fill="#f8d040" stroke="#c89010" stroke-width="0.5"/></svg>
<div class="t" style="left:1647.00px;top:728.43px;font-size:9.3px;color:#111;transform:scaleX(0.9296);">Ригель Б48-1</div>
<svg style="left:1873px;top:728.9px;" width="13" height="9" viewBox="0 0 13 9"><path d="M0.5 4.5Q6.5 -1.5 12.5 4.5Q6.5 10.5 0.5 4.5z" fill="#e8eee8" stroke="#555" stroke-width="0.9"/><circle cx="6.5" cy="4.5" r="2.6" fill="#3aa050"/><circle cx="6.5" cy="4.5" r="1" fill="#111"/></svg>
<svg style="left:1888px;top:726.9px;" width="11" height="12" viewBox="0 0 11 12"><circle cx="4" cy="4" r="3.3" fill="#fafafa" stroke="#bbb" stroke-width="0.9"/><path d="M6.5 6.5L10 10.5" stroke="#d08040" stroke-width="1.6"/></svg>
<svg style="left:1617px;top:741.2px;" width="9" height="9" viewBox="0 0 9 9"><rect x="0.5" y="0.5" width="8" height="8" fill="#f4f4f4" stroke="#a0a0a0" stroke-width="0.8"/><path d="M2 4.5H7" stroke="#3a4aa0" stroke-width="1"/><path d="M4.5 2V7" stroke="#3a4aa0" stroke-width="1"/></svg>
<div class="a" style="left:1626px;top:746px;width:3px;height:1px;background:repeating-linear-gradient(to right,#a8a8a8 0 1px,transparent 1px 2px)"></div>
<svg style="left:1629px;top:739.7px;" width="12" height="12" viewBox="0 0 12 12"><path d="M6 0.5V11.5M0.5 6H11.5" stroke="#1a8a1a" stroke-width="1.3" stroke-dasharray="1.3 1"/><path d="M3 3H9V9H3z" fill="#f3c020"/><path d="M3 4Q6 1 9 4V8Q6 11 3 8z" fill="#f8d040" stroke="#c89010" stroke-width="0.5"/></svg>
<div class="t" style="left:1647.00px;top:741.23px;font-size:9.3px;color:#111;transform:scaleX(0.9296);">Ригель Б48-1</div>
<svg style="left:1873px;top:741.7px;" width="13" height="9" viewBox="0 0 13 9"><path d="M0.5 4.5Q6.5 -1.5 12.5 4.5Q6.5 10.5 0.5 4.5z" fill="#e8eee8" stroke="#555" stroke-width="0.9"/><circle cx="6.5" cy="4.5" r="2.6" fill="#3aa050"/><circle cx="6.5" cy="4.5" r="1" fill="#111"/></svg>
<svg style="left:1888px;top:739.7px;" width="11" height="12" viewBox="0 0 11 12"><circle cx="4" cy="4" r="3.3" fill="#fafafa" stroke="#bbb" stroke-width="0.9"/><path d="M6.5 6.5L10 10.5" stroke="#d08040" stroke-width="1.6"/></svg>
<svg style="left:1617px;top:754.0px;" width="9" height="9" viewBox="0 0 9 9"><rect x="0.5" y="0.5" width="8" height="8" fill="#f4f4f4" stroke="#a0a0a0" stroke-width="0.8"/><path d="M2 4.5H7" stroke="#3a4aa0" stroke-width="1"/><path d="M4.5 2V7" stroke="#3a4aa0" stroke-width="1"/></svg>
<div class="a" style="left:1626px;top:758px;width:3px;height:1px;background:repeating-linear-gradient(to right,#a8a8a8 0 1px,transparent 1px 2px)"></div>
<svg style="left:1629px;top:752.5px;" width="12" height="12" viewBox="0 0 12 12"><path d="M6 0.5V11.5M0.5 6H11.5" stroke="#1a8a1a" stroke-width="1.3" stroke-dasharray="1.3 1"/><path d="M3 3H9V9H3z" fill="#f3c020"/><path d="M3 4Q6 1 9 4V8Q6 11 3 8z" fill="#f8d040" stroke="#c89010" stroke-width="0.5"/></svg>
<div class="t" style="left:1647.00px;top:754.03px;font-size:9.3px;color:#111;transform:scaleX(0.9296);">Ригель Б48-1</div>
<svg style="left:1873px;top:754.5px;" width="13" height="9" viewBox="0 0 13 9"><path d="M0.5 4.5Q6.5 -1.5 12.5 4.5Q6.5 10.5 0.5 4.5z" fill="#e8eee8" stroke="#555" stroke-width="0.9"/><circle cx="6.5" cy="4.5" r="2.6" fill="#3aa050"/><circle cx="6.5" cy="4.5" r="1" fill="#111"/></svg>
<svg style="left:1888px;top:752.5px;" width="11" height="12" viewBox="0 0 11 12"><circle cx="4" cy="4" r="3.3" fill="#fafafa" stroke="#bbb" stroke-width="0.9"/><path d="M6.5 6.5L10 10.5" stroke="#d08040" stroke-width="1.6"/></svg>
<svg style="left:1617px;top:766.8px;" width="9" height="9" viewBox="0 0 9 9"><rect x="0.5" y="0.5" width="8" height="8" fill="#f4f4f4" stroke="#a0a0a0" stroke-width="0.8"/><path d="M2 4.5H7" stroke="#3a4aa0" stroke-width="1"/><path d="M4.5 2V7" stroke="#3a4aa0" stroke-width="1"/></svg>
<div class="a" style="left:1626px;top:771px;width:3px;height:1px;background:repeating-linear-gradient(to right,#a8a8a8 0 1px,transparent 1px 2px)"></div>
<svg style="left:1629px;top:765.3px;" width="12" height="12" viewBox="0 0 12 12"><path d="M6 0.5V11.5M0.5 6H11.5" stroke="#1a8a1a" stroke-width="1.3" stroke-dasharray="1.3 1"/><path d="M3 3H9V9H3z" fill="#f3c020"/><path d="M3 4Q6 1 9 4V8Q6 11 3 8z" fill="#f8d040" stroke="#c89010" stroke-width="0.5"/></svg>
<div class="t" style="left:1647.00px;top:766.83px;font-size:9.3px;color:#111;transform:scaleX(0.9296);">Ригель Б48-1</div>
<svg style="left:1873px;top:767.3px;" width="13" height="9" viewBox="0 0 13 9"><path d="M0.5 4.5Q6.5 -1.5 12.5 4.5Q6.5 10.5 0.5 4.5z" fill="#e8eee8" stroke="#555" stroke-width="0.9"/><circle cx="6.5" cy="4.5" r="2.6" fill="#3aa050"/><circle cx="6.5" cy="4.5" r="1" fill="#111"/></svg>
<svg style="left:1888px;top:765.3px;" width="11" height="12" viewBox="0 0 11 12"><circle cx="4" cy="4" r="3.3" fill="#fafafa" stroke="#bbb" stroke-width="0.9"/><path d="M6.5 6.5L10 10.5" stroke="#d08040" stroke-width="1.6"/></svg>
<svg style="left:1617px;top:779.6px;" width="9" height="9" viewBox="0 0 9 9"><rect x="0.5" y="0.5" width="8" height="8" fill="#f4f4f4" stroke="#a0a0a0" stroke-width="0.8"/><path d="M2 4.5H7" stroke="#3a4aa0" stroke-width="1"/><path d="M4.5 2V7" stroke="#3a4aa0" stroke-width="1"/></svg>
<div class="a" style="left:1626px;top:784px;width:3px;height:1px;background:repeating-linear-gradient(to right,#a8a8a8 0 1px,transparent 1px 2px)"></div>
<svg style="left:1629px;top:778.1px;" width="12" height="12" viewBox="0 0 12 12"><path d="M6 0.5V11.5M0.5 6H11.5" stroke="#1a8a1a" stroke-width="1.3" stroke-dasharray="1.3 1"/><path d="M3 3H9V9H3z" fill="#f3c020"/><path d="M3 4Q6 1 9 4V8Q6 11 3 8z" fill="#f8d040" stroke="#c89010" stroke-width="0.5"/></svg>
<div class="t" style="left:1647.00px;top:779.63px;font-size:9.3px;color:#111;transform:scaleX(0.9296);">Ригель Б48-1</div>
<svg style="left:1873px;top:780.1px;" width="13" height="9" viewBox="0 0 13 9"><path d="M0.5 4.5Q6.5 -1.5 12.5 4.5Q6.5 10.5 0.5 4.5z" fill="#e8eee8" stroke="#555" stroke-width="0.9"/><circle cx="6.5" cy="4.5" r="2.6" fill="#3aa050"/><circle cx="6.5" cy="4.5" r="1" fill="#111"/></svg>
<svg style="left:1888px;top:778.1px;" width="11" height="12" viewBox="0 0 11 12"><circle cx="4" cy="4" r="3.3" fill="#fafafa" stroke="#bbb" stroke-width="0.9"/><path d="M6.5 6.5L10 10.5" stroke="#d08040" stroke-width="1.6"/></svg>
<svg style="left:1617px;top:792.4000000000001px;" width="9" height="9" viewBox="0 0 9 9"><rect x="0.5" y="0.5" width="8" height="8" fill="#f4f4f4" stroke="#a0a0a0" stroke-width="0.8"/><path d="M2 4.5H7" stroke="#3a4aa0" stroke-width="1"/><path d="M4.5 2V7" stroke="#3a4aa0" stroke-width="1"/></svg>
<div class="a" style="left:1626px;top:797px;width:3px;height:1px;background:repeating-linear-gradient(to right,#a8a8a8 0 1px,transparent 1px 2px)"></div>
<svg style="left:1629px;top:790.9000000000001px;" width="12" height="12" viewBox="0 0 12 12"><path d="M6 0.5V11.5M0.5 6H11.5" stroke="#1a8a1a" stroke-width="1.3" stroke-dasharray="1.3 1"/><path d="M3 3H9V9H3z" fill="#f3c020"/><path d="M3 4Q6 1 9 4V8Q6 11 3 8z" fill="#f8d040" stroke="#c89010" stroke-width="0.5"/></svg>
<div class="t" style="left:1647.00px;top:792.43px;font-size:9.3px;color:#111;transform:scaleX(0.9296);">Ригель Б48-1</div>
<svg style="left:1873px;top:792.9000000000001px;" width="13" height="9" viewBox="0 0 13 9"><path d="M0.5 4.5Q6.5 -1.5 12.5 4.5Q6.5 10.5 0.5 4.5z" fill="#e8eee8" stroke="#555" stroke-width="0.9"/><circle cx="6.5" cy="4.5" r="2.6" fill="#3aa050"/><circle cx="6.5" cy="4.5" r="1" fill="#111"/></svg>
<svg style="left:1888px;top:790.9000000000001px;" width="11" height="12" viewBox="0 0 11 12"><circle cx="4" cy="4" r="3.3" fill="#fafafa" stroke="#bbb" stroke-width="0.9"/><path d="M6.5 6.5L10 10.5" stroke="#d08040" stroke-width="1.6"/></svg>
<svg style="left:1617px;top:805.2px;" width="9" height="9" viewBox="0 0 9 9"><rect x="0.5" y="0.5" width="8" height="8" fill="#f4f4f4" stroke="#a0a0a0" stroke-width="0.8"/><path d="M2 4.5H7" stroke="#3a4aa0" stroke-width="1"/><path d="M4.5 2V7" stroke="#3a4aa0" stroke-width="1"/></svg>
<div class="a" style="left:1626px;top:810px;width:3px;height:1px;background:repeating-linear-gradient(to right,#a8a8a8 0 1px,transparent 1px 2px)"></div>
<svg style="left:1629px;top:803.7px;" width="12" height="12" viewBox="0 0 12 12"><path d="M6 0.5V11.5M0.5 6H11.5" stroke="#1a8a1a" stroke-width="1.3" stroke-dasharray="1.3 1"/><path d="M3 3H9V9H3z" fill="#f3c020"/><path d="M3 4Q6 1 9 4V8Q6 11 3 8z" fill="#f8d040" stroke="#c89010" stroke-width="0.5"/></svg>
<div class="t" style="left:1647.00px;top:805.23px;font-size:9.3px;color:#111;transform:scaleX(0.9296);">Ригель Б48-1</div>
<svg style="left:1873px;top:805.7px;" width="13" height="9" viewBox="0 0 13 9"><path d="M0.5 4.5Q6.5 -1.5 12.5 4.5Q6.5 10.5 0.5 4.5z" fill="#e8eee8" stroke="#555" stroke-width="0.9"/><circle cx="6.5" cy="4.5" r="2.6" fill="#3aa050"/><circle cx="6.5" cy="4.5" r="1" fill="#111"/></svg>
<svg style="left:1888px;top:803.7px;" width="11" height="12" viewBox="0 0 11 12"><circle cx="4" cy="4" r="3.3" fill="#fafafa" stroke="#bbb" stroke-width="0.9"/><path d="M6.5 6.5L10 10.5" stroke="#d08040" stroke-width="1.6"/></svg>
<svg style="left:1617px;top:818.0px;" width="9" height="9" viewBox="0 0 9 9"><rect x="0.5" y="0.5" width="8" height="8" fill="#f4f4f4" stroke="#a0a0a0" stroke-width="0.8"/><path d="M2 4.5H7" stroke="#3a4aa0" stroke-width="1"/><path d="M4.5 2V7" stroke="#3a4aa0" stroke-width="1"/></svg>
<div class="a" style="left:1626px;top:822px;width:3px;height:1px;background:repeating-linear-gradient(to right,#a8a8a8 0 1px,transparent 1px 2px)"></div>
<svg style="left:1629px;top:816.5px;" width="12" height="12" viewBox="0 0 12 12"><path d="M6 0.5V11.5M0.5 6H11.5" stroke="#1a8a1a" stroke-width="1.3" stroke-dasharray="1.3 1"/><path d="M3 3H9V9H3z" fill="#f3c020"/><path d="M3 4Q6 1 9 4V8Q6 11 3 8z" fill="#f8d040" stroke="#c89010" stroke-width="0.5"/></svg>
<div class="t" style="left:1647.00px;top:818.03px;font-size:9.3px;color:#111;transform:scaleX(0.9296);">Ригель Б48-1</div>
<svg style="left:1873px;top:818.5px;" width="13" height="9" viewBox="0 0 13 9"><path d="M0.5 4.5Q6.5 -1.5 12.5 4.5Q6.5 10.5 0.5 4.5z" fill="#e8eee8" stroke="#555" stroke-width="0.9"/><circle cx="6.5" cy="4.5" r="2.6" fill="#3aa050"/><circle cx="6.5" cy="4.5" r="1" fill="#111"/></svg>
<svg style="left:1888px;top:816.5px;" width="11" height="12" viewBox="0 0 11 12"><circle cx="4" cy="4" r="3.3" fill="#fafafa" stroke="#bbb" stroke-width="0.9"/><path d="M6.5 6.5L10 10.5" stroke="#d08040" stroke-width="1.6"/></svg>
<svg style="left:1617px;top:830.8px;" width="9" height="9" viewBox="0 0 9 9"><rect x="0.5" y="0.5" width="8" height="8" fill="#f4f4f4" stroke="#a0a0a0" stroke-width="0.8"/><path d="M2 4.5H7" stroke="#3a4aa0" stroke-width="1"/><path d="M4.5 2V7" stroke="#3a4aa0" stroke-width="1"/></svg>
<div class="a" style="left:1626px;top:835px;width:3px;height:1px;background:repeating-linear-gradient(to right,#a8a8a8 0 1px,transparent 1px 2px)"></div>
<svg style="left:1629px;top:829.3px;" width="12" height="12" viewBox="0 0 12 12"><path d="M6 0.5V11.5M0.5 6H11.5" stroke="#1a8a1a" stroke-width="1.3" stroke-dasharray="1.3 1"/><path d="M3 3H9V9H3z" fill="#f3c020"/><path d="M3 4Q6 1 9 4V8Q6 11 3 8z" fill="#f8d040" stroke="#c89010" stroke-width="0.5"/></svg>
<div class="t" style="left:1647.00px;top:830.83px;font-size:9.3px;color:#111;transform:scaleX(0.9296);">Ригель Б48-1</div>
<svg style="left:1873px;top:831.3px;" width="13" height="9" viewBox="0 0 13 9"><path d="M0.5 4.5Q6.5 -1.5 12.5 4.5Q6.5 10.5 0.5 4.5z" fill="#e8eee8" stroke="#555" stroke-width="0.9"/><circle cx="6.5" cy="4.5" r="2.6" fill="#3aa050"/><circle cx="6.5" cy="4.5" r="1" fill="#111"/></svg>
<svg style="left:1888px;top:829.3px;" width="11" height="12" viewBox="0 0 11 12"><circle cx="4" cy="4" r="3.3" fill="#fafafa" stroke="#bbb" stroke-width="0.9"/><path d="M6.5 6.5L10 10.5" stroke="#d08040" stroke-width="1.6"/></svg>
<svg style="left:1617px;top:843.6px;" width="9" height="9" viewBox="0 0 9 9"><rect x="0.5" y="0.5" width="8" height="8" fill="#f4f4f4" stroke="#a0a0a0" stroke-width="0.8"/><path d="M2 4.5H7" stroke="#3a4aa0" stroke-width="1"/><path d="M4.5 2V7" stroke="#3a4aa0" stroke-width="1"/></svg>
<div class="a" style="left:1626px;top:848px;width:3px;height:1px;background:repeating-linear-gradient(to right,#a8a8a8 0 1px,transparent 1px 2px)"></div>
<svg style="left:1629px;top:842.1px;" width="12" height="12" viewBox="0 0 12 12"><path d="M6 0.5V11.5M0.5 6H11.5" stroke="#1a8a1a" stroke-width="1.3" stroke-dasharray="1.3 1"/><path d="M3 3H9V9H3z" fill="#f3c020"/><path d="M3 4Q6 1 9 4V8Q6 11 3 8z" fill="#f8d040" stroke="#c89010" stroke-width="0.5"/></svg>
<div class="t" style="left:1647.00px;top:843.63px;font-size:9.3px;color:#111;transform:scaleX(0.9296);">Ригель Б48-1</div>
<svg style="left:1873px;top:844.1px;" width="13" height="9" viewBox="0 0 13 9"><path d="M0.5 4.5Q6.5 -1.5 12.5 4.5Q6.5 10.5 0.5 4.5z" fill="#e8eee8" stroke="#555" stroke-width="0.9"/><circle cx="6.5" cy="4.5" r="2.6" fill="#3aa050"/><circle cx="6.5" cy="4.5" r="1" fill="#111"/></svg>
<svg style="left:1888px;top:842.1px;" width="11" height="12" viewBox="0 0 11 12"><circle cx="4" cy="4" r="3.3" fill="#fafafa" stroke="#bbb" stroke-width="0.9"/><path d="M6.5 6.5L10 10.5" stroke="#d08040" stroke-width="1.6"/></svg>
<svg style="left:1617px;top:856.4000000000001px;" width="9" height="9" viewBox="0 0 9 9"><rect x="0.5" y="0.5" width="8" height="8" fill="#f4f4f4" stroke="#a0a0a0" stroke-width="0.8"/><path d="M2 4.5H7" stroke="#3a4aa0" stroke-width="1"/><path d="M4.5 2V7" stroke="#3a4aa0" stroke-width="1"/></svg>
<div class="a" style="left:1626px;top:861px;width:3px;height:1px;background:repeating-linear-gradient(to right,#a8a8a8 0 1px,transparent 1px 2px)"></div>
<svg style="left:1629px;top:854.9000000000001px;" width="12" height="12" viewBox="0 0 12 12"><path d="M6 0.5V11.5M0.5 6H11.5" stroke="#1a8a1a" stroke-width="1.3" stroke-dasharray="1.3 1"/><path d="M3 3H9V9H3z" fill="#f3c020"/><path d="M3 4Q6 1 9 4V8Q6 11 3 8z" fill="#f8d040" stroke="#c89010" stroke-width="0.5"/></svg>
<div class="t" style="left:1647.00px;top:856.43px;font-size:9.3px;color:#111;transform:scaleX(0.9296);">Ригель Б48-1</div>
<svg style="left:1873px;top:856.9000000000001px;" width="13" height="9" viewBox="0 0 13 9"><path d="M0.5 4.5Q6.5 -1.5 12.5 4.5Q6.5 10.5 0.5 4.5z" fill="#e8eee8" stroke="#555" stroke-width="0.9"/><circle cx="6.5" cy="4.5" r="2.6" fill="#3aa050"/><circle cx="6.5" cy="4.5" r="1" fill="#111"/></svg>
<svg style="left:1888px;top:854.9000000000001px;" width="11" height="12" viewBox="0 0 11 12"><circle cx="4" cy="4" r="3.3" fill="#fafafa" stroke="#bbb" stroke-width="0.9"/><path d="M6.5 6.5L10 10.5" stroke="#d08040" stroke-width="1.6"/></svg>
<svg style="left:1617px;top:869.2px;" width="9" height="9" viewBox="0 0 9 9"><rect x="0.5" y="0.5" width="8" height="8" fill="#f4f4f4" stroke="#a0a0a0" stroke-width="0.8"/><path d="M2 4.5H7" stroke="#3a4aa0" stroke-width="1"/><path d="M4.5 2V7" stroke="#3a4aa0" stroke-width="1"/></svg>
<div class="a" style="left:1626px;top:874px;width:3px;height:1px;background:repeating-linear-gradient(to right,#a8a8a8 0 1px,transparent 1px 2px)"></div>
<svg style="left:1629px;top:867.7px;" width="12" height="12" viewBox="0 0 12 12"><path d="M6 0.5V11.5M0.5 6H11.5" stroke="#1a8a1a" stroke-width="1.3" stroke-dasharray="1.3 1"/><path d="M3 3H9V9H3z" fill="#f3c020"/><path d="M3 4Q6 1 9 4V8Q6 11 3 8z" fill="#f8d040" stroke="#c89010" stroke-width="0.5"/></svg>
<div class="t" style="left:1647.00px;top:869.23px;font-size:9.3px;color:#111;transform:scaleX(0.9296);">Ригель Б48-1</div>
<svg style="left:1873px;top:869.7px;" width="13" height="9" viewBox="0 0 13 9"><path d="M0.5 4.5Q6.5 -1.5 12.5 4.5Q6.5 10.5 0.5 4.5z" fill="#e8eee8" stroke="#555" stroke-width="0.9"/><circle cx="6.5" cy="4.5" r="2.6" fill="#3aa050"/><circle cx="6.5" cy="4.5" r="1" fill="#111"/></svg>
<svg style="left:1888px;top:867.7px;" width="11" height="12" viewBox="0 0 11 12"><circle cx="4" cy="4" r="3.3" fill="#fafafa" stroke="#bbb" stroke-width="0.9"/><path d="M6.5 6.5L10 10.5" stroke="#d08040" stroke-width="1.6"/></svg>
<svg style="left:1617px;top:882.0px;" width="9" height="9" viewBox="0 0 9 9"><rect x="0.5" y="0.5" width="8" height="8" fill="#f4f4f4" stroke="#a0a0a0" stroke-width="0.8"/><path d="M2 4.5H7" stroke="#3a4aa0" stroke-width="1"/><path d="M4.5 2V7" stroke="#3a4aa0" stroke-width="1"/></svg>
<div class="a" style="left:1626px;top:886px;width:3px;height:1px;background:repeating-linear-gradient(to right,#a8a8a8 0 1px,transparent 1px 2px)"></div>
<svg style="left:1629px;top:880.5px;" width="12" height="12" viewBox="0 0 12 12"><path d="M6 0.5V11.5M0.5 6H11.5" stroke="#1a8a1a" stroke-width="1.3" stroke-dasharray="1.3 1"/><path d="M3 3H9V9H3z" fill="#f3c020"/><path d="M3 4Q6 1 9 4V8Q6 11 3 8z" fill="#f8d040" stroke="#c89010" stroke-width="0.5"/></svg>
<div class="t" style="left:1647.00px;top:882.03px;font-size:9.3px;color:#111;transform:scaleX(0.9296);">Ригель Б48-1</div>
<svg style="left:1873px;top:882.5px;" width="13" height="9" viewBox="0 0 13 9"><path d="M0.5 4.5Q6.5 -1.5 12.5 4.5Q6.5 10.5 0.5 4.5z" fill="#e8eee8" stroke="#555" stroke-width="0.9"/><circle cx="6.5" cy="4.5" r="2.6" fill="#3aa050"/><circle cx="6.5" cy="4.5" r="1" fill="#111"/></svg>
<svg style="left:1888px;top:880.5px;" width="11" height="12" viewBox="0 0 11 12"><circle cx="4" cy="4" r="3.3" fill="#fafafa" stroke="#bbb" stroke-width="0.9"/><path d="M6.5 6.5L10 10.5" stroke="#d08040" stroke-width="1.6"/></svg>
<svg style="left:1617px;top:894.8px;" width="9" height="9" viewBox="0 0 9 9"><rect x="0.5" y="0.5" width="8" height="8" fill="#f4f4f4" stroke="#a0a0a0" stroke-width="0.8"/><path d="M2 4.5H7" stroke="#3a4aa0" stroke-width="1"/><path d="M4.5 2V7" stroke="#3a4aa0" stroke-width="1"/></svg>
<div class="a" style="left:1626px;top:899px;width:3px;height:1px;background:repeating-linear-gradient(to right,#a8a8a8 0 1px,transparent 1px 2px)"></div>
<svg style="left:1629px;top:893.3px;" width="12" height="12" viewBox="0 0 12 12"><path d="M6 0.5V11.5M0.5 6H11.5" stroke="#1a8a1a" stroke-width="1.3" stroke-dasharray="1.3 1"/><path d="M3 3H9V9H3z" fill="#f3c020"/><path d="M3 4Q6 1 9 4V8Q6 11 3 8z" fill="#f8d040" stroke="#c89010" stroke-width="0.5"/></svg>
<div class="t" style="left:1647.00px;top:894.83px;font-size:9.3px;color:#111;transform:scaleX(0.8965);">Сборка Р2 Ригель</div>
<svg style="left:1873px;top:895.3px;" width="13" height="9" viewBox="0 0 13 9"><path d="M0.5 4.5Q6.5 -1.5 12.5 4.5Q6.5 10.5 0.5 4.5z" fill="#e8eee8" stroke="#555" stroke-width="0.9"/><circle cx="6.5" cy="4.5" r="2.6" fill="#3aa050"/><circle cx="6.5" cy="4.5" r="1" fill="#111"/></svg>
<svg style="left:1888px;top:893.3px;" width="11" height="12" viewBox="0 0 11 12"><circle cx="4" cy="4" r="3.3" fill="#fafafa" stroke="#bbb" stroke-width="0.9"/><path d="M6.5 6.5L10 10.5" stroke="#d08040" stroke-width="1.6"/></svg>
<svg style="left:1617px;top:907.6px;" width="9" height="9" viewBox="0 0 9 9"><rect x="0.5" y="0.5" width="8" height="8" fill="#f4f4f4" stroke="#a0a0a0" stroke-width="0.8"/><path d="M2 4.5H7" stroke="#3a4aa0" stroke-width="1"/><path d="M4.5 2V7" stroke="#3a4aa0" stroke-width="1"/></svg>
<div class="a" style="left:1626px;top:912px;width:3px;height:1px;background:repeating-linear-gradient(to right,#a8a8a8 0 1px,transparent 1px 2px)"></div>
<svg style="left:1629px;top:906.1px;" width="12" height="12" viewBox="0 0 12 12"><path d="M6 0.5V11.5M0.5 6H11.5" stroke="#1a8a1a" stroke-width="1.3" stroke-dasharray="1.3 1"/><path d="M3 3H9V9H3z" fill="#f3c020"/><path d="M3 4Q6 1 9 4V8Q6 11 3 8z" fill="#f8d040" stroke="#c89010" stroke-width="0.5"/></svg>
<div class="t" style="left:1647.00px;top:907.63px;font-size:9.3px;color:#111;transform:scaleX(0.8965);">Сборка Р2 Ригель</div>
<svg style="left:1873px;top:908.1px;" width="13" height="9" viewBox="0 0 13 9"><path d="M0.5 4.5Q6.5 -1.5 12.5 4.5Q6.5 10.5 0.5 4.5z" fill="#e8eee8" stroke="#555" stroke-width="0.9"/><circle cx="6.5" cy="4.5" r="2.6" fill="#3aa050"/><circle cx="6.5" cy="4.5" r="1" fill="#111"/></svg>
<svg style="left:1888px;top:906.1px;" width="11" height="12" viewBox="0 0 11 12"><circle cx="4" cy="4" r="3.3" fill="#fafafa" stroke="#bbb" stroke-width="0.9"/><path d="M6.5 6.5L10 10.5" stroke="#d08040" stroke-width="1.6"/></svg>
<svg style="left:1617px;top:920.4000000000001px;" width="9" height="9" viewBox="0 0 9 9"><rect x="0.5" y="0.5" width="8" height="8" fill="#f4f4f4" stroke="#a0a0a0" stroke-width="0.8"/><path d="M2 4.5H7" stroke="#3a4aa0" stroke-width="1"/><path d="M4.5 2V7" stroke="#3a4aa0" stroke-width="1"/></svg>
<div class="a" style="left:1626px;top:925px;width:3px;height:1px;background:repeating-linear-gradient(to right,#a8a8a8 0 1px,transparent 1px 2px)"></div>
<svg style="left:1629px;top:918.9000000000001px;" width="12" height="12" viewBox="0 0 12 12"><path d="M6 0.5V11.5M0.5 6H11.5" stroke="#1a8a1a" stroke-width="1.3" stroke-dasharray="1.3 1"/><path d="M3 3H9V9H3z" fill="#f3c020"/><path d="M3 4Q6 1 9 4V8Q6 11 3 8z" fill="#f8d040" stroke="#c89010" stroke-width="0.5"/></svg>
<div class="t" style="left:1647.00px;top:920.43px;font-size:9.3px;color:#111;transform:scaleX(0.8965);">Сборка Р2 Ригель</div>
<svg style="left:1873px;top:920.9000000000001px;" width="13" height="9" viewBox="0 0 13 9"><path d="M0.5 4.5Q6.5 -1.5 12.5 4.5Q6.5 10.5 0.5 4.5z" fill="#e8eee8" stroke="#555" stroke-width="0.9"/><circle cx="6.5" cy="4.5" r="2.6" fill="#3aa050"/><circle cx="6.5" cy="4.5" r="1" fill="#111"/></svg>
<svg style="left:1888px;top:918.9000000000001px;" width="11" height="12" viewBox="0 0 11 12"><circle cx="4" cy="4" r="3.3" fill="#fafafa" stroke="#bbb" stroke-width="0.9"/><path d="M6.5 6.5L10 10.5" stroke="#d08040" stroke-width="1.6"/></svg>
<div class="a" style="left:1612px;top:975.5px;width:274px;height:15px;background:#fff;border:1px solid #7a7a7a;border-right-color:#e0e0e0;border-bottom-color:#e0e0e0"></div>
<div class="a" style="left:1887px;top:976px;width:12px;height:14px;background:#e8e8e8;border:1px solid #d0d0d0"></div>
<svg style="left:1889.5px;top:980px;" width="7" height="7" viewBox="0 0 7 7"><path d="M0.5 0.5L6.5 6.5M6.5 0.5L0.5 6.5" stroke="#333" stroke-width="1.1"/></svg>
<div class="a" style="left:1611px;top:992px;width:118px;height:21.5px;background:#d2d2d2;"></div>
<div class="a" style="left:1730px;top:992px;width:93px;height:21.5px;background:#d2d2d2;"></div>
<div class="t" style="left:1617.50px;top:997.74px;font-size:12px;color:#2a2a2a;transform:scaleX(0.9051);">Узлы и готовые реш...</div>
<div class="t" style="left:1736.00px;top:997.74px;font-size:12px;color:#2a2a2a;transform:scaleX(0.9019);">Спецификация</div>
<div class="t" style="left:1831.30px;top:997.74px;font-size:12px;color:#2a2a2a;transform:scaleX(0.9107);">CADLib Проект</div>
</body></html>
